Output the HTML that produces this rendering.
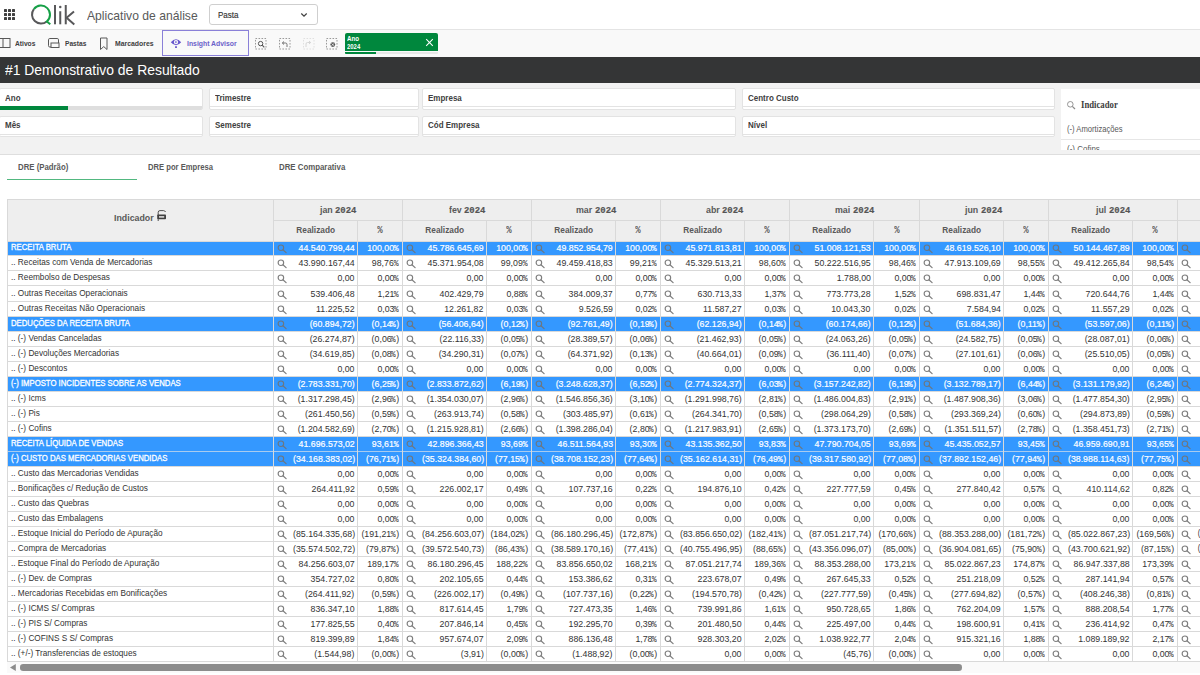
<!DOCTYPE html>
<html><head><meta charset="utf-8"><title>Qlik</title>
<style>
html,body{margin:0;padding:0;width:1200px;height:675px;overflow:hidden;background:#fff;position:relative}
.t{position:absolute;white-space:nowrap}
.r{position:absolute}
</style></head><body>
<div class="r" style="left:0.00px;top:0.00px;width:1200.00px;height:29.00px;background:#ffffff;"></div>
<div class="r" style="left:0.00px;top:29.00px;width:1200.00px;height:1.00px;background:#e4e4e4;"></div>
<div class="r" style="left:4.30px;top:9.00px;width:3.00px;height:3.00px;background:#404040;border-radius:0.6px;"></div>
<div class="r" style="left:4.30px;top:13.00px;width:3.00px;height:3.00px;background:#404040;border-radius:0.6px;"></div>
<div class="r" style="left:4.30px;top:17.00px;width:3.00px;height:3.00px;background:#404040;border-radius:0.6px;"></div>
<div class="r" style="left:8.30px;top:9.00px;width:3.00px;height:3.00px;background:#404040;border-radius:0.6px;"></div>
<div class="r" style="left:8.30px;top:13.00px;width:3.00px;height:3.00px;background:#404040;border-radius:0.6px;"></div>
<div class="r" style="left:8.30px;top:17.00px;width:3.00px;height:3.00px;background:#404040;border-radius:0.6px;"></div>
<div class="r" style="left:12.30px;top:9.00px;width:3.00px;height:3.00px;background:#404040;border-radius:0.6px;"></div>
<div class="r" style="left:12.30px;top:13.00px;width:3.00px;height:3.00px;background:#404040;border-radius:0.6px;"></div>
<div class="r" style="left:12.30px;top:17.00px;width:3.00px;height:3.00px;background:#404040;border-radius:0.6px;"></div>
<svg class="r" style="left:0px;top:0px" width="80" height="29" viewBox="0 0 80 29">
<path d="M 46.79 21.49 A 9 9 0 0 1 33.88 9.1" fill="none" stroke="#58585a" stroke-width="2"/>
<path d="M 33.88 9.1 A 9 9 0 1 1 46.79 21.49 L 50.3 24.3" fill="none" stroke="#16a047" stroke-width="2"/>
<rect x="54" y="5" width="2" height="19.3" fill="#58585a"/>
<circle cx="60.25" cy="6.9" r="1.25" fill="#58585a"/>
<rect x="59.25" y="11.25" width="2" height="13.05" fill="#58585a"/>
<rect x="64.75" y="5" width="2" height="19.3" fill="#58585a"/>
<path d="M 74 11.4 L 66.6 17.7 L 74.3 24.4" fill="none" stroke="#58585a" stroke-width="2"/>
</svg>
<div class="t" style="left:87.00px;top:6.55px;font:400 13.6px/17.68px 'Liberation Sans', sans-serif;color:#595959;transform:scaleX(0.8928);transform-origin:left;">Aplicativo de análise</div>
<div class="r" style="left:208.75px;top:4.20px;width:109.00px;height:20.60px;background:#fff;border:1px solid #cfcfcf;border-radius:3px;box-sizing:border-box;"></div>
<div class="t" style="left:217.50px;top:9.83px;font:400 8.6px/11.18px 'Liberation Sans', sans-serif;color:#333333;transform:scaleX(0.9322);transform-origin:left;-webkit-text-stroke:0.15px #333;">Pasta</div>
<svg class="r" style="left:300px;top:12px" width="8" height="6" viewBox="0 0 8 6"><path d="M1.3 1.5 L4 4.2 L6.7 1.5" fill="none" stroke="#404040" stroke-width="1.2"/></svg>
<div class="r" style="left:0.00px;top:30.00px;width:1200.00px;height:26.50px;background:#f9f9f9;"></div>
<svg class="r" style="left:-2px;top:37px" width="14" height="13" viewBox="0 0 14 13"><rect x="1" y="1.5" width="11" height="9" fill="none" stroke="#595959" stroke-width="1"/><line x1="5" y1="1.5" x2="5" y2="10.5" stroke="#595959" stroke-width="1"/></svg>
<div class="t" style="left:15.00px;top:39.33px;font:700 7.6px/9.88px 'Liberation Sans', sans-serif;color:#404040;transform:scaleX(0.8783);transform-origin:left;">Ativos</div>
<svg class="r" style="left:47px;top:37px" width="14" height="13" viewBox="0 0 14 13"><rect x="1.5" y="1.5" width="10" height="8.5" rx="1.3" fill="none" stroke="#595959" stroke-width="1"/><rect x="4" y="6" width="8" height="4.5" fill="#f9f9f9" stroke="#595959" stroke-width="1"/></svg>
<div class="t" style="left:64.60px;top:39.33px;font:700 7.6px/9.88px 'Liberation Sans', sans-serif;color:#404040;transform:scaleX(0.8732);transform-origin:left;">Pastas</div>
<svg class="r" style="left:99px;top:37px" width="10" height="14" viewBox="0 0 10 14"><path d="M1.5 1 L8 1 L8 12.5 L4.75 9.6 L1.5 12.5 Z" fill="none" stroke="#595959" stroke-width="1"/></svg>
<div class="t" style="left:114.60px;top:39.33px;font:700 7.6px/9.88px 'Liberation Sans', sans-serif;color:#404040;transform:scaleX(0.9047);transform-origin:left;">Marcadores</div>
<div class="r" style="left:162.00px;top:30.00px;width:86.50px;height:26.00px;background:transparent;border:1px solid #8a80d8;box-sizing:border-box;"></div>
<svg class="r" style="left:170px;top:37px" width="12" height="12" viewBox="0 0 12 12"><path d="M0.8 5.3 Q6 -0.6 11.2 5.3 Q6 11.2 0.8 5.3 Z" fill="#6655cc"/><circle cx="6" cy="5.1" r="2.2" fill="#f9f9f9"/><path d="M5.3 4 L7.3 5.1 L5.3 6.2 Z" fill="#6655cc"/><rect x="5" y="9.3" width="2" height="1.6" fill="#6655cc"/></svg>
<div class="t" style="left:186.50px;top:39.33px;font:700 7.6px/9.88px 'Liberation Sans', sans-serif;color:#6b5fc9;transform:scaleX(0.9013);transform-origin:left;">Insight Advisor</div>
<svg class="r" style="left:255px;top:38px" width="12" height="12" viewBox="0 0 12 12"><rect x="0.5" y="0.5" width="10.5" height="10.5" fill="none" stroke="#9a9a9a" stroke-width="1" stroke-dasharray="1.6 1.4"/><circle cx="5.6" cy="5.6" r="2.2" fill="none" stroke="#555" stroke-width="1"/><line x1="7.2" y1="7.2" x2="9.3" y2="9.3" stroke="#555" stroke-width="1.1"/></svg>
<svg class="r" style="left:279px;top:38px" width="12" height="12" viewBox="0 0 12 12"><rect x="0.5" y="0.5" width="10.5" height="10.5" fill="none" stroke="#9a9a9a" stroke-width="1" stroke-dasharray="1.6 1.4"/><path d="M8 9 L8 6.5 Q8 5 6.5 5 L3.5 5 M5 3.5 L3.3 5 L5 6.5" fill="none" stroke="#666" stroke-width="0.9"/></svg>
<svg class="r" style="left:302.5px;top:38px" width="12" height="12" viewBox="0 0 12 12"><rect x="0.5" y="0.5" width="10.5" height="10.5" fill="none" stroke="#e0e0e0" stroke-width="1" stroke-dasharray="1.6 1.4"/><path d="M3 9 L3 6 Q3 4.5 4.5 4.5 L7.5 4.5 M6 3 L7.7 4.5 L6 6" fill="none" stroke="#d6d6d6" stroke-width="1"/></svg>
<svg class="r" style="left:326px;top:38px" width="12" height="12" viewBox="0 0 12 12"><rect x="0.5" y="0.5" width="10.5" height="10.5" fill="none" stroke="#9a9a9a" stroke-width="1" stroke-dasharray="1.6 1.4"/><circle cx="6.8" cy="6.6" r="2.4" fill="#555"/><path d="M5.6 5.4 L8 7.8 M8 5.4 L5.6 7.8" stroke="#f9f9f9" stroke-width="0.8"/></svg>
<div class="r" style="left:344.70px;top:33.20px;width:93.30px;height:17.60px;background:#00873d;border-radius:2px 2px 0 0;"></div>
<div class="r" style="left:344.70px;top:51.90px;width:93.30px;height:2.10px;background:#e8e8e8;border-radius:0 0 1px 1px;"></div>
<div class="r" style="left:344.70px;top:51.90px;width:31.10px;height:2.10px;background:#00873d;border-radius:0 0 0 1px;"></div>
<div class="t" style="left:347.20px;top:33.63px;font:700 7.2px/9.36px 'Liberation Sans', sans-serif;color:#ffffff;transform:scaleX(0.8574);transform-origin:left;">Ano</div>
<div class="t" style="left:347.20px;top:41.83px;font:700 7.2px/9.36px 'Liberation Sans', sans-serif;color:#ffffff;transform:scaleX(0.8241);transform-origin:left;">2024</div>
<svg class="r" style="left:425px;top:38px" width="9" height="9" viewBox="0 0 9 9"><path d="M1.2 1.2 L7.8 7.8 M7.8 1.2 L1.2 7.8" stroke="#fff" stroke-width="1.05"/></svg>
<div class="r" style="left:0.00px;top:56.50px;width:1200.00px;height:26.10px;background:#343536;"></div>
<div class="t" style="left:5.25px;top:60.65px;font:400 14.3px/18.59px 'Liberation Sans', sans-serif;color:#ffffff;transform:scaleX(0.9725);transform-origin:left;">#1 Demonstrativo de Resultado</div>
<div class="r" style="left:0.00px;top:82.60px;width:1200.00px;height:71.70px;background:#f2f2f2;"></div>
<div class="r" style="left:0.00px;top:154.30px;width:1200.00px;height:1.00px;background:#dedede;"></div>
<div class="r" style="left:-1.00px;top:88.30px;width:204.40px;height:22.20px;background:#ffffff;border:1px solid #e3e3e3;border-radius:2px;box-sizing:border-box;"></div>
<div class="r" style="left:0.00px;top:106.30px;width:202.20px;height:3.70px;background:#dedede;border-radius:0 0 2px 0;"></div>
<div class="r" style="left:0.00px;top:106.30px;width:68.00px;height:3.70px;background:#00873d;"></div>
<div class="t" style="left:5.40px;top:91.73px;font:700 9.3px/12.09px 'Liberation Sans', sans-serif;color:#404040;transform:scaleX(0.8600);transform-origin:left;">Ano</div>
<div class="r" style="left:-1.00px;top:116.20px;width:204.40px;height:21.10px;background:#ffffff;border:1px solid #e3e3e3;border-radius:2px;box-sizing:border-box;"></div>
<div class="r" style="left:0.00px;top:134.20px;width:202.40px;height:0.90px;background:#e3e3e3;"></div>
<div class="t" style="left:5.40px;top:118.93px;font:700 9.3px/12.09px 'Liberation Sans', sans-serif;color:#404040;transform:scaleX(0.8600);transform-origin:left;">Mês</div>
<div class="r" style="left:208.60px;top:88.30px;width:210.00px;height:22.20px;background:#ffffff;border:1px solid #e3e3e3;border-radius:2px;box-sizing:border-box;"></div>
<div class="r" style="left:209.60px;top:106.30px;width:208.00px;height:0.90px;background:#e3e3e3;"></div>
<div class="t" style="left:214.60px;top:91.73px;font:700 9.3px/12.09px 'Liberation Sans', sans-serif;color:#404040;transform:scaleX(0.8600);transform-origin:left;">Trimestre</div>
<div class="r" style="left:208.60px;top:116.20px;width:210.00px;height:21.10px;background:#ffffff;border:1px solid #e3e3e3;border-radius:2px;box-sizing:border-box;"></div>
<div class="r" style="left:209.60px;top:134.20px;width:208.00px;height:0.90px;background:#e3e3e3;"></div>
<div class="t" style="left:214.60px;top:118.93px;font:700 9.3px/12.09px 'Liberation Sans', sans-serif;color:#404040;transform:scaleX(0.8600);transform-origin:left;">Semestre</div>
<div class="r" style="left:422.40px;top:88.30px;width:314.10px;height:22.20px;background:#ffffff;border:1px solid #e3e3e3;border-radius:2px;box-sizing:border-box;"></div>
<div class="r" style="left:423.40px;top:106.30px;width:312.10px;height:0.90px;background:#e3e3e3;"></div>
<div class="t" style="left:428.40px;top:91.73px;font:700 9.3px/12.09px 'Liberation Sans', sans-serif;color:#404040;transform:scaleX(0.8600);transform-origin:left;">Empresa</div>
<div class="r" style="left:422.40px;top:116.20px;width:314.10px;height:21.10px;background:#ffffff;border:1px solid #e3e3e3;border-radius:2px;box-sizing:border-box;"></div>
<div class="r" style="left:423.40px;top:134.20px;width:312.10px;height:0.90px;background:#e3e3e3;"></div>
<div class="t" style="left:428.40px;top:118.93px;font:700 9.3px/12.09px 'Liberation Sans', sans-serif;color:#404040;transform:scaleX(0.8600);transform-origin:left;">Cód Empresa</div>
<div class="r" style="left:741.70px;top:88.30px;width:313.00px;height:22.20px;background:#ffffff;border:1px solid #e3e3e3;border-radius:2px;box-sizing:border-box;"></div>
<div class="r" style="left:742.70px;top:106.30px;width:311.00px;height:0.90px;background:#e3e3e3;"></div>
<div class="t" style="left:747.70px;top:91.73px;font:700 9.3px/12.09px 'Liberation Sans', sans-serif;color:#404040;transform:scaleX(0.8600);transform-origin:left;">Centro Custo</div>
<div class="r" style="left:741.70px;top:116.20px;width:313.00px;height:21.10px;background:#ffffff;border:1px solid #e3e3e3;border-radius:2px;box-sizing:border-box;"></div>
<div class="r" style="left:742.70px;top:134.20px;width:311.00px;height:0.90px;background:#e3e3e3;"></div>
<div class="t" style="left:747.70px;top:118.93px;font:700 9.3px/12.09px 'Liberation Sans', sans-serif;color:#404040;transform:scaleX(0.8600);transform-origin:left;">Nível</div>
<div class="r" style="left:1061.00px;top:89.00px;width:139.00px;height:60.70px;background:#ffffff;"></div>
<svg class="r" style="left:1066px;top:100px" width="12" height="11" viewBox="0 0 12 11"><circle cx="4.3" cy="4.3" r="2.8" fill="none" stroke="#8a8a8a" stroke-width="0.9"/><line x1="6.3" y1="6.3" x2="9" y2="9" stroke="#8a8a8a" stroke-width="1.2"/></svg>
<div class="t" style="left:1080.70px;top:97.53px;font:700 10.3px/13.39px 'Liberation Serif', serif;color:#404040;transform:scaleX(0.8460);transform-origin:left;">Indicador</div>
<div class="t" style="left:1067.00px;top:124.03px;font:400 8.6px/11.18px 'Liberation Sans', sans-serif;color:#595959;transform:scaleX(0.8897);transform-origin:left;">(-) Amortizações</div>
<div class="r" style="left:1061.00px;top:139.20px;width:139.00px;height:1.00px;background:#e6e6e6;"></div>
<div class="r" style="left:1061px;top:140.2px;width:139px;height:9.5px;overflow:hidden"><div class="t" style="left:6px;top:3.8px;font:400 8.6px/11px 'Liberation Sans', sans-serif;color:#595959;transform:scaleX(0.93);transform-origin:left">(-) Cofins</div></div>
<div class="t" style="left:18.00px;top:160.73px;font:700 9.3px/12.09px 'Liberation Sans', sans-serif;color:#595959;transform:scaleX(0.8391);transform-origin:left;">DRE (Padrão)</div>
<div class="t" style="left:148.30px;top:160.73px;font:700 9.3px/12.09px 'Liberation Sans', sans-serif;color:#595959;transform:scaleX(0.8220);transform-origin:left;">DRE por Empresa</div>
<div class="t" style="left:279.00px;top:160.73px;font:700 9.3px/12.09px 'Liberation Sans', sans-serif;color:#595959;transform:scaleX(0.8440);transform-origin:left;">DRE Comparativa</div>
<div class="r" style="left:7.00px;top:178.80px;width:129.70px;height:1.70px;background:#52b880;"></div>
<div class="r" style="left:7.00px;top:199.50px;width:1193.00px;height:41.50px;background:#eeeeee;"></div>
<div class="r" style="left:7.00px;top:242.00px;width:1193.00px;height:13.00px;background:#3498ff;"></div>
<div class="r" style="left:7.00px;top:317.00px;width:1193.00px;height:14.00px;background:#3498ff;"></div>
<div class="r" style="left:7.00px;top:377.00px;width:1193.00px;height:14.00px;background:#3498ff;"></div>
<div class="r" style="left:7.00px;top:437.00px;width:1193.00px;height:14.00px;background:#3498ff;"></div>
<div class="r" style="left:7.00px;top:452.00px;width:1193.00px;height:14.00px;background:#3498ff;"></div>
<div class="r" style="left:7.00px;top:199.00px;width:1193.00px;height:1.00px;background:#d9d9d9;"></div>
<div class="r" style="left:273.00px;top:220.00px;width:927.00px;height:1.00px;background:#d9d9d9;"></div>
<div class="r" style="left:7.00px;top:241.00px;width:1193.00px;height:1.00px;background:#d9d9d9;"></div>
<div class="r" style="left:7.00px;top:255.00px;width:1193.00px;height:1.00px;background:#d9d9d9;"></div>
<div class="r" style="left:7.00px;top:270.00px;width:1193.00px;height:1.00px;background:#d9d9d9;"></div>
<div class="r" style="left:7.00px;top:285.00px;width:1193.00px;height:1.00px;background:#d9d9d9;"></div>
<div class="r" style="left:7.00px;top:301.00px;width:1193.00px;height:1.00px;background:#d9d9d9;"></div>
<div class="r" style="left:7.00px;top:316.00px;width:1193.00px;height:1.00px;background:#d9d9d9;"></div>
<div class="r" style="left:7.00px;top:331.00px;width:1193.00px;height:1.00px;background:#d9d9d9;"></div>
<div class="r" style="left:7.00px;top:346.00px;width:1193.00px;height:1.00px;background:#d9d9d9;"></div>
<div class="r" style="left:7.00px;top:361.00px;width:1193.00px;height:1.00px;background:#d9d9d9;"></div>
<div class="r" style="left:7.00px;top:376.00px;width:1193.00px;height:1.00px;background:#d9d9d9;"></div>
<div class="r" style="left:7.00px;top:391.00px;width:1193.00px;height:1.00px;background:#d9d9d9;"></div>
<div class="r" style="left:7.00px;top:406.00px;width:1193.00px;height:1.00px;background:#d9d9d9;"></div>
<div class="r" style="left:7.00px;top:421.00px;width:1193.00px;height:1.00px;background:#d9d9d9;"></div>
<div class="r" style="left:7.00px;top:436.00px;width:1193.00px;height:1.00px;background:#d9d9d9;"></div>
<div class="r" style="left:7.00px;top:451.00px;width:1193.00px;height:1.00px;background:#a9cbee;"></div>
<div class="r" style="left:7.00px;top:466.00px;width:1193.00px;height:1.00px;background:#d9d9d9;"></div>
<div class="r" style="left:7.00px;top:481.00px;width:1193.00px;height:1.00px;background:#d9d9d9;"></div>
<div class="r" style="left:7.00px;top:496.00px;width:1193.00px;height:1.00px;background:#d9d9d9;"></div>
<div class="r" style="left:7.00px;top:511.00px;width:1193.00px;height:1.00px;background:#d9d9d9;"></div>
<div class="r" style="left:7.00px;top:526.00px;width:1193.00px;height:1.00px;background:#d9d9d9;"></div>
<div class="r" style="left:7.00px;top:541.00px;width:1193.00px;height:1.00px;background:#d9d9d9;"></div>
<div class="r" style="left:7.00px;top:556.00px;width:1193.00px;height:1.00px;background:#d9d9d9;"></div>
<div class="r" style="left:7.00px;top:571.00px;width:1193.00px;height:1.00px;background:#d9d9d9;"></div>
<div class="r" style="left:7.00px;top:586.00px;width:1193.00px;height:1.00px;background:#d9d9d9;"></div>
<div class="r" style="left:7.00px;top:601.00px;width:1193.00px;height:1.00px;background:#d9d9d9;"></div>
<div class="r" style="left:7.00px;top:616.00px;width:1193.00px;height:1.00px;background:#d9d9d9;"></div>
<div class="r" style="left:7.00px;top:631.00px;width:1193.00px;height:1.00px;background:#d9d9d9;"></div>
<div class="r" style="left:7.00px;top:646.00px;width:1193.00px;height:1.00px;background:#d9d9d9;"></div>
<div class="r" style="left:7.00px;top:661.00px;width:1193.00px;height:1.00px;background:#d9d9d9;"></div>
<div class="r" style="left:7.00px;top:199.50px;width:1.00px;height:462.50px;background:#d9d9d9;"></div>
<div class="r" style="left:273.00px;top:199.50px;width:1.00px;height:462.50px;background:#d9d9d9;"></div>
<div class="r" style="left:357.00px;top:220.20px;width:1.00px;height:441.80px;background:#d9d9d9;"></div>
<div class="r" style="left:402.00px;top:199.50px;width:1.00px;height:462.50px;background:#d9d9d9;"></div>
<div class="r" style="left:486.00px;top:220.20px;width:1.00px;height:441.80px;background:#d9d9d9;"></div>
<div class="r" style="left:531.00px;top:199.50px;width:1.00px;height:462.50px;background:#d9d9d9;"></div>
<div class="r" style="left:615.00px;top:220.20px;width:1.00px;height:441.80px;background:#d9d9d9;"></div>
<div class="r" style="left:660.00px;top:199.50px;width:1.00px;height:462.50px;background:#d9d9d9;"></div>
<div class="r" style="left:744.00px;top:220.20px;width:1.00px;height:441.80px;background:#d9d9d9;"></div>
<div class="r" style="left:789.00px;top:199.50px;width:1.00px;height:462.50px;background:#d9d9d9;"></div>
<div class="r" style="left:873.00px;top:220.20px;width:1.00px;height:441.80px;background:#d9d9d9;"></div>
<div class="r" style="left:919.00px;top:199.50px;width:1.00px;height:462.50px;background:#d9d9d9;"></div>
<div class="r" style="left:1003.00px;top:220.20px;width:1.00px;height:441.80px;background:#d9d9d9;"></div>
<div class="r" style="left:1048.00px;top:199.50px;width:1.00px;height:462.50px;background:#d9d9d9;"></div>
<div class="r" style="left:1132.00px;top:220.20px;width:1.00px;height:441.80px;background:#d9d9d9;"></div>
<div class="r" style="left:1177.00px;top:199.50px;width:1.00px;height:462.50px;background:#d9d9d9;"></div>
<div class="r" style="left:1261.00px;top:220.20px;width:1.00px;height:441.80px;background:#d9d9d9;"></div>
<div class="t" style="left:114.30px;top:212.03px;font:700 9.3px/12.09px 'Liberation Sans', sans-serif;color:#595959;transform:scaleX(0.9485);transform-origin:left;">Indicador</div>
<svg class="r" style="left:156px;top:209px" width="12" height="13" viewBox="0 0 12 13"><path d="M2.2 7 L2.2 3.3 Q2.2 1.6 4 1.6 L7.6 1.6 Q8.8 1.6 9.6 3" fill="none" stroke="#404040" stroke-width="0.9"/><rect x="1.2" y="5.6" width="8.8" height="4.6" rx="0.8" fill="#404040"/><rect x="3" y="7.2" width="5.2" height="1.4" fill="#eee"/><line x1="2.2" y1="10.2" x2="2.2" y2="12" stroke="#404040" stroke-width="0.9"/></svg>
<div class="t" style="left:319.57px;top:203.83px;font:700 9.3px/12.09px 'Liberation Sans', sans-serif;color:#595959;transform:scaleX(0.9500);transform-origin:left;">jan</div>
<div class="t" style="left:334.93px;top:205.03px;font:700 9.9px/12.87px 'Liberation Mono', monospace;color:#555555;transform:scaleX(0.9048);transform-origin:left;-webkit-text-stroke:0.2px #555;">2024</div>
<div class="t" style="left:293.79px;top:223.63px;font:700 9.3px/12.09px 'Liberation Sans', sans-serif;color:#595959;transform:scaleX(0.8914);transform-origin:center;">Realizado</div>
<div class="t" style="left:377.00px;top:224.14px;font:700 10.0px/13.00px 'Liberation Mono', monospace;color:#595959;transform:scaleX(0.8999);transform-origin:center;">%</div>
<div class="t" style="left:448.56px;top:203.83px;font:700 9.3px/12.09px 'Liberation Sans', sans-serif;color:#595959;transform:scaleX(0.9500);transform-origin:left;">fev</div>
<div class="t" style="left:463.94px;top:205.03px;font:700 9.9px/12.87px 'Liberation Mono', monospace;color:#555555;transform:scaleX(0.9048);transform-origin:left;-webkit-text-stroke:0.2px #555;">2024</div>
<div class="t" style="left:422.79px;top:223.63px;font:700 9.3px/12.09px 'Liberation Sans', sans-serif;color:#595959;transform:scaleX(0.8914);transform-origin:center;">Realizado</div>
<div class="t" style="left:506.00px;top:224.14px;font:700 10.0px/13.00px 'Liberation Mono', monospace;color:#595959;transform:scaleX(0.8999);transform-origin:center;">%</div>
<div class="t" style="left:575.85px;top:203.83px;font:700 9.3px/12.09px 'Liberation Sans', sans-serif;color:#595959;transform:scaleX(0.9500);transform-origin:left;">mar</div>
<div class="t" style="left:594.65px;top:205.03px;font:700 9.9px/12.87px 'Liberation Mono', monospace;color:#555555;transform:scaleX(0.9048);transform-origin:left;-webkit-text-stroke:0.2px #555;">2024</div>
<div class="t" style="left:551.79px;top:223.63px;font:700 9.3px/12.09px 'Liberation Sans', sans-serif;color:#595959;transform:scaleX(0.8914);transform-origin:center;">Realizado</div>
<div class="t" style="left:635.00px;top:224.14px;font:700 10.0px/13.00px 'Liberation Mono', monospace;color:#595959;transform:scaleX(0.8999);transform-origin:center;">%</div>
<div class="t" style="left:706.08px;top:203.83px;font:700 9.3px/12.09px 'Liberation Sans', sans-serif;color:#595959;transform:scaleX(0.9500);transform-origin:left;">abr</div>
<div class="t" style="left:722.42px;top:205.03px;font:700 9.9px/12.87px 'Liberation Mono', monospace;color:#555555;transform:scaleX(0.9048);transform-origin:left;-webkit-text-stroke:0.2px #555;">2024</div>
<div class="t" style="left:680.79px;top:223.63px;font:700 9.3px/12.09px 'Liberation Sans', sans-serif;color:#595959;transform:scaleX(0.8914);transform-origin:center;">Realizado</div>
<div class="t" style="left:764.00px;top:224.14px;font:700 10.0px/13.00px 'Liberation Mono', monospace;color:#595959;transform:scaleX(0.8999);transform-origin:center;">%</div>
<div class="t" style="left:834.84px;top:203.83px;font:700 9.3px/12.09px 'Liberation Sans', sans-serif;color:#595959;transform:scaleX(0.9500);transform-origin:left;">mai</div>
<div class="t" style="left:852.66px;top:205.03px;font:700 9.9px/12.87px 'Liberation Mono', monospace;color:#555555;transform:scaleX(0.9048);transform-origin:left;-webkit-text-stroke:0.2px #555;">2024</div>
<div class="t" style="left:809.79px;top:223.63px;font:700 9.3px/12.09px 'Liberation Sans', sans-serif;color:#595959;transform:scaleX(0.8914);transform-origin:center;">Realizado</div>
<div class="t" style="left:893.50px;top:224.14px;font:700 10.0px/13.00px 'Liberation Mono', monospace;color:#595959;transform:scaleX(0.8999);transform-origin:center;">%</div>
<div class="t" style="left:965.33px;top:203.83px;font:700 9.3px/12.09px 'Liberation Sans', sans-serif;color:#595959;transform:scaleX(0.9500);transform-origin:left;">jun</div>
<div class="t" style="left:981.17px;top:205.03px;font:700 9.9px/12.87px 'Liberation Mono', monospace;color:#555555;transform:scaleX(0.9048);transform-origin:left;-webkit-text-stroke:0.2px #555;">2024</div>
<div class="t" style="left:939.79px;top:223.63px;font:700 9.3px/12.09px 'Liberation Sans', sans-serif;color:#595959;transform:scaleX(0.8914);transform-origin:center;">Realizado</div>
<div class="t" style="left:1023.00px;top:224.14px;font:700 10.0px/13.00px 'Liberation Mono', monospace;color:#595959;transform:scaleX(0.8999);transform-origin:center;">%</div>
<div class="t" style="left:1095.80px;top:203.83px;font:700 9.3px/12.09px 'Liberation Sans', sans-serif;color:#595959;transform:scaleX(0.9500);transform-origin:left;">jul</div>
<div class="t" style="left:1108.70px;top:205.03px;font:700 9.9px/12.87px 'Liberation Mono', monospace;color:#555555;transform:scaleX(0.9048);transform-origin:left;-webkit-text-stroke:0.2px #555;">2024</div>
<div class="t" style="left:1068.79px;top:223.63px;font:700 9.3px/12.09px 'Liberation Sans', sans-serif;color:#595959;transform:scaleX(0.8914);transform-origin:center;">Realizado</div>
<div class="t" style="left:1152.00px;top:224.14px;font:700 10.0px/13.00px 'Liberation Mono', monospace;color:#595959;transform:scaleX(0.8999);transform-origin:center;">%</div>
<div class="t" style="left:11.40px;top:242.43px;font:400 9.0px/11.70px 'Liberation Sans', sans-serif;color:#ffffff;transform:scaleX(0.8600);transform-origin:left;-webkit-text-stroke:0.3px #fff;">RECEITA BRUTA</div>
<svg class="r" style="left:276.70px;top:243.60px" width="12" height="11" viewBox="0 0 12 11"><circle cx="3.9" cy="3.7" r="2.75" fill="none" stroke="#6c7782" stroke-width="1.15"/><line x1="5.9" y1="5.8" x2="9.1" y2="8.6" stroke="#6c7782" stroke-width="1.25" stroke-linecap="round"/></svg>
<div class="t" style="left:293.85px;top:241.93px;font:400 9.5px/12.35px 'Liberation Sans', sans-serif;color:#ffffff;transform:scaleX(0.9250);transform-origin:right;-webkit-text-stroke:0.2px #fff;">44.540.799,44</div>
<div class="t" style="left:393.40px;top:242.69px;font:400 9.5px/12.35px 'Liberation Mono', monospace;color:#ffffff;transform:scaleX(0.8595);transform-origin:right;-webkit-text-stroke:0.2px #fff;">%</div>
<div class="t" style="left:365.14px;top:241.93px;font:400 9.5px/12.35px 'Liberation Sans', sans-serif;color:#ffffff;transform:scaleX(0.9250);transform-origin:right;-webkit-text-stroke:0.2px #fff;">100,00</div>
<svg class="r" style="left:405.70px;top:243.60px" width="12" height="11" viewBox="0 0 12 11"><circle cx="3.9" cy="3.7" r="2.75" fill="none" stroke="#6c7782" stroke-width="1.15"/><line x1="5.9" y1="5.8" x2="9.1" y2="8.6" stroke="#6c7782" stroke-width="1.25" stroke-linecap="round"/></svg>
<div class="t" style="left:422.85px;top:241.93px;font:400 9.5px/12.35px 'Liberation Sans', sans-serif;color:#ffffff;transform:scaleX(0.9250);transform-origin:right;-webkit-text-stroke:0.2px #fff;">45.786.645,69</div>
<div class="t" style="left:522.40px;top:242.69px;font:400 9.5px/12.35px 'Liberation Mono', monospace;color:#ffffff;transform:scaleX(0.8595);transform-origin:right;-webkit-text-stroke:0.2px #fff;">%</div>
<div class="t" style="left:494.14px;top:241.93px;font:400 9.5px/12.35px 'Liberation Sans', sans-serif;color:#ffffff;transform:scaleX(0.9250);transform-origin:right;-webkit-text-stroke:0.2px #fff;">100,00</div>
<svg class="r" style="left:534.70px;top:243.60px" width="12" height="11" viewBox="0 0 12 11"><circle cx="3.9" cy="3.7" r="2.75" fill="none" stroke="#6c7782" stroke-width="1.15"/><line x1="5.9" y1="5.8" x2="9.1" y2="8.6" stroke="#6c7782" stroke-width="1.25" stroke-linecap="round"/></svg>
<div class="t" style="left:551.85px;top:241.93px;font:400 9.5px/12.35px 'Liberation Sans', sans-serif;color:#ffffff;transform:scaleX(0.9250);transform-origin:right;-webkit-text-stroke:0.2px #fff;">49.852.954,79</div>
<div class="t" style="left:651.40px;top:242.69px;font:400 9.5px/12.35px 'Liberation Mono', monospace;color:#ffffff;transform:scaleX(0.8595);transform-origin:right;-webkit-text-stroke:0.2px #fff;">%</div>
<div class="t" style="left:623.14px;top:241.93px;font:400 9.5px/12.35px 'Liberation Sans', sans-serif;color:#ffffff;transform:scaleX(0.9250);transform-origin:right;-webkit-text-stroke:0.2px #fff;">100,00</div>
<svg class="r" style="left:663.70px;top:243.60px" width="12" height="11" viewBox="0 0 12 11"><circle cx="3.9" cy="3.7" r="2.75" fill="none" stroke="#6c7782" stroke-width="1.15"/><line x1="5.9" y1="5.8" x2="9.1" y2="8.6" stroke="#6c7782" stroke-width="1.25" stroke-linecap="round"/></svg>
<div class="t" style="left:680.85px;top:241.93px;font:400 9.5px/12.35px 'Liberation Sans', sans-serif;color:#ffffff;transform:scaleX(0.9250);transform-origin:right;-webkit-text-stroke:0.2px #fff;">45.971.813,81</div>
<div class="t" style="left:780.40px;top:242.69px;font:400 9.5px/12.35px 'Liberation Mono', monospace;color:#ffffff;transform:scaleX(0.8595);transform-origin:right;-webkit-text-stroke:0.2px #fff;">%</div>
<div class="t" style="left:752.14px;top:241.93px;font:400 9.5px/12.35px 'Liberation Sans', sans-serif;color:#ffffff;transform:scaleX(0.9250);transform-origin:right;-webkit-text-stroke:0.2px #fff;">100,00</div>
<svg class="r" style="left:792.70px;top:243.60px" width="12" height="11" viewBox="0 0 12 11"><circle cx="3.9" cy="3.7" r="2.75" fill="none" stroke="#6c7782" stroke-width="1.15"/><line x1="5.9" y1="5.8" x2="9.1" y2="8.6" stroke="#6c7782" stroke-width="1.25" stroke-linecap="round"/></svg>
<div class="t" style="left:809.85px;top:241.93px;font:400 9.5px/12.35px 'Liberation Sans', sans-serif;color:#ffffff;transform:scaleX(0.9250);transform-origin:right;-webkit-text-stroke:0.2px #fff;">51.008.121,53</div>
<div class="t" style="left:910.40px;top:242.69px;font:400 9.5px/12.35px 'Liberation Mono', monospace;color:#ffffff;transform:scaleX(0.8595);transform-origin:right;-webkit-text-stroke:0.2px #fff;">%</div>
<div class="t" style="left:882.14px;top:241.93px;font:400 9.5px/12.35px 'Liberation Sans', sans-serif;color:#ffffff;transform:scaleX(0.9250);transform-origin:right;-webkit-text-stroke:0.2px #fff;">100,00</div>
<svg class="r" style="left:922.70px;top:243.60px" width="12" height="11" viewBox="0 0 12 11"><circle cx="3.9" cy="3.7" r="2.75" fill="none" stroke="#6c7782" stroke-width="1.15"/><line x1="5.9" y1="5.8" x2="9.1" y2="8.6" stroke="#6c7782" stroke-width="1.25" stroke-linecap="round"/></svg>
<div class="t" style="left:939.85px;top:241.93px;font:400 9.5px/12.35px 'Liberation Sans', sans-serif;color:#ffffff;transform:scaleX(0.9250);transform-origin:right;-webkit-text-stroke:0.2px #fff;">48.619.526,10</div>
<div class="t" style="left:1039.40px;top:242.69px;font:400 9.5px/12.35px 'Liberation Mono', monospace;color:#ffffff;transform:scaleX(0.8595);transform-origin:right;-webkit-text-stroke:0.2px #fff;">%</div>
<div class="t" style="left:1011.14px;top:241.93px;font:400 9.5px/12.35px 'Liberation Sans', sans-serif;color:#ffffff;transform:scaleX(0.9250);transform-origin:right;-webkit-text-stroke:0.2px #fff;">100,00</div>
<svg class="r" style="left:1051.70px;top:243.60px" width="12" height="11" viewBox="0 0 12 11"><circle cx="3.9" cy="3.7" r="2.75" fill="none" stroke="#6c7782" stroke-width="1.15"/><line x1="5.9" y1="5.8" x2="9.1" y2="8.6" stroke="#6c7782" stroke-width="1.25" stroke-linecap="round"/></svg>
<div class="t" style="left:1068.85px;top:241.93px;font:400 9.5px/12.35px 'Liberation Sans', sans-serif;color:#ffffff;transform:scaleX(0.9250);transform-origin:right;-webkit-text-stroke:0.2px #fff;">50.144.467,89</div>
<div class="t" style="left:1168.40px;top:242.69px;font:400 9.5px/12.35px 'Liberation Mono', monospace;color:#ffffff;transform:scaleX(0.8595);transform-origin:right;-webkit-text-stroke:0.2px #fff;">%</div>
<div class="t" style="left:1140.14px;top:241.93px;font:400 9.5px/12.35px 'Liberation Sans', sans-serif;color:#ffffff;transform:scaleX(0.9250);transform-origin:right;-webkit-text-stroke:0.2px #fff;">100,00</div>
<svg class="r" style="left:1181.10px;top:243.60px" width="12" height="11" viewBox="0 0 12 11"><circle cx="3.9" cy="3.7" r="2.75" fill="none" stroke="#6c7782" stroke-width="1.15"/><line x1="5.9" y1="5.8" x2="9.1" y2="8.6" stroke="#6c7782" stroke-width="1.25" stroke-linecap="round"/></svg>
<div class="t" style="left:10.90px;top:257.43px;font:400 9.0px/11.70px 'Liberation Sans', sans-serif;color:#333333;transform:scaleX(0.9150);transform-origin:left;">.. Receitas com Venda de Mercadorias</div>
<svg class="r" style="left:276.70px;top:258.60px" width="12" height="11" viewBox="0 0 12 11"><circle cx="3.9" cy="3.7" r="2.75" fill="none" stroke="#7e7e7e" stroke-width="1.15"/><line x1="5.9" y1="5.8" x2="9.1" y2="8.6" stroke="#7e7e7e" stroke-width="1.25" stroke-linecap="round"/></svg>
<div class="t" style="left:293.85px;top:256.93px;font:400 9.5px/12.35px 'Liberation Sans', sans-serif;color:#333333;transform:scaleX(0.9250);transform-origin:right;">43.990.167,44</div>
<div class="t" style="left:393.40px;top:257.69px;font:400 9.5px/12.35px 'Liberation Mono', monospace;color:#333333;transform:scaleX(0.8595);transform-origin:right;">%</div>
<div class="t" style="left:370.43px;top:256.93px;font:400 9.5px/12.35px 'Liberation Sans', sans-serif;color:#333333;transform:scaleX(0.9250);transform-origin:right;">98,76</div>
<svg class="r" style="left:405.70px;top:258.60px" width="12" height="11" viewBox="0 0 12 11"><circle cx="3.9" cy="3.7" r="2.75" fill="none" stroke="#7e7e7e" stroke-width="1.15"/><line x1="5.9" y1="5.8" x2="9.1" y2="8.6" stroke="#7e7e7e" stroke-width="1.25" stroke-linecap="round"/></svg>
<div class="t" style="left:422.85px;top:256.93px;font:400 9.5px/12.35px 'Liberation Sans', sans-serif;color:#333333;transform:scaleX(0.9250);transform-origin:right;">45.371.954,08</div>
<div class="t" style="left:522.40px;top:257.69px;font:400 9.5px/12.35px 'Liberation Mono', monospace;color:#333333;transform:scaleX(0.8595);transform-origin:right;">%</div>
<div class="t" style="left:499.43px;top:256.93px;font:400 9.5px/12.35px 'Liberation Sans', sans-serif;color:#333333;transform:scaleX(0.9250);transform-origin:right;">99,09</div>
<svg class="r" style="left:534.70px;top:258.60px" width="12" height="11" viewBox="0 0 12 11"><circle cx="3.9" cy="3.7" r="2.75" fill="none" stroke="#7e7e7e" stroke-width="1.15"/><line x1="5.9" y1="5.8" x2="9.1" y2="8.6" stroke="#7e7e7e" stroke-width="1.25" stroke-linecap="round"/></svg>
<div class="t" style="left:551.85px;top:256.93px;font:400 9.5px/12.35px 'Liberation Sans', sans-serif;color:#333333;transform:scaleX(0.9250);transform-origin:right;">49.459.418,83</div>
<div class="t" style="left:651.40px;top:257.69px;font:400 9.5px/12.35px 'Liberation Mono', monospace;color:#333333;transform:scaleX(0.8595);transform-origin:right;">%</div>
<div class="t" style="left:628.43px;top:256.93px;font:400 9.5px/12.35px 'Liberation Sans', sans-serif;color:#333333;transform:scaleX(0.9250);transform-origin:right;">99,21</div>
<svg class="r" style="left:663.70px;top:258.60px" width="12" height="11" viewBox="0 0 12 11"><circle cx="3.9" cy="3.7" r="2.75" fill="none" stroke="#7e7e7e" stroke-width="1.15"/><line x1="5.9" y1="5.8" x2="9.1" y2="8.6" stroke="#7e7e7e" stroke-width="1.25" stroke-linecap="round"/></svg>
<div class="t" style="left:680.85px;top:256.93px;font:400 9.5px/12.35px 'Liberation Sans', sans-serif;color:#333333;transform:scaleX(0.9250);transform-origin:right;">45.329.513,21</div>
<div class="t" style="left:780.40px;top:257.69px;font:400 9.5px/12.35px 'Liberation Mono', monospace;color:#333333;transform:scaleX(0.8595);transform-origin:right;">%</div>
<div class="t" style="left:757.43px;top:256.93px;font:400 9.5px/12.35px 'Liberation Sans', sans-serif;color:#333333;transform:scaleX(0.9250);transform-origin:right;">98,60</div>
<svg class="r" style="left:792.70px;top:258.60px" width="12" height="11" viewBox="0 0 12 11"><circle cx="3.9" cy="3.7" r="2.75" fill="none" stroke="#7e7e7e" stroke-width="1.15"/><line x1="5.9" y1="5.8" x2="9.1" y2="8.6" stroke="#7e7e7e" stroke-width="1.25" stroke-linecap="round"/></svg>
<div class="t" style="left:809.85px;top:256.93px;font:400 9.5px/12.35px 'Liberation Sans', sans-serif;color:#333333;transform:scaleX(0.9250);transform-origin:right;">50.222.516,95</div>
<div class="t" style="left:910.40px;top:257.69px;font:400 9.5px/12.35px 'Liberation Mono', monospace;color:#333333;transform:scaleX(0.8595);transform-origin:right;">%</div>
<div class="t" style="left:887.43px;top:256.93px;font:400 9.5px/12.35px 'Liberation Sans', sans-serif;color:#333333;transform:scaleX(0.9250);transform-origin:right;">98,46</div>
<svg class="r" style="left:922.70px;top:258.60px" width="12" height="11" viewBox="0 0 12 11"><circle cx="3.9" cy="3.7" r="2.75" fill="none" stroke="#7e7e7e" stroke-width="1.15"/><line x1="5.9" y1="5.8" x2="9.1" y2="8.6" stroke="#7e7e7e" stroke-width="1.25" stroke-linecap="round"/></svg>
<div class="t" style="left:939.85px;top:256.93px;font:400 9.5px/12.35px 'Liberation Sans', sans-serif;color:#333333;transform:scaleX(0.9250);transform-origin:right;">47.913.109,69</div>
<div class="t" style="left:1039.40px;top:257.69px;font:400 9.5px/12.35px 'Liberation Mono', monospace;color:#333333;transform:scaleX(0.8595);transform-origin:right;">%</div>
<div class="t" style="left:1016.43px;top:256.93px;font:400 9.5px/12.35px 'Liberation Sans', sans-serif;color:#333333;transform:scaleX(0.9250);transform-origin:right;">98,55</div>
<svg class="r" style="left:1051.70px;top:258.60px" width="12" height="11" viewBox="0 0 12 11"><circle cx="3.9" cy="3.7" r="2.75" fill="none" stroke="#7e7e7e" stroke-width="1.15"/><line x1="5.9" y1="5.8" x2="9.1" y2="8.6" stroke="#7e7e7e" stroke-width="1.25" stroke-linecap="round"/></svg>
<div class="t" style="left:1068.85px;top:256.93px;font:400 9.5px/12.35px 'Liberation Sans', sans-serif;color:#333333;transform:scaleX(0.9250);transform-origin:right;">49.412.265,84</div>
<div class="t" style="left:1168.40px;top:257.69px;font:400 9.5px/12.35px 'Liberation Mono', monospace;color:#333333;transform:scaleX(0.8595);transform-origin:right;">%</div>
<div class="t" style="left:1145.43px;top:256.93px;font:400 9.5px/12.35px 'Liberation Sans', sans-serif;color:#333333;transform:scaleX(0.9250);transform-origin:right;">98,54</div>
<svg class="r" style="left:1181.10px;top:258.60px" width="12" height="11" viewBox="0 0 12 11"><circle cx="3.9" cy="3.7" r="2.75" fill="none" stroke="#7e7e7e" stroke-width="1.15"/><line x1="5.9" y1="5.8" x2="9.1" y2="8.6" stroke="#7e7e7e" stroke-width="1.25" stroke-linecap="round"/></svg>
<div class="t" style="left:10.90px;top:272.43px;font:400 9.0px/11.70px 'Liberation Sans', sans-serif;color:#333333;transform:scaleX(0.9150);transform-origin:left;">.. Reembolso de Despesas</div>
<svg class="r" style="left:276.70px;top:273.60px" width="12" height="11" viewBox="0 0 12 11"><circle cx="3.9" cy="3.7" r="2.75" fill="none" stroke="#7e7e7e" stroke-width="1.15"/><line x1="5.9" y1="5.8" x2="9.1" y2="8.6" stroke="#7e7e7e" stroke-width="1.25" stroke-linecap="round"/></svg>
<div class="t" style="left:336.11px;top:271.93px;font:400 9.5px/12.35px 'Liberation Sans', sans-serif;color:#333333;transform:scaleX(0.9250);transform-origin:right;">0,00</div>
<div class="t" style="left:393.40px;top:272.69px;font:400 9.5px/12.35px 'Liberation Mono', monospace;color:#333333;transform:scaleX(0.8595);transform-origin:right;">%</div>
<div class="t" style="left:375.71px;top:271.93px;font:400 9.5px/12.35px 'Liberation Sans', sans-serif;color:#333333;transform:scaleX(0.9250);transform-origin:right;">0,00</div>
<svg class="r" style="left:405.70px;top:273.60px" width="12" height="11" viewBox="0 0 12 11"><circle cx="3.9" cy="3.7" r="2.75" fill="none" stroke="#7e7e7e" stroke-width="1.15"/><line x1="5.9" y1="5.8" x2="9.1" y2="8.6" stroke="#7e7e7e" stroke-width="1.25" stroke-linecap="round"/></svg>
<div class="t" style="left:465.11px;top:271.93px;font:400 9.5px/12.35px 'Liberation Sans', sans-serif;color:#333333;transform:scaleX(0.9250);transform-origin:right;">0,00</div>
<div class="t" style="left:522.40px;top:272.69px;font:400 9.5px/12.35px 'Liberation Mono', monospace;color:#333333;transform:scaleX(0.8595);transform-origin:right;">%</div>
<div class="t" style="left:504.71px;top:271.93px;font:400 9.5px/12.35px 'Liberation Sans', sans-serif;color:#333333;transform:scaleX(0.9250);transform-origin:right;">0,00</div>
<svg class="r" style="left:534.70px;top:273.60px" width="12" height="11" viewBox="0 0 12 11"><circle cx="3.9" cy="3.7" r="2.75" fill="none" stroke="#7e7e7e" stroke-width="1.15"/><line x1="5.9" y1="5.8" x2="9.1" y2="8.6" stroke="#7e7e7e" stroke-width="1.25" stroke-linecap="round"/></svg>
<div class="t" style="left:594.11px;top:271.93px;font:400 9.5px/12.35px 'Liberation Sans', sans-serif;color:#333333;transform:scaleX(0.9250);transform-origin:right;">0,00</div>
<div class="t" style="left:651.40px;top:272.69px;font:400 9.5px/12.35px 'Liberation Mono', monospace;color:#333333;transform:scaleX(0.8595);transform-origin:right;">%</div>
<div class="t" style="left:633.71px;top:271.93px;font:400 9.5px/12.35px 'Liberation Sans', sans-serif;color:#333333;transform:scaleX(0.9250);transform-origin:right;">0,00</div>
<svg class="r" style="left:663.70px;top:273.60px" width="12" height="11" viewBox="0 0 12 11"><circle cx="3.9" cy="3.7" r="2.75" fill="none" stroke="#7e7e7e" stroke-width="1.15"/><line x1="5.9" y1="5.8" x2="9.1" y2="8.6" stroke="#7e7e7e" stroke-width="1.25" stroke-linecap="round"/></svg>
<div class="t" style="left:723.11px;top:271.93px;font:400 9.5px/12.35px 'Liberation Sans', sans-serif;color:#333333;transform:scaleX(0.9250);transform-origin:right;">0,00</div>
<div class="t" style="left:780.40px;top:272.69px;font:400 9.5px/12.35px 'Liberation Mono', monospace;color:#333333;transform:scaleX(0.8595);transform-origin:right;">%</div>
<div class="t" style="left:762.71px;top:271.93px;font:400 9.5px/12.35px 'Liberation Sans', sans-serif;color:#333333;transform:scaleX(0.9250);transform-origin:right;">0,00</div>
<svg class="r" style="left:792.70px;top:273.60px" width="12" height="11" viewBox="0 0 12 11"><circle cx="3.9" cy="3.7" r="2.75" fill="none" stroke="#7e7e7e" stroke-width="1.15"/><line x1="5.9" y1="5.8" x2="9.1" y2="8.6" stroke="#7e7e7e" stroke-width="1.25" stroke-linecap="round"/></svg>
<div class="t" style="left:833.62px;top:271.93px;font:400 9.5px/12.35px 'Liberation Sans', sans-serif;color:#333333;transform:scaleX(0.9250);transform-origin:right;">1.788,00</div>
<div class="t" style="left:910.40px;top:272.69px;font:400 9.5px/12.35px 'Liberation Mono', monospace;color:#333333;transform:scaleX(0.8595);transform-origin:right;">%</div>
<div class="t" style="left:892.71px;top:271.93px;font:400 9.5px/12.35px 'Liberation Sans', sans-serif;color:#333333;transform:scaleX(0.9250);transform-origin:right;">0,00</div>
<svg class="r" style="left:922.70px;top:273.60px" width="12" height="11" viewBox="0 0 12 11"><circle cx="3.9" cy="3.7" r="2.75" fill="none" stroke="#7e7e7e" stroke-width="1.15"/><line x1="5.9" y1="5.8" x2="9.1" y2="8.6" stroke="#7e7e7e" stroke-width="1.25" stroke-linecap="round"/></svg>
<div class="t" style="left:982.11px;top:271.93px;font:400 9.5px/12.35px 'Liberation Sans', sans-serif;color:#333333;transform:scaleX(0.9250);transform-origin:right;">0,00</div>
<div class="t" style="left:1039.40px;top:272.69px;font:400 9.5px/12.35px 'Liberation Mono', monospace;color:#333333;transform:scaleX(0.8595);transform-origin:right;">%</div>
<div class="t" style="left:1021.71px;top:271.93px;font:400 9.5px/12.35px 'Liberation Sans', sans-serif;color:#333333;transform:scaleX(0.9250);transform-origin:right;">0,00</div>
<svg class="r" style="left:1051.70px;top:273.60px" width="12" height="11" viewBox="0 0 12 11"><circle cx="3.9" cy="3.7" r="2.75" fill="none" stroke="#7e7e7e" stroke-width="1.15"/><line x1="5.9" y1="5.8" x2="9.1" y2="8.6" stroke="#7e7e7e" stroke-width="1.25" stroke-linecap="round"/></svg>
<div class="t" style="left:1111.11px;top:271.93px;font:400 9.5px/12.35px 'Liberation Sans', sans-serif;color:#333333;transform:scaleX(0.9250);transform-origin:right;">0,00</div>
<div class="t" style="left:1168.40px;top:272.69px;font:400 9.5px/12.35px 'Liberation Mono', monospace;color:#333333;transform:scaleX(0.8595);transform-origin:right;">%</div>
<div class="t" style="left:1150.71px;top:271.93px;font:400 9.5px/12.35px 'Liberation Sans', sans-serif;color:#333333;transform:scaleX(0.9250);transform-origin:right;">0,00</div>
<svg class="r" style="left:1181.10px;top:273.60px" width="12" height="11" viewBox="0 0 12 11"><circle cx="3.9" cy="3.7" r="2.75" fill="none" stroke="#7e7e7e" stroke-width="1.15"/><line x1="5.9" y1="5.8" x2="9.1" y2="8.6" stroke="#7e7e7e" stroke-width="1.25" stroke-linecap="round"/></svg>
<div class="t" style="left:10.90px;top:288.43px;font:400 9.0px/11.70px 'Liberation Sans', sans-serif;color:#333333;transform:scaleX(0.9150);transform-origin:left;">.. Outras Receitas Operacionais</div>
<svg class="r" style="left:276.70px;top:289.60px" width="12" height="11" viewBox="0 0 12 11"><circle cx="3.9" cy="3.7" r="2.75" fill="none" stroke="#7e7e7e" stroke-width="1.15"/><line x1="5.9" y1="5.8" x2="9.1" y2="8.6" stroke="#7e7e7e" stroke-width="1.25" stroke-linecap="round"/></svg>
<div class="t" style="left:307.05px;top:287.93px;font:400 9.5px/12.35px 'Liberation Sans', sans-serif;color:#333333;transform:scaleX(0.9250);transform-origin:right;">539.406,48</div>
<div class="t" style="left:393.40px;top:288.69px;font:400 9.5px/12.35px 'Liberation Mono', monospace;color:#333333;transform:scaleX(0.8595);transform-origin:right;">%</div>
<div class="t" style="left:375.71px;top:287.93px;font:400 9.5px/12.35px 'Liberation Sans', sans-serif;color:#333333;transform:scaleX(0.9250);transform-origin:right;">1,21</div>
<svg class="r" style="left:405.70px;top:289.60px" width="12" height="11" viewBox="0 0 12 11"><circle cx="3.9" cy="3.7" r="2.75" fill="none" stroke="#7e7e7e" stroke-width="1.15"/><line x1="5.9" y1="5.8" x2="9.1" y2="8.6" stroke="#7e7e7e" stroke-width="1.25" stroke-linecap="round"/></svg>
<div class="t" style="left:436.05px;top:287.93px;font:400 9.5px/12.35px 'Liberation Sans', sans-serif;color:#333333;transform:scaleX(0.9250);transform-origin:right;">402.429,79</div>
<div class="t" style="left:522.40px;top:288.69px;font:400 9.5px/12.35px 'Liberation Mono', monospace;color:#333333;transform:scaleX(0.8595);transform-origin:right;">%</div>
<div class="t" style="left:504.71px;top:287.93px;font:400 9.5px/12.35px 'Liberation Sans', sans-serif;color:#333333;transform:scaleX(0.9250);transform-origin:right;">0,88</div>
<svg class="r" style="left:534.70px;top:289.60px" width="12" height="11" viewBox="0 0 12 11"><circle cx="3.9" cy="3.7" r="2.75" fill="none" stroke="#7e7e7e" stroke-width="1.15"/><line x1="5.9" y1="5.8" x2="9.1" y2="8.6" stroke="#7e7e7e" stroke-width="1.25" stroke-linecap="round"/></svg>
<div class="t" style="left:565.05px;top:287.93px;font:400 9.5px/12.35px 'Liberation Sans', sans-serif;color:#333333;transform:scaleX(0.9250);transform-origin:right;">384.009,37</div>
<div class="t" style="left:651.40px;top:288.69px;font:400 9.5px/12.35px 'Liberation Mono', monospace;color:#333333;transform:scaleX(0.8595);transform-origin:right;">%</div>
<div class="t" style="left:633.71px;top:287.93px;font:400 9.5px/12.35px 'Liberation Sans', sans-serif;color:#333333;transform:scaleX(0.9250);transform-origin:right;">0,77</div>
<svg class="r" style="left:663.70px;top:289.60px" width="12" height="11" viewBox="0 0 12 11"><circle cx="3.9" cy="3.7" r="2.75" fill="none" stroke="#7e7e7e" stroke-width="1.15"/><line x1="5.9" y1="5.8" x2="9.1" y2="8.6" stroke="#7e7e7e" stroke-width="1.25" stroke-linecap="round"/></svg>
<div class="t" style="left:694.05px;top:287.93px;font:400 9.5px/12.35px 'Liberation Sans', sans-serif;color:#333333;transform:scaleX(0.9250);transform-origin:right;">630.713,33</div>
<div class="t" style="left:780.40px;top:288.69px;font:400 9.5px/12.35px 'Liberation Mono', monospace;color:#333333;transform:scaleX(0.8595);transform-origin:right;">%</div>
<div class="t" style="left:762.71px;top:287.93px;font:400 9.5px/12.35px 'Liberation Sans', sans-serif;color:#333333;transform:scaleX(0.9250);transform-origin:right;">1,37</div>
<svg class="r" style="left:792.70px;top:289.60px" width="12" height="11" viewBox="0 0 12 11"><circle cx="3.9" cy="3.7" r="2.75" fill="none" stroke="#7e7e7e" stroke-width="1.15"/><line x1="5.9" y1="5.8" x2="9.1" y2="8.6" stroke="#7e7e7e" stroke-width="1.25" stroke-linecap="round"/></svg>
<div class="t" style="left:823.05px;top:287.93px;font:400 9.5px/12.35px 'Liberation Sans', sans-serif;color:#333333;transform:scaleX(0.9250);transform-origin:right;">773.773,28</div>
<div class="t" style="left:910.40px;top:288.69px;font:400 9.5px/12.35px 'Liberation Mono', monospace;color:#333333;transform:scaleX(0.8595);transform-origin:right;">%</div>
<div class="t" style="left:892.71px;top:287.93px;font:400 9.5px/12.35px 'Liberation Sans', sans-serif;color:#333333;transform:scaleX(0.9250);transform-origin:right;">1,52</div>
<svg class="r" style="left:922.70px;top:289.60px" width="12" height="11" viewBox="0 0 12 11"><circle cx="3.9" cy="3.7" r="2.75" fill="none" stroke="#7e7e7e" stroke-width="1.15"/><line x1="5.9" y1="5.8" x2="9.1" y2="8.6" stroke="#7e7e7e" stroke-width="1.25" stroke-linecap="round"/></svg>
<div class="t" style="left:953.05px;top:287.93px;font:400 9.5px/12.35px 'Liberation Sans', sans-serif;color:#333333;transform:scaleX(0.9250);transform-origin:right;">698.831,47</div>
<div class="t" style="left:1039.40px;top:288.69px;font:400 9.5px/12.35px 'Liberation Mono', monospace;color:#333333;transform:scaleX(0.8595);transform-origin:right;">%</div>
<div class="t" style="left:1021.71px;top:287.93px;font:400 9.5px/12.35px 'Liberation Sans', sans-serif;color:#333333;transform:scaleX(0.9250);transform-origin:right;">1,44</div>
<svg class="r" style="left:1051.70px;top:289.60px" width="12" height="11" viewBox="0 0 12 11"><circle cx="3.9" cy="3.7" r="2.75" fill="none" stroke="#7e7e7e" stroke-width="1.15"/><line x1="5.9" y1="5.8" x2="9.1" y2="8.6" stroke="#7e7e7e" stroke-width="1.25" stroke-linecap="round"/></svg>
<div class="t" style="left:1082.05px;top:287.93px;font:400 9.5px/12.35px 'Liberation Sans', sans-serif;color:#333333;transform:scaleX(0.9250);transform-origin:right;">720.644,76</div>
<div class="t" style="left:1168.40px;top:288.69px;font:400 9.5px/12.35px 'Liberation Mono', monospace;color:#333333;transform:scaleX(0.8595);transform-origin:right;">%</div>
<div class="t" style="left:1150.71px;top:287.93px;font:400 9.5px/12.35px 'Liberation Sans', sans-serif;color:#333333;transform:scaleX(0.9250);transform-origin:right;">1,44</div>
<svg class="r" style="left:1181.10px;top:289.60px" width="12" height="11" viewBox="0 0 12 11"><circle cx="3.9" cy="3.7" r="2.75" fill="none" stroke="#7e7e7e" stroke-width="1.15"/><line x1="5.9" y1="5.8" x2="9.1" y2="8.6" stroke="#7e7e7e" stroke-width="1.25" stroke-linecap="round"/></svg>
<div class="t" style="left:10.90px;top:303.43px;font:400 9.0px/11.70px 'Liberation Sans', sans-serif;color:#333333;transform:scaleX(0.9150);transform-origin:left;">.. Outras Receitas Não Operacionais</div>
<svg class="r" style="left:276.70px;top:304.60px" width="12" height="11" viewBox="0 0 12 11"><circle cx="3.9" cy="3.7" r="2.75" fill="none" stroke="#7e7e7e" stroke-width="1.15"/><line x1="5.9" y1="5.8" x2="9.1" y2="8.6" stroke="#7e7e7e" stroke-width="1.25" stroke-linecap="round"/></svg>
<div class="t" style="left:313.04px;top:302.93px;font:400 9.5px/12.35px 'Liberation Sans', sans-serif;color:#333333;transform:scaleX(0.9250);transform-origin:right;">11.225,52</div>
<div class="t" style="left:393.40px;top:303.69px;font:400 9.5px/12.35px 'Liberation Mono', monospace;color:#333333;transform:scaleX(0.8595);transform-origin:right;">%</div>
<div class="t" style="left:375.71px;top:302.93px;font:400 9.5px/12.35px 'Liberation Sans', sans-serif;color:#333333;transform:scaleX(0.9250);transform-origin:right;">0,03</div>
<svg class="r" style="left:405.70px;top:304.60px" width="12" height="11" viewBox="0 0 12 11"><circle cx="3.9" cy="3.7" r="2.75" fill="none" stroke="#7e7e7e" stroke-width="1.15"/><line x1="5.9" y1="5.8" x2="9.1" y2="8.6" stroke="#7e7e7e" stroke-width="1.25" stroke-linecap="round"/></svg>
<div class="t" style="left:441.34px;top:302.93px;font:400 9.5px/12.35px 'Liberation Sans', sans-serif;color:#333333;transform:scaleX(0.9250);transform-origin:right;">12.261,82</div>
<div class="t" style="left:522.40px;top:303.69px;font:400 9.5px/12.35px 'Liberation Mono', monospace;color:#333333;transform:scaleX(0.8595);transform-origin:right;">%</div>
<div class="t" style="left:504.71px;top:302.93px;font:400 9.5px/12.35px 'Liberation Sans', sans-serif;color:#333333;transform:scaleX(0.9250);transform-origin:right;">0,03</div>
<svg class="r" style="left:534.70px;top:304.60px" width="12" height="11" viewBox="0 0 12 11"><circle cx="3.9" cy="3.7" r="2.75" fill="none" stroke="#7e7e7e" stroke-width="1.15"/><line x1="5.9" y1="5.8" x2="9.1" y2="8.6" stroke="#7e7e7e" stroke-width="1.25" stroke-linecap="round"/></svg>
<div class="t" style="left:575.62px;top:302.93px;font:400 9.5px/12.35px 'Liberation Sans', sans-serif;color:#333333;transform:scaleX(0.9250);transform-origin:right;">9.526,59</div>
<div class="t" style="left:651.40px;top:303.69px;font:400 9.5px/12.35px 'Liberation Mono', monospace;color:#333333;transform:scaleX(0.8595);transform-origin:right;">%</div>
<div class="t" style="left:633.71px;top:302.93px;font:400 9.5px/12.35px 'Liberation Sans', sans-serif;color:#333333;transform:scaleX(0.9250);transform-origin:right;">0,02</div>
<svg class="r" style="left:663.70px;top:304.60px" width="12" height="11" viewBox="0 0 12 11"><circle cx="3.9" cy="3.7" r="2.75" fill="none" stroke="#7e7e7e" stroke-width="1.15"/><line x1="5.9" y1="5.8" x2="9.1" y2="8.6" stroke="#7e7e7e" stroke-width="1.25" stroke-linecap="round"/></svg>
<div class="t" style="left:700.04px;top:302.93px;font:400 9.5px/12.35px 'Liberation Sans', sans-serif;color:#333333;transform:scaleX(0.9250);transform-origin:right;">11.587,27</div>
<div class="t" style="left:780.40px;top:303.69px;font:400 9.5px/12.35px 'Liberation Mono', monospace;color:#333333;transform:scaleX(0.8595);transform-origin:right;">%</div>
<div class="t" style="left:762.71px;top:302.93px;font:400 9.5px/12.35px 'Liberation Sans', sans-serif;color:#333333;transform:scaleX(0.9250);transform-origin:right;">0,03</div>
<svg class="r" style="left:792.70px;top:304.60px" width="12" height="11" viewBox="0 0 12 11"><circle cx="3.9" cy="3.7" r="2.75" fill="none" stroke="#7e7e7e" stroke-width="1.15"/><line x1="5.9" y1="5.8" x2="9.1" y2="8.6" stroke="#7e7e7e" stroke-width="1.25" stroke-linecap="round"/></svg>
<div class="t" style="left:828.34px;top:302.93px;font:400 9.5px/12.35px 'Liberation Sans', sans-serif;color:#333333;transform:scaleX(0.9250);transform-origin:right;">10.043,30</div>
<div class="t" style="left:910.40px;top:303.69px;font:400 9.5px/12.35px 'Liberation Mono', monospace;color:#333333;transform:scaleX(0.8595);transform-origin:right;">%</div>
<div class="t" style="left:892.71px;top:302.93px;font:400 9.5px/12.35px 'Liberation Sans', sans-serif;color:#333333;transform:scaleX(0.9250);transform-origin:right;">0,02</div>
<svg class="r" style="left:922.70px;top:304.60px" width="12" height="11" viewBox="0 0 12 11"><circle cx="3.9" cy="3.7" r="2.75" fill="none" stroke="#7e7e7e" stroke-width="1.15"/><line x1="5.9" y1="5.8" x2="9.1" y2="8.6" stroke="#7e7e7e" stroke-width="1.25" stroke-linecap="round"/></svg>
<div class="t" style="left:963.62px;top:302.93px;font:400 9.5px/12.35px 'Liberation Sans', sans-serif;color:#333333;transform:scaleX(0.9250);transform-origin:right;">7.584,94</div>
<div class="t" style="left:1039.40px;top:303.69px;font:400 9.5px/12.35px 'Liberation Mono', monospace;color:#333333;transform:scaleX(0.8595);transform-origin:right;">%</div>
<div class="t" style="left:1021.71px;top:302.93px;font:400 9.5px/12.35px 'Liberation Sans', sans-serif;color:#333333;transform:scaleX(0.9250);transform-origin:right;">0,02</div>
<svg class="r" style="left:1051.70px;top:304.60px" width="12" height="11" viewBox="0 0 12 11"><circle cx="3.9" cy="3.7" r="2.75" fill="none" stroke="#7e7e7e" stroke-width="1.15"/><line x1="5.9" y1="5.8" x2="9.1" y2="8.6" stroke="#7e7e7e" stroke-width="1.25" stroke-linecap="round"/></svg>
<div class="t" style="left:1088.04px;top:302.93px;font:400 9.5px/12.35px 'Liberation Sans', sans-serif;color:#333333;transform:scaleX(0.9250);transform-origin:right;">11.557,29</div>
<div class="t" style="left:1168.40px;top:303.69px;font:400 9.5px/12.35px 'Liberation Mono', monospace;color:#333333;transform:scaleX(0.8595);transform-origin:right;">%</div>
<div class="t" style="left:1150.71px;top:302.93px;font:400 9.5px/12.35px 'Liberation Sans', sans-serif;color:#333333;transform:scaleX(0.9250);transform-origin:right;">0,02</div>
<svg class="r" style="left:1181.10px;top:304.60px" width="12" height="11" viewBox="0 0 12 11"><circle cx="3.9" cy="3.7" r="2.75" fill="none" stroke="#7e7e7e" stroke-width="1.15"/><line x1="5.9" y1="5.8" x2="9.1" y2="8.6" stroke="#7e7e7e" stroke-width="1.25" stroke-linecap="round"/></svg>
<div class="t" style="left:11.40px;top:318.43px;font:400 9.0px/11.70px 'Liberation Sans', sans-serif;color:#ffffff;transform:scaleX(0.8600);transform-origin:left;-webkit-text-stroke:0.3px #fff;">DEDUÇÕES DA RECEITA BRUTA</div>
<svg class="r" style="left:276.70px;top:319.60px" width="12" height="11" viewBox="0 0 12 11"><circle cx="3.9" cy="3.7" r="2.75" fill="none" stroke="#6c7782" stroke-width="1.15"/><line x1="5.9" y1="5.8" x2="9.1" y2="8.6" stroke="#6c7782" stroke-width="1.25" stroke-linecap="round"/></svg>
<div class="t" style="left:306.01px;top:317.93px;font:400 9.5px/12.35px 'Liberation Sans', sans-serif;color:#ffffff;transform:scaleX(0.9250);transform-origin:right;-webkit-text-stroke:0.2px #fff;">(60.894,72)</div>
<div class="t" style="left:395.94px;top:317.93px;font:400 9.5px/12.35px 'Liberation Sans', sans-serif;color:#ffffff;transform:scaleX(0.9250);transform-origin:right;-webkit-text-stroke:0.2px #fff;">)</div>
<div class="t" style="left:390.47px;top:318.69px;font:400 9.5px/12.35px 'Liberation Mono', monospace;color:#ffffff;transform:scaleX(0.8595);transform-origin:right;-webkit-text-stroke:0.2px #fff;">%</div>
<div class="t" style="left:369.62px;top:317.93px;font:400 9.5px/12.35px 'Liberation Sans', sans-serif;color:#ffffff;transform:scaleX(0.9250);transform-origin:right;-webkit-text-stroke:0.2px #fff;">(0,14</div>
<svg class="r" style="left:405.70px;top:319.60px" width="12" height="11" viewBox="0 0 12 11"><circle cx="3.9" cy="3.7" r="2.75" fill="none" stroke="#6c7782" stroke-width="1.15"/><line x1="5.9" y1="5.8" x2="9.1" y2="8.6" stroke="#6c7782" stroke-width="1.25" stroke-linecap="round"/></svg>
<div class="t" style="left:435.01px;top:317.93px;font:400 9.5px/12.35px 'Liberation Sans', sans-serif;color:#ffffff;transform:scaleX(0.9250);transform-origin:right;-webkit-text-stroke:0.2px #fff;">(56.406,64)</div>
<div class="t" style="left:524.94px;top:317.93px;font:400 9.5px/12.35px 'Liberation Sans', sans-serif;color:#ffffff;transform:scaleX(0.9250);transform-origin:right;-webkit-text-stroke:0.2px #fff;">)</div>
<div class="t" style="left:519.47px;top:318.69px;font:400 9.5px/12.35px 'Liberation Mono', monospace;color:#ffffff;transform:scaleX(0.8595);transform-origin:right;-webkit-text-stroke:0.2px #fff;">%</div>
<div class="t" style="left:498.62px;top:317.93px;font:400 9.5px/12.35px 'Liberation Sans', sans-serif;color:#ffffff;transform:scaleX(0.9250);transform-origin:right;-webkit-text-stroke:0.2px #fff;">(0,12</div>
<svg class="r" style="left:534.70px;top:319.60px" width="12" height="11" viewBox="0 0 12 11"><circle cx="3.9" cy="3.7" r="2.75" fill="none" stroke="#6c7782" stroke-width="1.15"/><line x1="5.9" y1="5.8" x2="9.1" y2="8.6" stroke="#6c7782" stroke-width="1.25" stroke-linecap="round"/></svg>
<div class="t" style="left:564.01px;top:317.93px;font:400 9.5px/12.35px 'Liberation Sans', sans-serif;color:#ffffff;transform:scaleX(0.9250);transform-origin:right;-webkit-text-stroke:0.2px #fff;">(92.761,49)</div>
<div class="t" style="left:653.94px;top:317.93px;font:400 9.5px/12.35px 'Liberation Sans', sans-serif;color:#ffffff;transform:scaleX(0.9250);transform-origin:right;-webkit-text-stroke:0.2px #fff;">)</div>
<div class="t" style="left:648.47px;top:318.69px;font:400 9.5px/12.35px 'Liberation Mono', monospace;color:#ffffff;transform:scaleX(0.8595);transform-origin:right;-webkit-text-stroke:0.2px #fff;">%</div>
<div class="t" style="left:627.62px;top:317.93px;font:400 9.5px/12.35px 'Liberation Sans', sans-serif;color:#ffffff;transform:scaleX(0.9250);transform-origin:right;-webkit-text-stroke:0.2px #fff;">(0,19</div>
<svg class="r" style="left:663.70px;top:319.60px" width="12" height="11" viewBox="0 0 12 11"><circle cx="3.9" cy="3.7" r="2.75" fill="none" stroke="#6c7782" stroke-width="1.15"/><line x1="5.9" y1="5.8" x2="9.1" y2="8.6" stroke="#6c7782" stroke-width="1.25" stroke-linecap="round"/></svg>
<div class="t" style="left:693.01px;top:317.93px;font:400 9.5px/12.35px 'Liberation Sans', sans-serif;color:#ffffff;transform:scaleX(0.9250);transform-origin:right;-webkit-text-stroke:0.2px #fff;">(62.126,94)</div>
<div class="t" style="left:782.94px;top:317.93px;font:400 9.5px/12.35px 'Liberation Sans', sans-serif;color:#ffffff;transform:scaleX(0.9250);transform-origin:right;-webkit-text-stroke:0.2px #fff;">)</div>
<div class="t" style="left:777.47px;top:318.69px;font:400 9.5px/12.35px 'Liberation Mono', monospace;color:#ffffff;transform:scaleX(0.8595);transform-origin:right;-webkit-text-stroke:0.2px #fff;">%</div>
<div class="t" style="left:756.62px;top:317.93px;font:400 9.5px/12.35px 'Liberation Sans', sans-serif;color:#ffffff;transform:scaleX(0.9250);transform-origin:right;-webkit-text-stroke:0.2px #fff;">(0,14</div>
<svg class="r" style="left:792.70px;top:319.60px" width="12" height="11" viewBox="0 0 12 11"><circle cx="3.9" cy="3.7" r="2.75" fill="none" stroke="#6c7782" stroke-width="1.15"/><line x1="5.9" y1="5.8" x2="9.1" y2="8.6" stroke="#6c7782" stroke-width="1.25" stroke-linecap="round"/></svg>
<div class="t" style="left:822.01px;top:317.93px;font:400 9.5px/12.35px 'Liberation Sans', sans-serif;color:#ffffff;transform:scaleX(0.9250);transform-origin:right;-webkit-text-stroke:0.2px #fff;">(60.174,66)</div>
<div class="t" style="left:912.94px;top:317.93px;font:400 9.5px/12.35px 'Liberation Sans', sans-serif;color:#ffffff;transform:scaleX(0.9250);transform-origin:right;-webkit-text-stroke:0.2px #fff;">)</div>
<div class="t" style="left:907.47px;top:318.69px;font:400 9.5px/12.35px 'Liberation Mono', monospace;color:#ffffff;transform:scaleX(0.8595);transform-origin:right;-webkit-text-stroke:0.2px #fff;">%</div>
<div class="t" style="left:886.62px;top:317.93px;font:400 9.5px/12.35px 'Liberation Sans', sans-serif;color:#ffffff;transform:scaleX(0.9250);transform-origin:right;-webkit-text-stroke:0.2px #fff;">(0,12</div>
<svg class="r" style="left:922.70px;top:319.60px" width="12" height="11" viewBox="0 0 12 11"><circle cx="3.9" cy="3.7" r="2.75" fill="none" stroke="#6c7782" stroke-width="1.15"/><line x1="5.9" y1="5.8" x2="9.1" y2="8.6" stroke="#6c7782" stroke-width="1.25" stroke-linecap="round"/></svg>
<div class="t" style="left:952.01px;top:317.93px;font:400 9.5px/12.35px 'Liberation Sans', sans-serif;color:#ffffff;transform:scaleX(0.9250);transform-origin:right;-webkit-text-stroke:0.2px #fff;">(51.684,36)</div>
<div class="t" style="left:1041.94px;top:317.93px;font:400 9.5px/12.35px 'Liberation Sans', sans-serif;color:#ffffff;transform:scaleX(0.9250);transform-origin:right;-webkit-text-stroke:0.2px #fff;">)</div>
<div class="t" style="left:1036.47px;top:318.69px;font:400 9.5px/12.35px 'Liberation Mono', monospace;color:#ffffff;transform:scaleX(0.8595);transform-origin:right;-webkit-text-stroke:0.2px #fff;">%</div>
<div class="t" style="left:1016.32px;top:317.93px;font:400 9.5px/12.35px 'Liberation Sans', sans-serif;color:#ffffff;transform:scaleX(0.9250);transform-origin:right;-webkit-text-stroke:0.2px #fff;">(0,11</div>
<svg class="r" style="left:1051.70px;top:319.60px" width="12" height="11" viewBox="0 0 12 11"><circle cx="3.9" cy="3.7" r="2.75" fill="none" stroke="#6c7782" stroke-width="1.15"/><line x1="5.9" y1="5.8" x2="9.1" y2="8.6" stroke="#6c7782" stroke-width="1.25" stroke-linecap="round"/></svg>
<div class="t" style="left:1081.01px;top:317.93px;font:400 9.5px/12.35px 'Liberation Sans', sans-serif;color:#ffffff;transform:scaleX(0.9250);transform-origin:right;-webkit-text-stroke:0.2px #fff;">(53.597,06)</div>
<div class="t" style="left:1170.94px;top:317.93px;font:400 9.5px/12.35px 'Liberation Sans', sans-serif;color:#ffffff;transform:scaleX(0.9250);transform-origin:right;-webkit-text-stroke:0.2px #fff;">)</div>
<div class="t" style="left:1165.47px;top:318.69px;font:400 9.5px/12.35px 'Liberation Mono', monospace;color:#ffffff;transform:scaleX(0.8595);transform-origin:right;-webkit-text-stroke:0.2px #fff;">%</div>
<div class="t" style="left:1145.32px;top:317.93px;font:400 9.5px/12.35px 'Liberation Sans', sans-serif;color:#ffffff;transform:scaleX(0.9250);transform-origin:right;-webkit-text-stroke:0.2px #fff;">(0,11</div>
<svg class="r" style="left:1181.10px;top:319.60px" width="12" height="11" viewBox="0 0 12 11"><circle cx="3.9" cy="3.7" r="2.75" fill="none" stroke="#6c7782" stroke-width="1.15"/><line x1="5.9" y1="5.8" x2="9.1" y2="8.6" stroke="#6c7782" stroke-width="1.25" stroke-linecap="round"/></svg>
<div class="t" style="left:10.90px;top:333.43px;font:400 9.0px/11.70px 'Liberation Sans', sans-serif;color:#333333;transform:scaleX(0.9150);transform-origin:left;">.. (-) Vendas Canceladas</div>
<svg class="r" style="left:276.70px;top:334.60px" width="12" height="11" viewBox="0 0 12 11"><circle cx="3.9" cy="3.7" r="2.75" fill="none" stroke="#7e7e7e" stroke-width="1.15"/><line x1="5.9" y1="5.8" x2="9.1" y2="8.6" stroke="#7e7e7e" stroke-width="1.25" stroke-linecap="round"/></svg>
<div class="t" style="left:306.01px;top:332.93px;font:400 9.5px/12.35px 'Liberation Sans', sans-serif;color:#333333;transform:scaleX(0.9250);transform-origin:right;">(26.274,87)</div>
<div class="t" style="left:395.94px;top:332.93px;font:400 9.5px/12.35px 'Liberation Sans', sans-serif;color:#333333;transform:scaleX(0.9250);transform-origin:right;">)</div>
<div class="t" style="left:390.47px;top:333.69px;font:400 9.5px/12.35px 'Liberation Mono', monospace;color:#333333;transform:scaleX(0.8595);transform-origin:right;">%</div>
<div class="t" style="left:369.62px;top:332.93px;font:400 9.5px/12.35px 'Liberation Sans', sans-serif;color:#333333;transform:scaleX(0.9250);transform-origin:right;">(0,06</div>
<svg class="r" style="left:405.70px;top:334.60px" width="12" height="11" viewBox="0 0 12 11"><circle cx="3.9" cy="3.7" r="2.75" fill="none" stroke="#7e7e7e" stroke-width="1.15"/><line x1="5.9" y1="5.8" x2="9.1" y2="8.6" stroke="#7e7e7e" stroke-width="1.25" stroke-linecap="round"/></svg>
<div class="t" style="left:435.71px;top:332.93px;font:400 9.5px/12.35px 'Liberation Sans', sans-serif;color:#333333;transform:scaleX(0.9250);transform-origin:right;">(22.116,33)</div>
<div class="t" style="left:524.94px;top:332.93px;font:400 9.5px/12.35px 'Liberation Sans', sans-serif;color:#333333;transform:scaleX(0.9250);transform-origin:right;">)</div>
<div class="t" style="left:519.47px;top:333.69px;font:400 9.5px/12.35px 'Liberation Mono', monospace;color:#333333;transform:scaleX(0.8595);transform-origin:right;">%</div>
<div class="t" style="left:498.62px;top:332.93px;font:400 9.5px/12.35px 'Liberation Sans', sans-serif;color:#333333;transform:scaleX(0.9250);transform-origin:right;">(0,05</div>
<svg class="r" style="left:534.70px;top:334.60px" width="12" height="11" viewBox="0 0 12 11"><circle cx="3.9" cy="3.7" r="2.75" fill="none" stroke="#7e7e7e" stroke-width="1.15"/><line x1="5.9" y1="5.8" x2="9.1" y2="8.6" stroke="#7e7e7e" stroke-width="1.25" stroke-linecap="round"/></svg>
<div class="t" style="left:564.01px;top:332.93px;font:400 9.5px/12.35px 'Liberation Sans', sans-serif;color:#333333;transform:scaleX(0.9250);transform-origin:right;">(28.389,57)</div>
<div class="t" style="left:653.94px;top:332.93px;font:400 9.5px/12.35px 'Liberation Sans', sans-serif;color:#333333;transform:scaleX(0.9250);transform-origin:right;">)</div>
<div class="t" style="left:648.47px;top:333.69px;font:400 9.5px/12.35px 'Liberation Mono', monospace;color:#333333;transform:scaleX(0.8595);transform-origin:right;">%</div>
<div class="t" style="left:627.62px;top:332.93px;font:400 9.5px/12.35px 'Liberation Sans', sans-serif;color:#333333;transform:scaleX(0.9250);transform-origin:right;">(0,06</div>
<svg class="r" style="left:663.70px;top:334.60px" width="12" height="11" viewBox="0 0 12 11"><circle cx="3.9" cy="3.7" r="2.75" fill="none" stroke="#7e7e7e" stroke-width="1.15"/><line x1="5.9" y1="5.8" x2="9.1" y2="8.6" stroke="#7e7e7e" stroke-width="1.25" stroke-linecap="round"/></svg>
<div class="t" style="left:693.01px;top:332.93px;font:400 9.5px/12.35px 'Liberation Sans', sans-serif;color:#333333;transform:scaleX(0.9250);transform-origin:right;">(21.462,93)</div>
<div class="t" style="left:782.94px;top:332.93px;font:400 9.5px/12.35px 'Liberation Sans', sans-serif;color:#333333;transform:scaleX(0.9250);transform-origin:right;">)</div>
<div class="t" style="left:777.47px;top:333.69px;font:400 9.5px/12.35px 'Liberation Mono', monospace;color:#333333;transform:scaleX(0.8595);transform-origin:right;">%</div>
<div class="t" style="left:756.62px;top:332.93px;font:400 9.5px/12.35px 'Liberation Sans', sans-serif;color:#333333;transform:scaleX(0.9250);transform-origin:right;">(0,05</div>
<svg class="r" style="left:792.70px;top:334.60px" width="12" height="11" viewBox="0 0 12 11"><circle cx="3.9" cy="3.7" r="2.75" fill="none" stroke="#7e7e7e" stroke-width="1.15"/><line x1="5.9" y1="5.8" x2="9.1" y2="8.6" stroke="#7e7e7e" stroke-width="1.25" stroke-linecap="round"/></svg>
<div class="t" style="left:822.01px;top:332.93px;font:400 9.5px/12.35px 'Liberation Sans', sans-serif;color:#333333;transform:scaleX(0.9250);transform-origin:right;">(24.063,26)</div>
<div class="t" style="left:912.94px;top:332.93px;font:400 9.5px/12.35px 'Liberation Sans', sans-serif;color:#333333;transform:scaleX(0.9250);transform-origin:right;">)</div>
<div class="t" style="left:907.47px;top:333.69px;font:400 9.5px/12.35px 'Liberation Mono', monospace;color:#333333;transform:scaleX(0.8595);transform-origin:right;">%</div>
<div class="t" style="left:886.62px;top:332.93px;font:400 9.5px/12.35px 'Liberation Sans', sans-serif;color:#333333;transform:scaleX(0.9250);transform-origin:right;">(0,05</div>
<svg class="r" style="left:922.70px;top:334.60px" width="12" height="11" viewBox="0 0 12 11"><circle cx="3.9" cy="3.7" r="2.75" fill="none" stroke="#7e7e7e" stroke-width="1.15"/><line x1="5.9" y1="5.8" x2="9.1" y2="8.6" stroke="#7e7e7e" stroke-width="1.25" stroke-linecap="round"/></svg>
<div class="t" style="left:952.01px;top:332.93px;font:400 9.5px/12.35px 'Liberation Sans', sans-serif;color:#333333;transform:scaleX(0.9250);transform-origin:right;">(24.582,75)</div>
<div class="t" style="left:1041.94px;top:332.93px;font:400 9.5px/12.35px 'Liberation Sans', sans-serif;color:#333333;transform:scaleX(0.9250);transform-origin:right;">)</div>
<div class="t" style="left:1036.47px;top:333.69px;font:400 9.5px/12.35px 'Liberation Mono', monospace;color:#333333;transform:scaleX(0.8595);transform-origin:right;">%</div>
<div class="t" style="left:1015.62px;top:332.93px;font:400 9.5px/12.35px 'Liberation Sans', sans-serif;color:#333333;transform:scaleX(0.9250);transform-origin:right;">(0,05</div>
<svg class="r" style="left:1051.70px;top:334.60px" width="12" height="11" viewBox="0 0 12 11"><circle cx="3.9" cy="3.7" r="2.75" fill="none" stroke="#7e7e7e" stroke-width="1.15"/><line x1="5.9" y1="5.8" x2="9.1" y2="8.6" stroke="#7e7e7e" stroke-width="1.25" stroke-linecap="round"/></svg>
<div class="t" style="left:1081.01px;top:332.93px;font:400 9.5px/12.35px 'Liberation Sans', sans-serif;color:#333333;transform:scaleX(0.9250);transform-origin:right;">(28.087,01)</div>
<div class="t" style="left:1170.94px;top:332.93px;font:400 9.5px/12.35px 'Liberation Sans', sans-serif;color:#333333;transform:scaleX(0.9250);transform-origin:right;">)</div>
<div class="t" style="left:1165.47px;top:333.69px;font:400 9.5px/12.35px 'Liberation Mono', monospace;color:#333333;transform:scaleX(0.8595);transform-origin:right;">%</div>
<div class="t" style="left:1144.62px;top:332.93px;font:400 9.5px/12.35px 'Liberation Sans', sans-serif;color:#333333;transform:scaleX(0.9250);transform-origin:right;">(0,06</div>
<svg class="r" style="left:1181.10px;top:334.60px" width="12" height="11" viewBox="0 0 12 11"><circle cx="3.9" cy="3.7" r="2.75" fill="none" stroke="#7e7e7e" stroke-width="1.15"/><line x1="5.9" y1="5.8" x2="9.1" y2="8.6" stroke="#7e7e7e" stroke-width="1.25" stroke-linecap="round"/></svg>
<div class="t" style="left:10.90px;top:348.43px;font:400 9.0px/11.70px 'Liberation Sans', sans-serif;color:#333333;transform:scaleX(0.9150);transform-origin:left;">.. (-) Devoluções Mercadorias</div>
<svg class="r" style="left:276.70px;top:349.60px" width="12" height="11" viewBox="0 0 12 11"><circle cx="3.9" cy="3.7" r="2.75" fill="none" stroke="#7e7e7e" stroke-width="1.15"/><line x1="5.9" y1="5.8" x2="9.1" y2="8.6" stroke="#7e7e7e" stroke-width="1.25" stroke-linecap="round"/></svg>
<div class="t" style="left:306.01px;top:347.93px;font:400 9.5px/12.35px 'Liberation Sans', sans-serif;color:#333333;transform:scaleX(0.9250);transform-origin:right;">(34.619,85)</div>
<div class="t" style="left:395.94px;top:347.93px;font:400 9.5px/12.35px 'Liberation Sans', sans-serif;color:#333333;transform:scaleX(0.9250);transform-origin:right;">)</div>
<div class="t" style="left:390.47px;top:348.69px;font:400 9.5px/12.35px 'Liberation Mono', monospace;color:#333333;transform:scaleX(0.8595);transform-origin:right;">%</div>
<div class="t" style="left:369.62px;top:347.93px;font:400 9.5px/12.35px 'Liberation Sans', sans-serif;color:#333333;transform:scaleX(0.9250);transform-origin:right;">(0,08</div>
<svg class="r" style="left:405.70px;top:349.60px" width="12" height="11" viewBox="0 0 12 11"><circle cx="3.9" cy="3.7" r="2.75" fill="none" stroke="#7e7e7e" stroke-width="1.15"/><line x1="5.9" y1="5.8" x2="9.1" y2="8.6" stroke="#7e7e7e" stroke-width="1.25" stroke-linecap="round"/></svg>
<div class="t" style="left:435.01px;top:347.93px;font:400 9.5px/12.35px 'Liberation Sans', sans-serif;color:#333333;transform:scaleX(0.9250);transform-origin:right;">(34.290,31)</div>
<div class="t" style="left:524.94px;top:347.93px;font:400 9.5px/12.35px 'Liberation Sans', sans-serif;color:#333333;transform:scaleX(0.9250);transform-origin:right;">)</div>
<div class="t" style="left:519.47px;top:348.69px;font:400 9.5px/12.35px 'Liberation Mono', monospace;color:#333333;transform:scaleX(0.8595);transform-origin:right;">%</div>
<div class="t" style="left:498.62px;top:347.93px;font:400 9.5px/12.35px 'Liberation Sans', sans-serif;color:#333333;transform:scaleX(0.9250);transform-origin:right;">(0,07</div>
<svg class="r" style="left:534.70px;top:349.60px" width="12" height="11" viewBox="0 0 12 11"><circle cx="3.9" cy="3.7" r="2.75" fill="none" stroke="#7e7e7e" stroke-width="1.15"/><line x1="5.9" y1="5.8" x2="9.1" y2="8.6" stroke="#7e7e7e" stroke-width="1.25" stroke-linecap="round"/></svg>
<div class="t" style="left:564.01px;top:347.93px;font:400 9.5px/12.35px 'Liberation Sans', sans-serif;color:#333333;transform:scaleX(0.9250);transform-origin:right;">(64.371,92)</div>
<div class="t" style="left:653.94px;top:347.93px;font:400 9.5px/12.35px 'Liberation Sans', sans-serif;color:#333333;transform:scaleX(0.9250);transform-origin:right;">)</div>
<div class="t" style="left:648.47px;top:348.69px;font:400 9.5px/12.35px 'Liberation Mono', monospace;color:#333333;transform:scaleX(0.8595);transform-origin:right;">%</div>
<div class="t" style="left:627.62px;top:347.93px;font:400 9.5px/12.35px 'Liberation Sans', sans-serif;color:#333333;transform:scaleX(0.9250);transform-origin:right;">(0,13</div>
<svg class="r" style="left:663.70px;top:349.60px" width="12" height="11" viewBox="0 0 12 11"><circle cx="3.9" cy="3.7" r="2.75" fill="none" stroke="#7e7e7e" stroke-width="1.15"/><line x1="5.9" y1="5.8" x2="9.1" y2="8.6" stroke="#7e7e7e" stroke-width="1.25" stroke-linecap="round"/></svg>
<div class="t" style="left:693.01px;top:347.93px;font:400 9.5px/12.35px 'Liberation Sans', sans-serif;color:#333333;transform:scaleX(0.9250);transform-origin:right;">(40.664,01)</div>
<div class="t" style="left:782.94px;top:347.93px;font:400 9.5px/12.35px 'Liberation Sans', sans-serif;color:#333333;transform:scaleX(0.9250);transform-origin:right;">)</div>
<div class="t" style="left:777.47px;top:348.69px;font:400 9.5px/12.35px 'Liberation Mono', monospace;color:#333333;transform:scaleX(0.8595);transform-origin:right;">%</div>
<div class="t" style="left:756.62px;top:347.93px;font:400 9.5px/12.35px 'Liberation Sans', sans-serif;color:#333333;transform:scaleX(0.9250);transform-origin:right;">(0,09</div>
<svg class="r" style="left:792.70px;top:349.60px" width="12" height="11" viewBox="0 0 12 11"><circle cx="3.9" cy="3.7" r="2.75" fill="none" stroke="#7e7e7e" stroke-width="1.15"/><line x1="5.9" y1="5.8" x2="9.1" y2="8.6" stroke="#7e7e7e" stroke-width="1.25" stroke-linecap="round"/></svg>
<div class="t" style="left:823.42px;top:347.93px;font:400 9.5px/12.35px 'Liberation Sans', sans-serif;color:#333333;transform:scaleX(0.9250);transform-origin:right;">(36.111,40)</div>
<div class="t" style="left:912.94px;top:347.93px;font:400 9.5px/12.35px 'Liberation Sans', sans-serif;color:#333333;transform:scaleX(0.9250);transform-origin:right;">)</div>
<div class="t" style="left:907.47px;top:348.69px;font:400 9.5px/12.35px 'Liberation Mono', monospace;color:#333333;transform:scaleX(0.8595);transform-origin:right;">%</div>
<div class="t" style="left:886.62px;top:347.93px;font:400 9.5px/12.35px 'Liberation Sans', sans-serif;color:#333333;transform:scaleX(0.9250);transform-origin:right;">(0,07</div>
<svg class="r" style="left:922.70px;top:349.60px" width="12" height="11" viewBox="0 0 12 11"><circle cx="3.9" cy="3.7" r="2.75" fill="none" stroke="#7e7e7e" stroke-width="1.15"/><line x1="5.9" y1="5.8" x2="9.1" y2="8.6" stroke="#7e7e7e" stroke-width="1.25" stroke-linecap="round"/></svg>
<div class="t" style="left:952.01px;top:347.93px;font:400 9.5px/12.35px 'Liberation Sans', sans-serif;color:#333333;transform:scaleX(0.9250);transform-origin:right;">(27.101,61)</div>
<div class="t" style="left:1041.94px;top:347.93px;font:400 9.5px/12.35px 'Liberation Sans', sans-serif;color:#333333;transform:scaleX(0.9250);transform-origin:right;">)</div>
<div class="t" style="left:1036.47px;top:348.69px;font:400 9.5px/12.35px 'Liberation Mono', monospace;color:#333333;transform:scaleX(0.8595);transform-origin:right;">%</div>
<div class="t" style="left:1015.62px;top:347.93px;font:400 9.5px/12.35px 'Liberation Sans', sans-serif;color:#333333;transform:scaleX(0.9250);transform-origin:right;">(0,06</div>
<svg class="r" style="left:1051.70px;top:349.60px" width="12" height="11" viewBox="0 0 12 11"><circle cx="3.9" cy="3.7" r="2.75" fill="none" stroke="#7e7e7e" stroke-width="1.15"/><line x1="5.9" y1="5.8" x2="9.1" y2="8.6" stroke="#7e7e7e" stroke-width="1.25" stroke-linecap="round"/></svg>
<div class="t" style="left:1081.01px;top:347.93px;font:400 9.5px/12.35px 'Liberation Sans', sans-serif;color:#333333;transform:scaleX(0.9250);transform-origin:right;">(25.510,05)</div>
<div class="t" style="left:1170.94px;top:347.93px;font:400 9.5px/12.35px 'Liberation Sans', sans-serif;color:#333333;transform:scaleX(0.9250);transform-origin:right;">)</div>
<div class="t" style="left:1165.47px;top:348.69px;font:400 9.5px/12.35px 'Liberation Mono', monospace;color:#333333;transform:scaleX(0.8595);transform-origin:right;">%</div>
<div class="t" style="left:1144.62px;top:347.93px;font:400 9.5px/12.35px 'Liberation Sans', sans-serif;color:#333333;transform:scaleX(0.9250);transform-origin:right;">(0,05</div>
<svg class="r" style="left:1181.10px;top:349.60px" width="12" height="11" viewBox="0 0 12 11"><circle cx="3.9" cy="3.7" r="2.75" fill="none" stroke="#7e7e7e" stroke-width="1.15"/><line x1="5.9" y1="5.8" x2="9.1" y2="8.6" stroke="#7e7e7e" stroke-width="1.25" stroke-linecap="round"/></svg>
<div class="t" style="left:10.90px;top:363.43px;font:400 9.0px/11.70px 'Liberation Sans', sans-serif;color:#333333;transform:scaleX(0.9150);transform-origin:left;">.. (-) Descontos</div>
<svg class="r" style="left:276.70px;top:364.60px" width="12" height="11" viewBox="0 0 12 11"><circle cx="3.9" cy="3.7" r="2.75" fill="none" stroke="#7e7e7e" stroke-width="1.15"/><line x1="5.9" y1="5.8" x2="9.1" y2="8.6" stroke="#7e7e7e" stroke-width="1.25" stroke-linecap="round"/></svg>
<div class="t" style="left:336.11px;top:362.93px;font:400 9.5px/12.35px 'Liberation Sans', sans-serif;color:#333333;transform:scaleX(0.9250);transform-origin:right;">0,00</div>
<div class="t" style="left:393.40px;top:363.69px;font:400 9.5px/12.35px 'Liberation Mono', monospace;color:#333333;transform:scaleX(0.8595);transform-origin:right;">%</div>
<div class="t" style="left:375.71px;top:362.93px;font:400 9.5px/12.35px 'Liberation Sans', sans-serif;color:#333333;transform:scaleX(0.9250);transform-origin:right;">0,00</div>
<svg class="r" style="left:405.70px;top:364.60px" width="12" height="11" viewBox="0 0 12 11"><circle cx="3.9" cy="3.7" r="2.75" fill="none" stroke="#7e7e7e" stroke-width="1.15"/><line x1="5.9" y1="5.8" x2="9.1" y2="8.6" stroke="#7e7e7e" stroke-width="1.25" stroke-linecap="round"/></svg>
<div class="t" style="left:465.11px;top:362.93px;font:400 9.5px/12.35px 'Liberation Sans', sans-serif;color:#333333;transform:scaleX(0.9250);transform-origin:right;">0,00</div>
<div class="t" style="left:522.40px;top:363.69px;font:400 9.5px/12.35px 'Liberation Mono', monospace;color:#333333;transform:scaleX(0.8595);transform-origin:right;">%</div>
<div class="t" style="left:504.71px;top:362.93px;font:400 9.5px/12.35px 'Liberation Sans', sans-serif;color:#333333;transform:scaleX(0.9250);transform-origin:right;">0,00</div>
<svg class="r" style="left:534.70px;top:364.60px" width="12" height="11" viewBox="0 0 12 11"><circle cx="3.9" cy="3.7" r="2.75" fill="none" stroke="#7e7e7e" stroke-width="1.15"/><line x1="5.9" y1="5.8" x2="9.1" y2="8.6" stroke="#7e7e7e" stroke-width="1.25" stroke-linecap="round"/></svg>
<div class="t" style="left:594.11px;top:362.93px;font:400 9.5px/12.35px 'Liberation Sans', sans-serif;color:#333333;transform:scaleX(0.9250);transform-origin:right;">0,00</div>
<div class="t" style="left:651.40px;top:363.69px;font:400 9.5px/12.35px 'Liberation Mono', monospace;color:#333333;transform:scaleX(0.8595);transform-origin:right;">%</div>
<div class="t" style="left:633.71px;top:362.93px;font:400 9.5px/12.35px 'Liberation Sans', sans-serif;color:#333333;transform:scaleX(0.9250);transform-origin:right;">0,00</div>
<svg class="r" style="left:663.70px;top:364.60px" width="12" height="11" viewBox="0 0 12 11"><circle cx="3.9" cy="3.7" r="2.75" fill="none" stroke="#7e7e7e" stroke-width="1.15"/><line x1="5.9" y1="5.8" x2="9.1" y2="8.6" stroke="#7e7e7e" stroke-width="1.25" stroke-linecap="round"/></svg>
<div class="t" style="left:723.11px;top:362.93px;font:400 9.5px/12.35px 'Liberation Sans', sans-serif;color:#333333;transform:scaleX(0.9250);transform-origin:right;">0,00</div>
<div class="t" style="left:780.40px;top:363.69px;font:400 9.5px/12.35px 'Liberation Mono', monospace;color:#333333;transform:scaleX(0.8595);transform-origin:right;">%</div>
<div class="t" style="left:762.71px;top:362.93px;font:400 9.5px/12.35px 'Liberation Sans', sans-serif;color:#333333;transform:scaleX(0.9250);transform-origin:right;">0,00</div>
<svg class="r" style="left:792.70px;top:364.60px" width="12" height="11" viewBox="0 0 12 11"><circle cx="3.9" cy="3.7" r="2.75" fill="none" stroke="#7e7e7e" stroke-width="1.15"/><line x1="5.9" y1="5.8" x2="9.1" y2="8.6" stroke="#7e7e7e" stroke-width="1.25" stroke-linecap="round"/></svg>
<div class="t" style="left:852.11px;top:362.93px;font:400 9.5px/12.35px 'Liberation Sans', sans-serif;color:#333333;transform:scaleX(0.9250);transform-origin:right;">0,00</div>
<div class="t" style="left:910.40px;top:363.69px;font:400 9.5px/12.35px 'Liberation Mono', monospace;color:#333333;transform:scaleX(0.8595);transform-origin:right;">%</div>
<div class="t" style="left:892.71px;top:362.93px;font:400 9.5px/12.35px 'Liberation Sans', sans-serif;color:#333333;transform:scaleX(0.9250);transform-origin:right;">0,00</div>
<svg class="r" style="left:922.70px;top:364.60px" width="12" height="11" viewBox="0 0 12 11"><circle cx="3.9" cy="3.7" r="2.75" fill="none" stroke="#7e7e7e" stroke-width="1.15"/><line x1="5.9" y1="5.8" x2="9.1" y2="8.6" stroke="#7e7e7e" stroke-width="1.25" stroke-linecap="round"/></svg>
<div class="t" style="left:982.11px;top:362.93px;font:400 9.5px/12.35px 'Liberation Sans', sans-serif;color:#333333;transform:scaleX(0.9250);transform-origin:right;">0,00</div>
<div class="t" style="left:1039.40px;top:363.69px;font:400 9.5px/12.35px 'Liberation Mono', monospace;color:#333333;transform:scaleX(0.8595);transform-origin:right;">%</div>
<div class="t" style="left:1021.71px;top:362.93px;font:400 9.5px/12.35px 'Liberation Sans', sans-serif;color:#333333;transform:scaleX(0.9250);transform-origin:right;">0,00</div>
<svg class="r" style="left:1051.70px;top:364.60px" width="12" height="11" viewBox="0 0 12 11"><circle cx="3.9" cy="3.7" r="2.75" fill="none" stroke="#7e7e7e" stroke-width="1.15"/><line x1="5.9" y1="5.8" x2="9.1" y2="8.6" stroke="#7e7e7e" stroke-width="1.25" stroke-linecap="round"/></svg>
<div class="t" style="left:1111.11px;top:362.93px;font:400 9.5px/12.35px 'Liberation Sans', sans-serif;color:#333333;transform:scaleX(0.9250);transform-origin:right;">0,00</div>
<div class="t" style="left:1168.40px;top:363.69px;font:400 9.5px/12.35px 'Liberation Mono', monospace;color:#333333;transform:scaleX(0.8595);transform-origin:right;">%</div>
<div class="t" style="left:1150.71px;top:362.93px;font:400 9.5px/12.35px 'Liberation Sans', sans-serif;color:#333333;transform:scaleX(0.9250);transform-origin:right;">0,00</div>
<svg class="r" style="left:1181.10px;top:364.60px" width="12" height="11" viewBox="0 0 12 11"><circle cx="3.9" cy="3.7" r="2.75" fill="none" stroke="#7e7e7e" stroke-width="1.15"/><line x1="5.9" y1="5.8" x2="9.1" y2="8.6" stroke="#7e7e7e" stroke-width="1.25" stroke-linecap="round"/></svg>
<div class="t" style="left:11.40px;top:378.43px;font:400 9.0px/11.70px 'Liberation Sans', sans-serif;color:#ffffff;transform:scaleX(0.8600);transform-origin:left;-webkit-text-stroke:0.3px #fff;">(-) IMPOSTO INCIDENTES SOBRE AS VENDAS</div>
<svg class="r" style="left:276.70px;top:379.60px" width="12" height="11" viewBox="0 0 12 11"><circle cx="3.9" cy="3.7" r="2.75" fill="none" stroke="#6c7782" stroke-width="1.15"/><line x1="5.9" y1="5.8" x2="9.1" y2="8.6" stroke="#6c7782" stroke-width="1.25" stroke-linecap="round"/></svg>
<div class="t" style="left:292.80px;top:377.93px;font:400 9.5px/12.35px 'Liberation Sans', sans-serif;color:#ffffff;transform:scaleX(0.9250);transform-origin:right;-webkit-text-stroke:0.2px #fff;">(2.783.331,70)</div>
<div class="t" style="left:395.94px;top:377.93px;font:400 9.5px/12.35px 'Liberation Sans', sans-serif;color:#ffffff;transform:scaleX(0.9250);transform-origin:right;-webkit-text-stroke:0.2px #fff;">)</div>
<div class="t" style="left:390.47px;top:378.69px;font:400 9.5px/12.35px 'Liberation Mono', monospace;color:#ffffff;transform:scaleX(0.8595);transform-origin:right;-webkit-text-stroke:0.2px #fff;">%</div>
<div class="t" style="left:369.62px;top:377.93px;font:400 9.5px/12.35px 'Liberation Sans', sans-serif;color:#ffffff;transform:scaleX(0.9250);transform-origin:right;-webkit-text-stroke:0.2px #fff;">(6,25</div>
<svg class="r" style="left:405.70px;top:379.60px" width="12" height="11" viewBox="0 0 12 11"><circle cx="3.9" cy="3.7" r="2.75" fill="none" stroke="#6c7782" stroke-width="1.15"/><line x1="5.9" y1="5.8" x2="9.1" y2="8.6" stroke="#6c7782" stroke-width="1.25" stroke-linecap="round"/></svg>
<div class="t" style="left:421.80px;top:377.93px;font:400 9.5px/12.35px 'Liberation Sans', sans-serif;color:#ffffff;transform:scaleX(0.9250);transform-origin:right;-webkit-text-stroke:0.2px #fff;">(2.833.872,62)</div>
<div class="t" style="left:524.94px;top:377.93px;font:400 9.5px/12.35px 'Liberation Sans', sans-serif;color:#ffffff;transform:scaleX(0.9250);transform-origin:right;-webkit-text-stroke:0.2px #fff;">)</div>
<div class="t" style="left:519.47px;top:378.69px;font:400 9.5px/12.35px 'Liberation Mono', monospace;color:#ffffff;transform:scaleX(0.8595);transform-origin:right;-webkit-text-stroke:0.2px #fff;">%</div>
<div class="t" style="left:498.62px;top:377.93px;font:400 9.5px/12.35px 'Liberation Sans', sans-serif;color:#ffffff;transform:scaleX(0.9250);transform-origin:right;-webkit-text-stroke:0.2px #fff;">(6,19</div>
<svg class="r" style="left:534.70px;top:379.60px" width="12" height="11" viewBox="0 0 12 11"><circle cx="3.9" cy="3.7" r="2.75" fill="none" stroke="#6c7782" stroke-width="1.15"/><line x1="5.9" y1="5.8" x2="9.1" y2="8.6" stroke="#6c7782" stroke-width="1.25" stroke-linecap="round"/></svg>
<div class="t" style="left:550.80px;top:377.93px;font:400 9.5px/12.35px 'Liberation Sans', sans-serif;color:#ffffff;transform:scaleX(0.9250);transform-origin:right;-webkit-text-stroke:0.2px #fff;">(3.248.628,37)</div>
<div class="t" style="left:653.94px;top:377.93px;font:400 9.5px/12.35px 'Liberation Sans', sans-serif;color:#ffffff;transform:scaleX(0.9250);transform-origin:right;-webkit-text-stroke:0.2px #fff;">)</div>
<div class="t" style="left:648.47px;top:378.69px;font:400 9.5px/12.35px 'Liberation Mono', monospace;color:#ffffff;transform:scaleX(0.8595);transform-origin:right;-webkit-text-stroke:0.2px #fff;">%</div>
<div class="t" style="left:627.62px;top:377.93px;font:400 9.5px/12.35px 'Liberation Sans', sans-serif;color:#ffffff;transform:scaleX(0.9250);transform-origin:right;-webkit-text-stroke:0.2px #fff;">(6,52</div>
<svg class="r" style="left:663.70px;top:379.60px" width="12" height="11" viewBox="0 0 12 11"><circle cx="3.9" cy="3.7" r="2.75" fill="none" stroke="#6c7782" stroke-width="1.15"/><line x1="5.9" y1="5.8" x2="9.1" y2="8.6" stroke="#6c7782" stroke-width="1.25" stroke-linecap="round"/></svg>
<div class="t" style="left:679.80px;top:377.93px;font:400 9.5px/12.35px 'Liberation Sans', sans-serif;color:#ffffff;transform:scaleX(0.9250);transform-origin:right;-webkit-text-stroke:0.2px #fff;">(2.774.324,37)</div>
<div class="t" style="left:782.94px;top:377.93px;font:400 9.5px/12.35px 'Liberation Sans', sans-serif;color:#ffffff;transform:scaleX(0.9250);transform-origin:right;-webkit-text-stroke:0.2px #fff;">)</div>
<div class="t" style="left:777.47px;top:378.69px;font:400 9.5px/12.35px 'Liberation Mono', monospace;color:#ffffff;transform:scaleX(0.8595);transform-origin:right;-webkit-text-stroke:0.2px #fff;">%</div>
<div class="t" style="left:756.62px;top:377.93px;font:400 9.5px/12.35px 'Liberation Sans', sans-serif;color:#ffffff;transform:scaleX(0.9250);transform-origin:right;-webkit-text-stroke:0.2px #fff;">(6,03</div>
<svg class="r" style="left:792.70px;top:379.60px" width="12" height="11" viewBox="0 0 12 11"><circle cx="3.9" cy="3.7" r="2.75" fill="none" stroke="#6c7782" stroke-width="1.15"/><line x1="5.9" y1="5.8" x2="9.1" y2="8.6" stroke="#6c7782" stroke-width="1.25" stroke-linecap="round"/></svg>
<div class="t" style="left:808.80px;top:377.93px;font:400 9.5px/12.35px 'Liberation Sans', sans-serif;color:#ffffff;transform:scaleX(0.9250);transform-origin:right;-webkit-text-stroke:0.2px #fff;">(3.157.242,82)</div>
<div class="t" style="left:912.94px;top:377.93px;font:400 9.5px/12.35px 'Liberation Sans', sans-serif;color:#ffffff;transform:scaleX(0.9250);transform-origin:right;-webkit-text-stroke:0.2px #fff;">)</div>
<div class="t" style="left:907.47px;top:378.69px;font:400 9.5px/12.35px 'Liberation Mono', monospace;color:#ffffff;transform:scaleX(0.8595);transform-origin:right;-webkit-text-stroke:0.2px #fff;">%</div>
<div class="t" style="left:886.62px;top:377.93px;font:400 9.5px/12.35px 'Liberation Sans', sans-serif;color:#ffffff;transform:scaleX(0.9250);transform-origin:right;-webkit-text-stroke:0.2px #fff;">(6,19</div>
<svg class="r" style="left:922.70px;top:379.60px" width="12" height="11" viewBox="0 0 12 11"><circle cx="3.9" cy="3.7" r="2.75" fill="none" stroke="#6c7782" stroke-width="1.15"/><line x1="5.9" y1="5.8" x2="9.1" y2="8.6" stroke="#6c7782" stroke-width="1.25" stroke-linecap="round"/></svg>
<div class="t" style="left:938.80px;top:377.93px;font:400 9.5px/12.35px 'Liberation Sans', sans-serif;color:#ffffff;transform:scaleX(0.9250);transform-origin:right;-webkit-text-stroke:0.2px #fff;">(3.132.789,17)</div>
<div class="t" style="left:1041.94px;top:377.93px;font:400 9.5px/12.35px 'Liberation Sans', sans-serif;color:#ffffff;transform:scaleX(0.9250);transform-origin:right;-webkit-text-stroke:0.2px #fff;">)</div>
<div class="t" style="left:1036.47px;top:378.69px;font:400 9.5px/12.35px 'Liberation Mono', monospace;color:#ffffff;transform:scaleX(0.8595);transform-origin:right;-webkit-text-stroke:0.2px #fff;">%</div>
<div class="t" style="left:1015.62px;top:377.93px;font:400 9.5px/12.35px 'Liberation Sans', sans-serif;color:#ffffff;transform:scaleX(0.9250);transform-origin:right;-webkit-text-stroke:0.2px #fff;">(6,44</div>
<svg class="r" style="left:1051.70px;top:379.60px" width="12" height="11" viewBox="0 0 12 11"><circle cx="3.9" cy="3.7" r="2.75" fill="none" stroke="#6c7782" stroke-width="1.15"/><line x1="5.9" y1="5.8" x2="9.1" y2="8.6" stroke="#6c7782" stroke-width="1.25" stroke-linecap="round"/></svg>
<div class="t" style="left:1067.80px;top:377.93px;font:400 9.5px/12.35px 'Liberation Sans', sans-serif;color:#ffffff;transform:scaleX(0.9250);transform-origin:right;-webkit-text-stroke:0.2px #fff;">(3.131.179,92)</div>
<div class="t" style="left:1170.94px;top:377.93px;font:400 9.5px/12.35px 'Liberation Sans', sans-serif;color:#ffffff;transform:scaleX(0.9250);transform-origin:right;-webkit-text-stroke:0.2px #fff;">)</div>
<div class="t" style="left:1165.47px;top:378.69px;font:400 9.5px/12.35px 'Liberation Mono', monospace;color:#ffffff;transform:scaleX(0.8595);transform-origin:right;-webkit-text-stroke:0.2px #fff;">%</div>
<div class="t" style="left:1144.62px;top:377.93px;font:400 9.5px/12.35px 'Liberation Sans', sans-serif;color:#ffffff;transform:scaleX(0.9250);transform-origin:right;-webkit-text-stroke:0.2px #fff;">(6,24</div>
<svg class="r" style="left:1181.10px;top:379.60px" width="12" height="11" viewBox="0 0 12 11"><circle cx="3.9" cy="3.7" r="2.75" fill="none" stroke="#6c7782" stroke-width="1.15"/><line x1="5.9" y1="5.8" x2="9.1" y2="8.6" stroke="#6c7782" stroke-width="1.25" stroke-linecap="round"/></svg>
<div class="t" style="left:10.90px;top:393.43px;font:400 9.0px/11.70px 'Liberation Sans', sans-serif;color:#333333;transform:scaleX(0.9150);transform-origin:left;">.. (-) Icms</div>
<svg class="r" style="left:276.70px;top:394.60px" width="12" height="11" viewBox="0 0 12 11"><circle cx="3.9" cy="3.7" r="2.75" fill="none" stroke="#7e7e7e" stroke-width="1.15"/><line x1="5.9" y1="5.8" x2="9.1" y2="8.6" stroke="#7e7e7e" stroke-width="1.25" stroke-linecap="round"/></svg>
<div class="t" style="left:292.80px;top:392.93px;font:400 9.5px/12.35px 'Liberation Sans', sans-serif;color:#333333;transform:scaleX(0.9250);transform-origin:right;">(1.317.298,45)</div>
<div class="t" style="left:395.94px;top:392.93px;font:400 9.5px/12.35px 'Liberation Sans', sans-serif;color:#333333;transform:scaleX(0.9250);transform-origin:right;">)</div>
<div class="t" style="left:390.47px;top:393.69px;font:400 9.5px/12.35px 'Liberation Mono', monospace;color:#333333;transform:scaleX(0.8595);transform-origin:right;">%</div>
<div class="t" style="left:369.62px;top:392.93px;font:400 9.5px/12.35px 'Liberation Sans', sans-serif;color:#333333;transform:scaleX(0.9250);transform-origin:right;">(2,96</div>
<svg class="r" style="left:405.70px;top:394.60px" width="12" height="11" viewBox="0 0 12 11"><circle cx="3.9" cy="3.7" r="2.75" fill="none" stroke="#7e7e7e" stroke-width="1.15"/><line x1="5.9" y1="5.8" x2="9.1" y2="8.6" stroke="#7e7e7e" stroke-width="1.25" stroke-linecap="round"/></svg>
<div class="t" style="left:421.80px;top:392.93px;font:400 9.5px/12.35px 'Liberation Sans', sans-serif;color:#333333;transform:scaleX(0.9250);transform-origin:right;">(1.354.030,07)</div>
<div class="t" style="left:524.94px;top:392.93px;font:400 9.5px/12.35px 'Liberation Sans', sans-serif;color:#333333;transform:scaleX(0.9250);transform-origin:right;">)</div>
<div class="t" style="left:519.47px;top:393.69px;font:400 9.5px/12.35px 'Liberation Mono', monospace;color:#333333;transform:scaleX(0.8595);transform-origin:right;">%</div>
<div class="t" style="left:498.62px;top:392.93px;font:400 9.5px/12.35px 'Liberation Sans', sans-serif;color:#333333;transform:scaleX(0.9250);transform-origin:right;">(2,96</div>
<svg class="r" style="left:534.70px;top:394.60px" width="12" height="11" viewBox="0 0 12 11"><circle cx="3.9" cy="3.7" r="2.75" fill="none" stroke="#7e7e7e" stroke-width="1.15"/><line x1="5.9" y1="5.8" x2="9.1" y2="8.6" stroke="#7e7e7e" stroke-width="1.25" stroke-linecap="round"/></svg>
<div class="t" style="left:550.80px;top:392.93px;font:400 9.5px/12.35px 'Liberation Sans', sans-serif;color:#333333;transform:scaleX(0.9250);transform-origin:right;">(1.546.856,36)</div>
<div class="t" style="left:653.94px;top:392.93px;font:400 9.5px/12.35px 'Liberation Sans', sans-serif;color:#333333;transform:scaleX(0.9250);transform-origin:right;">)</div>
<div class="t" style="left:648.47px;top:393.69px;font:400 9.5px/12.35px 'Liberation Mono', monospace;color:#333333;transform:scaleX(0.8595);transform-origin:right;">%</div>
<div class="t" style="left:627.62px;top:392.93px;font:400 9.5px/12.35px 'Liberation Sans', sans-serif;color:#333333;transform:scaleX(0.9250);transform-origin:right;">(3,10</div>
<svg class="r" style="left:663.70px;top:394.60px" width="12" height="11" viewBox="0 0 12 11"><circle cx="3.9" cy="3.7" r="2.75" fill="none" stroke="#7e7e7e" stroke-width="1.15"/><line x1="5.9" y1="5.8" x2="9.1" y2="8.6" stroke="#7e7e7e" stroke-width="1.25" stroke-linecap="round"/></svg>
<div class="t" style="left:679.80px;top:392.93px;font:400 9.5px/12.35px 'Liberation Sans', sans-serif;color:#333333;transform:scaleX(0.9250);transform-origin:right;">(1.291.998,76)</div>
<div class="t" style="left:782.94px;top:392.93px;font:400 9.5px/12.35px 'Liberation Sans', sans-serif;color:#333333;transform:scaleX(0.9250);transform-origin:right;">)</div>
<div class="t" style="left:777.47px;top:393.69px;font:400 9.5px/12.35px 'Liberation Mono', monospace;color:#333333;transform:scaleX(0.8595);transform-origin:right;">%</div>
<div class="t" style="left:756.62px;top:392.93px;font:400 9.5px/12.35px 'Liberation Sans', sans-serif;color:#333333;transform:scaleX(0.9250);transform-origin:right;">(2,81</div>
<svg class="r" style="left:792.70px;top:394.60px" width="12" height="11" viewBox="0 0 12 11"><circle cx="3.9" cy="3.7" r="2.75" fill="none" stroke="#7e7e7e" stroke-width="1.15"/><line x1="5.9" y1="5.8" x2="9.1" y2="8.6" stroke="#7e7e7e" stroke-width="1.25" stroke-linecap="round"/></svg>
<div class="t" style="left:808.80px;top:392.93px;font:400 9.5px/12.35px 'Liberation Sans', sans-serif;color:#333333;transform:scaleX(0.9250);transform-origin:right;">(1.486.004,83)</div>
<div class="t" style="left:912.94px;top:392.93px;font:400 9.5px/12.35px 'Liberation Sans', sans-serif;color:#333333;transform:scaleX(0.9250);transform-origin:right;">)</div>
<div class="t" style="left:907.47px;top:393.69px;font:400 9.5px/12.35px 'Liberation Mono', monospace;color:#333333;transform:scaleX(0.8595);transform-origin:right;">%</div>
<div class="t" style="left:886.62px;top:392.93px;font:400 9.5px/12.35px 'Liberation Sans', sans-serif;color:#333333;transform:scaleX(0.9250);transform-origin:right;">(2,91</div>
<svg class="r" style="left:922.70px;top:394.60px" width="12" height="11" viewBox="0 0 12 11"><circle cx="3.9" cy="3.7" r="2.75" fill="none" stroke="#7e7e7e" stroke-width="1.15"/><line x1="5.9" y1="5.8" x2="9.1" y2="8.6" stroke="#7e7e7e" stroke-width="1.25" stroke-linecap="round"/></svg>
<div class="t" style="left:938.80px;top:392.93px;font:400 9.5px/12.35px 'Liberation Sans', sans-serif;color:#333333;transform:scaleX(0.9250);transform-origin:right;">(1.487.908,36)</div>
<div class="t" style="left:1041.94px;top:392.93px;font:400 9.5px/12.35px 'Liberation Sans', sans-serif;color:#333333;transform:scaleX(0.9250);transform-origin:right;">)</div>
<div class="t" style="left:1036.47px;top:393.69px;font:400 9.5px/12.35px 'Liberation Mono', monospace;color:#333333;transform:scaleX(0.8595);transform-origin:right;">%</div>
<div class="t" style="left:1015.62px;top:392.93px;font:400 9.5px/12.35px 'Liberation Sans', sans-serif;color:#333333;transform:scaleX(0.9250);transform-origin:right;">(3,06</div>
<svg class="r" style="left:1051.70px;top:394.60px" width="12" height="11" viewBox="0 0 12 11"><circle cx="3.9" cy="3.7" r="2.75" fill="none" stroke="#7e7e7e" stroke-width="1.15"/><line x1="5.9" y1="5.8" x2="9.1" y2="8.6" stroke="#7e7e7e" stroke-width="1.25" stroke-linecap="round"/></svg>
<div class="t" style="left:1067.80px;top:392.93px;font:400 9.5px/12.35px 'Liberation Sans', sans-serif;color:#333333;transform:scaleX(0.9250);transform-origin:right;">(1.477.854,30)</div>
<div class="t" style="left:1170.94px;top:392.93px;font:400 9.5px/12.35px 'Liberation Sans', sans-serif;color:#333333;transform:scaleX(0.9250);transform-origin:right;">)</div>
<div class="t" style="left:1165.47px;top:393.69px;font:400 9.5px/12.35px 'Liberation Mono', monospace;color:#333333;transform:scaleX(0.8595);transform-origin:right;">%</div>
<div class="t" style="left:1144.62px;top:392.93px;font:400 9.5px/12.35px 'Liberation Sans', sans-serif;color:#333333;transform:scaleX(0.9250);transform-origin:right;">(2,95</div>
<svg class="r" style="left:1181.10px;top:394.60px" width="12" height="11" viewBox="0 0 12 11"><circle cx="3.9" cy="3.7" r="2.75" fill="none" stroke="#7e7e7e" stroke-width="1.15"/><line x1="5.9" y1="5.8" x2="9.1" y2="8.6" stroke="#7e7e7e" stroke-width="1.25" stroke-linecap="round"/></svg>
<div class="t" style="left:10.90px;top:408.43px;font:400 9.0px/11.70px 'Liberation Sans', sans-serif;color:#333333;transform:scaleX(0.9150);transform-origin:left;">.. (-) Pis</div>
<svg class="r" style="left:276.70px;top:409.60px" width="12" height="11" viewBox="0 0 12 11"><circle cx="3.9" cy="3.7" r="2.75" fill="none" stroke="#7e7e7e" stroke-width="1.15"/><line x1="5.9" y1="5.8" x2="9.1" y2="8.6" stroke="#7e7e7e" stroke-width="1.25" stroke-linecap="round"/></svg>
<div class="t" style="left:300.72px;top:407.93px;font:400 9.5px/12.35px 'Liberation Sans', sans-serif;color:#333333;transform:scaleX(0.9250);transform-origin:right;">(261.450,56)</div>
<div class="t" style="left:395.94px;top:407.93px;font:400 9.5px/12.35px 'Liberation Sans', sans-serif;color:#333333;transform:scaleX(0.9250);transform-origin:right;">)</div>
<div class="t" style="left:390.47px;top:408.69px;font:400 9.5px/12.35px 'Liberation Mono', monospace;color:#333333;transform:scaleX(0.8595);transform-origin:right;">%</div>
<div class="t" style="left:369.62px;top:407.93px;font:400 9.5px/12.35px 'Liberation Sans', sans-serif;color:#333333;transform:scaleX(0.9250);transform-origin:right;">(0,59</div>
<svg class="r" style="left:405.70px;top:409.60px" width="12" height="11" viewBox="0 0 12 11"><circle cx="3.9" cy="3.7" r="2.75" fill="none" stroke="#7e7e7e" stroke-width="1.15"/><line x1="5.9" y1="5.8" x2="9.1" y2="8.6" stroke="#7e7e7e" stroke-width="1.25" stroke-linecap="round"/></svg>
<div class="t" style="left:429.72px;top:407.93px;font:400 9.5px/12.35px 'Liberation Sans', sans-serif;color:#333333;transform:scaleX(0.9250);transform-origin:right;">(263.913,74)</div>
<div class="t" style="left:524.94px;top:407.93px;font:400 9.5px/12.35px 'Liberation Sans', sans-serif;color:#333333;transform:scaleX(0.9250);transform-origin:right;">)</div>
<div class="t" style="left:519.47px;top:408.69px;font:400 9.5px/12.35px 'Liberation Mono', monospace;color:#333333;transform:scaleX(0.8595);transform-origin:right;">%</div>
<div class="t" style="left:498.62px;top:407.93px;font:400 9.5px/12.35px 'Liberation Sans', sans-serif;color:#333333;transform:scaleX(0.9250);transform-origin:right;">(0,58</div>
<svg class="r" style="left:534.70px;top:409.60px" width="12" height="11" viewBox="0 0 12 11"><circle cx="3.9" cy="3.7" r="2.75" fill="none" stroke="#7e7e7e" stroke-width="1.15"/><line x1="5.9" y1="5.8" x2="9.1" y2="8.6" stroke="#7e7e7e" stroke-width="1.25" stroke-linecap="round"/></svg>
<div class="t" style="left:558.72px;top:407.93px;font:400 9.5px/12.35px 'Liberation Sans', sans-serif;color:#333333;transform:scaleX(0.9250);transform-origin:right;">(303.485,97)</div>
<div class="t" style="left:653.94px;top:407.93px;font:400 9.5px/12.35px 'Liberation Sans', sans-serif;color:#333333;transform:scaleX(0.9250);transform-origin:right;">)</div>
<div class="t" style="left:648.47px;top:408.69px;font:400 9.5px/12.35px 'Liberation Mono', monospace;color:#333333;transform:scaleX(0.8595);transform-origin:right;">%</div>
<div class="t" style="left:627.62px;top:407.93px;font:400 9.5px/12.35px 'Liberation Sans', sans-serif;color:#333333;transform:scaleX(0.9250);transform-origin:right;">(0,61</div>
<svg class="r" style="left:663.70px;top:409.60px" width="12" height="11" viewBox="0 0 12 11"><circle cx="3.9" cy="3.7" r="2.75" fill="none" stroke="#7e7e7e" stroke-width="1.15"/><line x1="5.9" y1="5.8" x2="9.1" y2="8.6" stroke="#7e7e7e" stroke-width="1.25" stroke-linecap="round"/></svg>
<div class="t" style="left:687.72px;top:407.93px;font:400 9.5px/12.35px 'Liberation Sans', sans-serif;color:#333333;transform:scaleX(0.9250);transform-origin:right;">(264.341,70)</div>
<div class="t" style="left:782.94px;top:407.93px;font:400 9.5px/12.35px 'Liberation Sans', sans-serif;color:#333333;transform:scaleX(0.9250);transform-origin:right;">)</div>
<div class="t" style="left:777.47px;top:408.69px;font:400 9.5px/12.35px 'Liberation Mono', monospace;color:#333333;transform:scaleX(0.8595);transform-origin:right;">%</div>
<div class="t" style="left:756.62px;top:407.93px;font:400 9.5px/12.35px 'Liberation Sans', sans-serif;color:#333333;transform:scaleX(0.9250);transform-origin:right;">(0,58</div>
<svg class="r" style="left:792.70px;top:409.60px" width="12" height="11" viewBox="0 0 12 11"><circle cx="3.9" cy="3.7" r="2.75" fill="none" stroke="#7e7e7e" stroke-width="1.15"/><line x1="5.9" y1="5.8" x2="9.1" y2="8.6" stroke="#7e7e7e" stroke-width="1.25" stroke-linecap="round"/></svg>
<div class="t" style="left:816.72px;top:407.93px;font:400 9.5px/12.35px 'Liberation Sans', sans-serif;color:#333333;transform:scaleX(0.9250);transform-origin:right;">(298.064,29)</div>
<div class="t" style="left:912.94px;top:407.93px;font:400 9.5px/12.35px 'Liberation Sans', sans-serif;color:#333333;transform:scaleX(0.9250);transform-origin:right;">)</div>
<div class="t" style="left:907.47px;top:408.69px;font:400 9.5px/12.35px 'Liberation Mono', monospace;color:#333333;transform:scaleX(0.8595);transform-origin:right;">%</div>
<div class="t" style="left:886.62px;top:407.93px;font:400 9.5px/12.35px 'Liberation Sans', sans-serif;color:#333333;transform:scaleX(0.9250);transform-origin:right;">(0,58</div>
<svg class="r" style="left:922.70px;top:409.60px" width="12" height="11" viewBox="0 0 12 11"><circle cx="3.9" cy="3.7" r="2.75" fill="none" stroke="#7e7e7e" stroke-width="1.15"/><line x1="5.9" y1="5.8" x2="9.1" y2="8.6" stroke="#7e7e7e" stroke-width="1.25" stroke-linecap="round"/></svg>
<div class="t" style="left:946.72px;top:407.93px;font:400 9.5px/12.35px 'Liberation Sans', sans-serif;color:#333333;transform:scaleX(0.9250);transform-origin:right;">(293.369,24)</div>
<div class="t" style="left:1041.94px;top:407.93px;font:400 9.5px/12.35px 'Liberation Sans', sans-serif;color:#333333;transform:scaleX(0.9250);transform-origin:right;">)</div>
<div class="t" style="left:1036.47px;top:408.69px;font:400 9.5px/12.35px 'Liberation Mono', monospace;color:#333333;transform:scaleX(0.8595);transform-origin:right;">%</div>
<div class="t" style="left:1015.62px;top:407.93px;font:400 9.5px/12.35px 'Liberation Sans', sans-serif;color:#333333;transform:scaleX(0.9250);transform-origin:right;">(0,60</div>
<svg class="r" style="left:1051.70px;top:409.60px" width="12" height="11" viewBox="0 0 12 11"><circle cx="3.9" cy="3.7" r="2.75" fill="none" stroke="#7e7e7e" stroke-width="1.15"/><line x1="5.9" y1="5.8" x2="9.1" y2="8.6" stroke="#7e7e7e" stroke-width="1.25" stroke-linecap="round"/></svg>
<div class="t" style="left:1075.72px;top:407.93px;font:400 9.5px/12.35px 'Liberation Sans', sans-serif;color:#333333;transform:scaleX(0.9250);transform-origin:right;">(294.873,89)</div>
<div class="t" style="left:1170.94px;top:407.93px;font:400 9.5px/12.35px 'Liberation Sans', sans-serif;color:#333333;transform:scaleX(0.9250);transform-origin:right;">)</div>
<div class="t" style="left:1165.47px;top:408.69px;font:400 9.5px/12.35px 'Liberation Mono', monospace;color:#333333;transform:scaleX(0.8595);transform-origin:right;">%</div>
<div class="t" style="left:1144.62px;top:407.93px;font:400 9.5px/12.35px 'Liberation Sans', sans-serif;color:#333333;transform:scaleX(0.9250);transform-origin:right;">(0,59</div>
<svg class="r" style="left:1181.10px;top:409.60px" width="12" height="11" viewBox="0 0 12 11"><circle cx="3.9" cy="3.7" r="2.75" fill="none" stroke="#7e7e7e" stroke-width="1.15"/><line x1="5.9" y1="5.8" x2="9.1" y2="8.6" stroke="#7e7e7e" stroke-width="1.25" stroke-linecap="round"/></svg>
<div class="t" style="left:10.90px;top:423.43px;font:400 9.0px/11.70px 'Liberation Sans', sans-serif;color:#333333;transform:scaleX(0.9150);transform-origin:left;">.. (-) Cofins</div>
<svg class="r" style="left:276.70px;top:424.60px" width="12" height="11" viewBox="0 0 12 11"><circle cx="3.9" cy="3.7" r="2.75" fill="none" stroke="#7e7e7e" stroke-width="1.15"/><line x1="5.9" y1="5.8" x2="9.1" y2="8.6" stroke="#7e7e7e" stroke-width="1.25" stroke-linecap="round"/></svg>
<div class="t" style="left:292.80px;top:422.93px;font:400 9.5px/12.35px 'Liberation Sans', sans-serif;color:#333333;transform:scaleX(0.9250);transform-origin:right;">(1.204.582,69)</div>
<div class="t" style="left:395.94px;top:422.93px;font:400 9.5px/12.35px 'Liberation Sans', sans-serif;color:#333333;transform:scaleX(0.9250);transform-origin:right;">)</div>
<div class="t" style="left:390.47px;top:423.69px;font:400 9.5px/12.35px 'Liberation Mono', monospace;color:#333333;transform:scaleX(0.8595);transform-origin:right;">%</div>
<div class="t" style="left:369.62px;top:422.93px;font:400 9.5px/12.35px 'Liberation Sans', sans-serif;color:#333333;transform:scaleX(0.9250);transform-origin:right;">(2,70</div>
<svg class="r" style="left:405.70px;top:424.60px" width="12" height="11" viewBox="0 0 12 11"><circle cx="3.9" cy="3.7" r="2.75" fill="none" stroke="#7e7e7e" stroke-width="1.15"/><line x1="5.9" y1="5.8" x2="9.1" y2="8.6" stroke="#7e7e7e" stroke-width="1.25" stroke-linecap="round"/></svg>
<div class="t" style="left:421.80px;top:422.93px;font:400 9.5px/12.35px 'Liberation Sans', sans-serif;color:#333333;transform:scaleX(0.9250);transform-origin:right;">(1.215.928,81)</div>
<div class="t" style="left:524.94px;top:422.93px;font:400 9.5px/12.35px 'Liberation Sans', sans-serif;color:#333333;transform:scaleX(0.9250);transform-origin:right;">)</div>
<div class="t" style="left:519.47px;top:423.69px;font:400 9.5px/12.35px 'Liberation Mono', monospace;color:#333333;transform:scaleX(0.8595);transform-origin:right;">%</div>
<div class="t" style="left:498.62px;top:422.93px;font:400 9.5px/12.35px 'Liberation Sans', sans-serif;color:#333333;transform:scaleX(0.9250);transform-origin:right;">(2,66</div>
<svg class="r" style="left:534.70px;top:424.60px" width="12" height="11" viewBox="0 0 12 11"><circle cx="3.9" cy="3.7" r="2.75" fill="none" stroke="#7e7e7e" stroke-width="1.15"/><line x1="5.9" y1="5.8" x2="9.1" y2="8.6" stroke="#7e7e7e" stroke-width="1.25" stroke-linecap="round"/></svg>
<div class="t" style="left:550.80px;top:422.93px;font:400 9.5px/12.35px 'Liberation Sans', sans-serif;color:#333333;transform:scaleX(0.9250);transform-origin:right;">(1.398.286,04)</div>
<div class="t" style="left:653.94px;top:422.93px;font:400 9.5px/12.35px 'Liberation Sans', sans-serif;color:#333333;transform:scaleX(0.9250);transform-origin:right;">)</div>
<div class="t" style="left:648.47px;top:423.69px;font:400 9.5px/12.35px 'Liberation Mono', monospace;color:#333333;transform:scaleX(0.8595);transform-origin:right;">%</div>
<div class="t" style="left:627.62px;top:422.93px;font:400 9.5px/12.35px 'Liberation Sans', sans-serif;color:#333333;transform:scaleX(0.9250);transform-origin:right;">(2,80</div>
<svg class="r" style="left:663.70px;top:424.60px" width="12" height="11" viewBox="0 0 12 11"><circle cx="3.9" cy="3.7" r="2.75" fill="none" stroke="#7e7e7e" stroke-width="1.15"/><line x1="5.9" y1="5.8" x2="9.1" y2="8.6" stroke="#7e7e7e" stroke-width="1.25" stroke-linecap="round"/></svg>
<div class="t" style="left:679.80px;top:422.93px;font:400 9.5px/12.35px 'Liberation Sans', sans-serif;color:#333333;transform:scaleX(0.9250);transform-origin:right;">(1.217.983,91)</div>
<div class="t" style="left:782.94px;top:422.93px;font:400 9.5px/12.35px 'Liberation Sans', sans-serif;color:#333333;transform:scaleX(0.9250);transform-origin:right;">)</div>
<div class="t" style="left:777.47px;top:423.69px;font:400 9.5px/12.35px 'Liberation Mono', monospace;color:#333333;transform:scaleX(0.8595);transform-origin:right;">%</div>
<div class="t" style="left:756.62px;top:422.93px;font:400 9.5px/12.35px 'Liberation Sans', sans-serif;color:#333333;transform:scaleX(0.9250);transform-origin:right;">(2,65</div>
<svg class="r" style="left:792.70px;top:424.60px" width="12" height="11" viewBox="0 0 12 11"><circle cx="3.9" cy="3.7" r="2.75" fill="none" stroke="#7e7e7e" stroke-width="1.15"/><line x1="5.9" y1="5.8" x2="9.1" y2="8.6" stroke="#7e7e7e" stroke-width="1.25" stroke-linecap="round"/></svg>
<div class="t" style="left:808.80px;top:422.93px;font:400 9.5px/12.35px 'Liberation Sans', sans-serif;color:#333333;transform:scaleX(0.9250);transform-origin:right;">(1.373.173,70)</div>
<div class="t" style="left:912.94px;top:422.93px;font:400 9.5px/12.35px 'Liberation Sans', sans-serif;color:#333333;transform:scaleX(0.9250);transform-origin:right;">)</div>
<div class="t" style="left:907.47px;top:423.69px;font:400 9.5px/12.35px 'Liberation Mono', monospace;color:#333333;transform:scaleX(0.8595);transform-origin:right;">%</div>
<div class="t" style="left:886.62px;top:422.93px;font:400 9.5px/12.35px 'Liberation Sans', sans-serif;color:#333333;transform:scaleX(0.9250);transform-origin:right;">(2,69</div>
<svg class="r" style="left:922.70px;top:424.60px" width="12" height="11" viewBox="0 0 12 11"><circle cx="3.9" cy="3.7" r="2.75" fill="none" stroke="#7e7e7e" stroke-width="1.15"/><line x1="5.9" y1="5.8" x2="9.1" y2="8.6" stroke="#7e7e7e" stroke-width="1.25" stroke-linecap="round"/></svg>
<div class="t" style="left:939.51px;top:422.93px;font:400 9.5px/12.35px 'Liberation Sans', sans-serif;color:#333333;transform:scaleX(0.9250);transform-origin:right;">(1.351.511,57)</div>
<div class="t" style="left:1041.94px;top:422.93px;font:400 9.5px/12.35px 'Liberation Sans', sans-serif;color:#333333;transform:scaleX(0.9250);transform-origin:right;">)</div>
<div class="t" style="left:1036.47px;top:423.69px;font:400 9.5px/12.35px 'Liberation Mono', monospace;color:#333333;transform:scaleX(0.8595);transform-origin:right;">%</div>
<div class="t" style="left:1015.62px;top:422.93px;font:400 9.5px/12.35px 'Liberation Sans', sans-serif;color:#333333;transform:scaleX(0.9250);transform-origin:right;">(2,78</div>
<svg class="r" style="left:1051.70px;top:424.60px" width="12" height="11" viewBox="0 0 12 11"><circle cx="3.9" cy="3.7" r="2.75" fill="none" stroke="#7e7e7e" stroke-width="1.15"/><line x1="5.9" y1="5.8" x2="9.1" y2="8.6" stroke="#7e7e7e" stroke-width="1.25" stroke-linecap="round"/></svg>
<div class="t" style="left:1067.80px;top:422.93px;font:400 9.5px/12.35px 'Liberation Sans', sans-serif;color:#333333;transform:scaleX(0.9250);transform-origin:right;">(1.358.451,73)</div>
<div class="t" style="left:1170.94px;top:422.93px;font:400 9.5px/12.35px 'Liberation Sans', sans-serif;color:#333333;transform:scaleX(0.9250);transform-origin:right;">)</div>
<div class="t" style="left:1165.47px;top:423.69px;font:400 9.5px/12.35px 'Liberation Mono', monospace;color:#333333;transform:scaleX(0.8595);transform-origin:right;">%</div>
<div class="t" style="left:1144.62px;top:422.93px;font:400 9.5px/12.35px 'Liberation Sans', sans-serif;color:#333333;transform:scaleX(0.9250);transform-origin:right;">(2,71</div>
<svg class="r" style="left:1181.10px;top:424.60px" width="12" height="11" viewBox="0 0 12 11"><circle cx="3.9" cy="3.7" r="2.75" fill="none" stroke="#7e7e7e" stroke-width="1.15"/><line x1="5.9" y1="5.8" x2="9.1" y2="8.6" stroke="#7e7e7e" stroke-width="1.25" stroke-linecap="round"/></svg>
<div class="t" style="left:11.40px;top:438.43px;font:400 9.0px/11.70px 'Liberation Sans', sans-serif;color:#ffffff;transform:scaleX(0.8600);transform-origin:left;-webkit-text-stroke:0.3px #fff;">RECEITA LÍQUIDA DE VENDAS</div>
<svg class="r" style="left:276.70px;top:439.60px" width="12" height="11" viewBox="0 0 12 11"><circle cx="3.9" cy="3.7" r="2.75" fill="none" stroke="#6c7782" stroke-width="1.15"/><line x1="5.9" y1="5.8" x2="9.1" y2="8.6" stroke="#6c7782" stroke-width="1.25" stroke-linecap="round"/></svg>
<div class="t" style="left:293.85px;top:437.93px;font:400 9.5px/12.35px 'Liberation Sans', sans-serif;color:#ffffff;transform:scaleX(0.9250);transform-origin:right;-webkit-text-stroke:0.2px #fff;">41.696.573,02</div>
<div class="t" style="left:393.40px;top:438.69px;font:400 9.5px/12.35px 'Liberation Mono', monospace;color:#ffffff;transform:scaleX(0.8595);transform-origin:right;-webkit-text-stroke:0.2px #fff;">%</div>
<div class="t" style="left:370.43px;top:437.93px;font:400 9.5px/12.35px 'Liberation Sans', sans-serif;color:#ffffff;transform:scaleX(0.9250);transform-origin:right;-webkit-text-stroke:0.2px #fff;">93,61</div>
<svg class="r" style="left:405.70px;top:439.60px" width="12" height="11" viewBox="0 0 12 11"><circle cx="3.9" cy="3.7" r="2.75" fill="none" stroke="#6c7782" stroke-width="1.15"/><line x1="5.9" y1="5.8" x2="9.1" y2="8.6" stroke="#6c7782" stroke-width="1.25" stroke-linecap="round"/></svg>
<div class="t" style="left:422.85px;top:437.93px;font:400 9.5px/12.35px 'Liberation Sans', sans-serif;color:#ffffff;transform:scaleX(0.9250);transform-origin:right;-webkit-text-stroke:0.2px #fff;">42.896.366,43</div>
<div class="t" style="left:522.40px;top:438.69px;font:400 9.5px/12.35px 'Liberation Mono', monospace;color:#ffffff;transform:scaleX(0.8595);transform-origin:right;-webkit-text-stroke:0.2px #fff;">%</div>
<div class="t" style="left:499.43px;top:437.93px;font:400 9.5px/12.35px 'Liberation Sans', sans-serif;color:#ffffff;transform:scaleX(0.9250);transform-origin:right;-webkit-text-stroke:0.2px #fff;">93,69</div>
<svg class="r" style="left:534.70px;top:439.60px" width="12" height="11" viewBox="0 0 12 11"><circle cx="3.9" cy="3.7" r="2.75" fill="none" stroke="#6c7782" stroke-width="1.15"/><line x1="5.9" y1="5.8" x2="9.1" y2="8.6" stroke="#6c7782" stroke-width="1.25" stroke-linecap="round"/></svg>
<div class="t" style="left:552.55px;top:437.93px;font:400 9.5px/12.35px 'Liberation Sans', sans-serif;color:#ffffff;transform:scaleX(0.9250);transform-origin:right;-webkit-text-stroke:0.2px #fff;">46.511.564,93</div>
<div class="t" style="left:651.40px;top:438.69px;font:400 9.5px/12.35px 'Liberation Mono', monospace;color:#ffffff;transform:scaleX(0.8595);transform-origin:right;-webkit-text-stroke:0.2px #fff;">%</div>
<div class="t" style="left:628.43px;top:437.93px;font:400 9.5px/12.35px 'Liberation Sans', sans-serif;color:#ffffff;transform:scaleX(0.9250);transform-origin:right;-webkit-text-stroke:0.2px #fff;">93,30</div>
<svg class="r" style="left:663.70px;top:439.60px" width="12" height="11" viewBox="0 0 12 11"><circle cx="3.9" cy="3.7" r="2.75" fill="none" stroke="#6c7782" stroke-width="1.15"/><line x1="5.9" y1="5.8" x2="9.1" y2="8.6" stroke="#6c7782" stroke-width="1.25" stroke-linecap="round"/></svg>
<div class="t" style="left:680.85px;top:437.93px;font:400 9.5px/12.35px 'Liberation Sans', sans-serif;color:#ffffff;transform:scaleX(0.9250);transform-origin:right;-webkit-text-stroke:0.2px #fff;">43.135.362,50</div>
<div class="t" style="left:780.40px;top:438.69px;font:400 9.5px/12.35px 'Liberation Mono', monospace;color:#ffffff;transform:scaleX(0.8595);transform-origin:right;-webkit-text-stroke:0.2px #fff;">%</div>
<div class="t" style="left:757.43px;top:437.93px;font:400 9.5px/12.35px 'Liberation Sans', sans-serif;color:#ffffff;transform:scaleX(0.9250);transform-origin:right;-webkit-text-stroke:0.2px #fff;">93,83</div>
<svg class="r" style="left:792.70px;top:439.60px" width="12" height="11" viewBox="0 0 12 11"><circle cx="3.9" cy="3.7" r="2.75" fill="none" stroke="#6c7782" stroke-width="1.15"/><line x1="5.9" y1="5.8" x2="9.1" y2="8.6" stroke="#6c7782" stroke-width="1.25" stroke-linecap="round"/></svg>
<div class="t" style="left:809.85px;top:437.93px;font:400 9.5px/12.35px 'Liberation Sans', sans-serif;color:#ffffff;transform:scaleX(0.9250);transform-origin:right;-webkit-text-stroke:0.2px #fff;">47.790.704,05</div>
<div class="t" style="left:910.40px;top:438.69px;font:400 9.5px/12.35px 'Liberation Mono', monospace;color:#ffffff;transform:scaleX(0.8595);transform-origin:right;-webkit-text-stroke:0.2px #fff;">%</div>
<div class="t" style="left:887.43px;top:437.93px;font:400 9.5px/12.35px 'Liberation Sans', sans-serif;color:#ffffff;transform:scaleX(0.9250);transform-origin:right;-webkit-text-stroke:0.2px #fff;">93,69</div>
<svg class="r" style="left:922.70px;top:439.60px" width="12" height="11" viewBox="0 0 12 11"><circle cx="3.9" cy="3.7" r="2.75" fill="none" stroke="#6c7782" stroke-width="1.15"/><line x1="5.9" y1="5.8" x2="9.1" y2="8.6" stroke="#6c7782" stroke-width="1.25" stroke-linecap="round"/></svg>
<div class="t" style="left:939.85px;top:437.93px;font:400 9.5px/12.35px 'Liberation Sans', sans-serif;color:#ffffff;transform:scaleX(0.9250);transform-origin:right;-webkit-text-stroke:0.2px #fff;">45.435.052,57</div>
<div class="t" style="left:1039.40px;top:438.69px;font:400 9.5px/12.35px 'Liberation Mono', monospace;color:#ffffff;transform:scaleX(0.8595);transform-origin:right;-webkit-text-stroke:0.2px #fff;">%</div>
<div class="t" style="left:1016.43px;top:437.93px;font:400 9.5px/12.35px 'Liberation Sans', sans-serif;color:#ffffff;transform:scaleX(0.9250);transform-origin:right;-webkit-text-stroke:0.2px #fff;">93,45</div>
<svg class="r" style="left:1051.70px;top:439.60px" width="12" height="11" viewBox="0 0 12 11"><circle cx="3.9" cy="3.7" r="2.75" fill="none" stroke="#6c7782" stroke-width="1.15"/><line x1="5.9" y1="5.8" x2="9.1" y2="8.6" stroke="#6c7782" stroke-width="1.25" stroke-linecap="round"/></svg>
<div class="t" style="left:1068.85px;top:437.93px;font:400 9.5px/12.35px 'Liberation Sans', sans-serif;color:#ffffff;transform:scaleX(0.9250);transform-origin:right;-webkit-text-stroke:0.2px #fff;">46.959.690,91</div>
<div class="t" style="left:1168.40px;top:438.69px;font:400 9.5px/12.35px 'Liberation Mono', monospace;color:#ffffff;transform:scaleX(0.8595);transform-origin:right;-webkit-text-stroke:0.2px #fff;">%</div>
<div class="t" style="left:1145.43px;top:437.93px;font:400 9.5px/12.35px 'Liberation Sans', sans-serif;color:#ffffff;transform:scaleX(0.9250);transform-origin:right;-webkit-text-stroke:0.2px #fff;">93,65</div>
<svg class="r" style="left:1181.10px;top:439.60px" width="12" height="11" viewBox="0 0 12 11"><circle cx="3.9" cy="3.7" r="2.75" fill="none" stroke="#6c7782" stroke-width="1.15"/><line x1="5.9" y1="5.8" x2="9.1" y2="8.6" stroke="#6c7782" stroke-width="1.25" stroke-linecap="round"/></svg>
<div class="t" style="left:11.40px;top:453.43px;font:400 9.0px/11.70px 'Liberation Sans', sans-serif;color:#ffffff;transform:scaleX(0.8600);transform-origin:left;-webkit-text-stroke:0.3px #fff;">(-) CUSTO DAS MERCADORIAS VENDIDAS</div>
<svg class="r" style="left:276.70px;top:454.60px" width="12" height="11" viewBox="0 0 12 11"><circle cx="3.9" cy="3.7" r="2.75" fill="none" stroke="#6c7782" stroke-width="1.15"/><line x1="5.9" y1="5.8" x2="9.1" y2="8.6" stroke="#6c7782" stroke-width="1.25" stroke-linecap="round"/></svg>
<div class="t" style="left:287.52px;top:452.93px;font:400 9.5px/12.35px 'Liberation Sans', sans-serif;color:#ffffff;transform:scaleX(0.9250);transform-origin:right;-webkit-text-stroke:0.2px #fff;">(34.168.383,02)</div>
<div class="t" style="left:395.94px;top:452.93px;font:400 9.5px/12.35px 'Liberation Sans', sans-serif;color:#ffffff;transform:scaleX(0.9250);transform-origin:right;-webkit-text-stroke:0.2px #fff;">)</div>
<div class="t" style="left:390.47px;top:453.69px;font:400 9.5px/12.35px 'Liberation Mono', monospace;color:#ffffff;transform:scaleX(0.8595);transform-origin:right;-webkit-text-stroke:0.2px #fff;">%</div>
<div class="t" style="left:364.34px;top:452.93px;font:400 9.5px/12.35px 'Liberation Sans', sans-serif;color:#ffffff;transform:scaleX(0.9250);transform-origin:right;-webkit-text-stroke:0.2px #fff;">(76,71</div>
<svg class="r" style="left:405.70px;top:454.60px" width="12" height="11" viewBox="0 0 12 11"><circle cx="3.9" cy="3.7" r="2.75" fill="none" stroke="#6c7782" stroke-width="1.15"/><line x1="5.9" y1="5.8" x2="9.1" y2="8.6" stroke="#6c7782" stroke-width="1.25" stroke-linecap="round"/></svg>
<div class="t" style="left:416.52px;top:452.93px;font:400 9.5px/12.35px 'Liberation Sans', sans-serif;color:#ffffff;transform:scaleX(0.9250);transform-origin:right;-webkit-text-stroke:0.2px #fff;">(35.324.384,60)</div>
<div class="t" style="left:524.94px;top:452.93px;font:400 9.5px/12.35px 'Liberation Sans', sans-serif;color:#ffffff;transform:scaleX(0.9250);transform-origin:right;-webkit-text-stroke:0.2px #fff;">)</div>
<div class="t" style="left:519.47px;top:453.69px;font:400 9.5px/12.35px 'Liberation Mono', monospace;color:#ffffff;transform:scaleX(0.8595);transform-origin:right;-webkit-text-stroke:0.2px #fff;">%</div>
<div class="t" style="left:493.34px;top:452.93px;font:400 9.5px/12.35px 'Liberation Sans', sans-serif;color:#ffffff;transform:scaleX(0.9250);transform-origin:right;-webkit-text-stroke:0.2px #fff;">(77,15</div>
<svg class="r" style="left:534.70px;top:454.60px" width="12" height="11" viewBox="0 0 12 11"><circle cx="3.9" cy="3.7" r="2.75" fill="none" stroke="#6c7782" stroke-width="1.15"/><line x1="5.9" y1="5.8" x2="9.1" y2="8.6" stroke="#6c7782" stroke-width="1.25" stroke-linecap="round"/></svg>
<div class="t" style="left:545.52px;top:452.93px;font:400 9.5px/12.35px 'Liberation Sans', sans-serif;color:#ffffff;transform:scaleX(0.9250);transform-origin:right;-webkit-text-stroke:0.2px #fff;">(38.708.152,23)</div>
<div class="t" style="left:653.94px;top:452.93px;font:400 9.5px/12.35px 'Liberation Sans', sans-serif;color:#ffffff;transform:scaleX(0.9250);transform-origin:right;-webkit-text-stroke:0.2px #fff;">)</div>
<div class="t" style="left:648.47px;top:453.69px;font:400 9.5px/12.35px 'Liberation Mono', monospace;color:#ffffff;transform:scaleX(0.8595);transform-origin:right;-webkit-text-stroke:0.2px #fff;">%</div>
<div class="t" style="left:622.34px;top:452.93px;font:400 9.5px/12.35px 'Liberation Sans', sans-serif;color:#ffffff;transform:scaleX(0.9250);transform-origin:right;-webkit-text-stroke:0.2px #fff;">(77,64</div>
<svg class="r" style="left:663.70px;top:454.60px" width="12" height="11" viewBox="0 0 12 11"><circle cx="3.9" cy="3.7" r="2.75" fill="none" stroke="#6c7782" stroke-width="1.15"/><line x1="5.9" y1="5.8" x2="9.1" y2="8.6" stroke="#6c7782" stroke-width="1.25" stroke-linecap="round"/></svg>
<div class="t" style="left:674.52px;top:452.93px;font:400 9.5px/12.35px 'Liberation Sans', sans-serif;color:#ffffff;transform:scaleX(0.9250);transform-origin:right;-webkit-text-stroke:0.2px #fff;">(35.162.614,31)</div>
<div class="t" style="left:782.94px;top:452.93px;font:400 9.5px/12.35px 'Liberation Sans', sans-serif;color:#ffffff;transform:scaleX(0.9250);transform-origin:right;-webkit-text-stroke:0.2px #fff;">)</div>
<div class="t" style="left:777.47px;top:453.69px;font:400 9.5px/12.35px 'Liberation Mono', monospace;color:#ffffff;transform:scaleX(0.8595);transform-origin:right;-webkit-text-stroke:0.2px #fff;">%</div>
<div class="t" style="left:751.34px;top:452.93px;font:400 9.5px/12.35px 'Liberation Sans', sans-serif;color:#ffffff;transform:scaleX(0.9250);transform-origin:right;-webkit-text-stroke:0.2px #fff;">(76,49</div>
<svg class="r" style="left:792.70px;top:454.60px" width="12" height="11" viewBox="0 0 12 11"><circle cx="3.9" cy="3.7" r="2.75" fill="none" stroke="#6c7782" stroke-width="1.15"/><line x1="5.9" y1="5.8" x2="9.1" y2="8.6" stroke="#6c7782" stroke-width="1.25" stroke-linecap="round"/></svg>
<div class="t" style="left:803.52px;top:452.93px;font:400 9.5px/12.35px 'Liberation Sans', sans-serif;color:#ffffff;transform:scaleX(0.9250);transform-origin:right;-webkit-text-stroke:0.2px #fff;">(39.317.580,92)</div>
<div class="t" style="left:912.94px;top:452.93px;font:400 9.5px/12.35px 'Liberation Sans', sans-serif;color:#ffffff;transform:scaleX(0.9250);transform-origin:right;-webkit-text-stroke:0.2px #fff;">)</div>
<div class="t" style="left:907.47px;top:453.69px;font:400 9.5px/12.35px 'Liberation Mono', monospace;color:#ffffff;transform:scaleX(0.8595);transform-origin:right;-webkit-text-stroke:0.2px #fff;">%</div>
<div class="t" style="left:881.34px;top:452.93px;font:400 9.5px/12.35px 'Liberation Sans', sans-serif;color:#ffffff;transform:scaleX(0.9250);transform-origin:right;-webkit-text-stroke:0.2px #fff;">(77,08</div>
<svg class="r" style="left:922.70px;top:454.60px" width="12" height="11" viewBox="0 0 12 11"><circle cx="3.9" cy="3.7" r="2.75" fill="none" stroke="#6c7782" stroke-width="1.15"/><line x1="5.9" y1="5.8" x2="9.1" y2="8.6" stroke="#6c7782" stroke-width="1.25" stroke-linecap="round"/></svg>
<div class="t" style="left:933.52px;top:452.93px;font:400 9.5px/12.35px 'Liberation Sans', sans-serif;color:#ffffff;transform:scaleX(0.9250);transform-origin:right;-webkit-text-stroke:0.2px #fff;">(37.892.152,46)</div>
<div class="t" style="left:1041.94px;top:452.93px;font:400 9.5px/12.35px 'Liberation Sans', sans-serif;color:#ffffff;transform:scaleX(0.9250);transform-origin:right;-webkit-text-stroke:0.2px #fff;">)</div>
<div class="t" style="left:1036.47px;top:453.69px;font:400 9.5px/12.35px 'Liberation Mono', monospace;color:#ffffff;transform:scaleX(0.8595);transform-origin:right;-webkit-text-stroke:0.2px #fff;">%</div>
<div class="t" style="left:1010.34px;top:452.93px;font:400 9.5px/12.35px 'Liberation Sans', sans-serif;color:#ffffff;transform:scaleX(0.9250);transform-origin:right;-webkit-text-stroke:0.2px #fff;">(77,94</div>
<svg class="r" style="left:1051.70px;top:454.60px" width="12" height="11" viewBox="0 0 12 11"><circle cx="3.9" cy="3.7" r="2.75" fill="none" stroke="#6c7782" stroke-width="1.15"/><line x1="5.9" y1="5.8" x2="9.1" y2="8.6" stroke="#6c7782" stroke-width="1.25" stroke-linecap="round"/></svg>
<div class="t" style="left:1063.22px;top:452.93px;font:400 9.5px/12.35px 'Liberation Sans', sans-serif;color:#ffffff;transform:scaleX(0.9250);transform-origin:right;-webkit-text-stroke:0.2px #fff;">(38.988.114,63)</div>
<div class="t" style="left:1170.94px;top:452.93px;font:400 9.5px/12.35px 'Liberation Sans', sans-serif;color:#ffffff;transform:scaleX(0.9250);transform-origin:right;-webkit-text-stroke:0.2px #fff;">)</div>
<div class="t" style="left:1165.47px;top:453.69px;font:400 9.5px/12.35px 'Liberation Mono', monospace;color:#ffffff;transform:scaleX(0.8595);transform-origin:right;-webkit-text-stroke:0.2px #fff;">%</div>
<div class="t" style="left:1139.34px;top:452.93px;font:400 9.5px/12.35px 'Liberation Sans', sans-serif;color:#ffffff;transform:scaleX(0.9250);transform-origin:right;-webkit-text-stroke:0.2px #fff;">(77,75</div>
<svg class="r" style="left:1181.10px;top:454.60px" width="12" height="11" viewBox="0 0 12 11"><circle cx="3.9" cy="3.7" r="2.75" fill="none" stroke="#6c7782" stroke-width="1.15"/><line x1="5.9" y1="5.8" x2="9.1" y2="8.6" stroke="#6c7782" stroke-width="1.25" stroke-linecap="round"/></svg>
<div class="t" style="left:10.90px;top:468.43px;font:400 9.0px/11.70px 'Liberation Sans', sans-serif;color:#333333;transform:scaleX(0.9150);transform-origin:left;">.. Custo das Mercadorias Vendidas</div>
<svg class="r" style="left:276.70px;top:469.60px" width="12" height="11" viewBox="0 0 12 11"><circle cx="3.9" cy="3.7" r="2.75" fill="none" stroke="#7e7e7e" stroke-width="1.15"/><line x1="5.9" y1="5.8" x2="9.1" y2="8.6" stroke="#7e7e7e" stroke-width="1.25" stroke-linecap="round"/></svg>
<div class="t" style="left:336.11px;top:467.93px;font:400 9.5px/12.35px 'Liberation Sans', sans-serif;color:#333333;transform:scaleX(0.9250);transform-origin:right;">0,00</div>
<div class="t" style="left:393.40px;top:468.69px;font:400 9.5px/12.35px 'Liberation Mono', monospace;color:#333333;transform:scaleX(0.8595);transform-origin:right;">%</div>
<div class="t" style="left:375.71px;top:467.93px;font:400 9.5px/12.35px 'Liberation Sans', sans-serif;color:#333333;transform:scaleX(0.9250);transform-origin:right;">0,00</div>
<svg class="r" style="left:405.70px;top:469.60px" width="12" height="11" viewBox="0 0 12 11"><circle cx="3.9" cy="3.7" r="2.75" fill="none" stroke="#7e7e7e" stroke-width="1.15"/><line x1="5.9" y1="5.8" x2="9.1" y2="8.6" stroke="#7e7e7e" stroke-width="1.25" stroke-linecap="round"/></svg>
<div class="t" style="left:465.11px;top:467.93px;font:400 9.5px/12.35px 'Liberation Sans', sans-serif;color:#333333;transform:scaleX(0.9250);transform-origin:right;">0,00</div>
<div class="t" style="left:522.40px;top:468.69px;font:400 9.5px/12.35px 'Liberation Mono', monospace;color:#333333;transform:scaleX(0.8595);transform-origin:right;">%</div>
<div class="t" style="left:504.71px;top:467.93px;font:400 9.5px/12.35px 'Liberation Sans', sans-serif;color:#333333;transform:scaleX(0.9250);transform-origin:right;">0,00</div>
<svg class="r" style="left:534.70px;top:469.60px" width="12" height="11" viewBox="0 0 12 11"><circle cx="3.9" cy="3.7" r="2.75" fill="none" stroke="#7e7e7e" stroke-width="1.15"/><line x1="5.9" y1="5.8" x2="9.1" y2="8.6" stroke="#7e7e7e" stroke-width="1.25" stroke-linecap="round"/></svg>
<div class="t" style="left:594.11px;top:467.93px;font:400 9.5px/12.35px 'Liberation Sans', sans-serif;color:#333333;transform:scaleX(0.9250);transform-origin:right;">0,00</div>
<div class="t" style="left:651.40px;top:468.69px;font:400 9.5px/12.35px 'Liberation Mono', monospace;color:#333333;transform:scaleX(0.8595);transform-origin:right;">%</div>
<div class="t" style="left:633.71px;top:467.93px;font:400 9.5px/12.35px 'Liberation Sans', sans-serif;color:#333333;transform:scaleX(0.9250);transform-origin:right;">0,00</div>
<svg class="r" style="left:663.70px;top:469.60px" width="12" height="11" viewBox="0 0 12 11"><circle cx="3.9" cy="3.7" r="2.75" fill="none" stroke="#7e7e7e" stroke-width="1.15"/><line x1="5.9" y1="5.8" x2="9.1" y2="8.6" stroke="#7e7e7e" stroke-width="1.25" stroke-linecap="round"/></svg>
<div class="t" style="left:723.11px;top:467.93px;font:400 9.5px/12.35px 'Liberation Sans', sans-serif;color:#333333;transform:scaleX(0.9250);transform-origin:right;">0,00</div>
<div class="t" style="left:780.40px;top:468.69px;font:400 9.5px/12.35px 'Liberation Mono', monospace;color:#333333;transform:scaleX(0.8595);transform-origin:right;">%</div>
<div class="t" style="left:762.71px;top:467.93px;font:400 9.5px/12.35px 'Liberation Sans', sans-serif;color:#333333;transform:scaleX(0.9250);transform-origin:right;">0,00</div>
<svg class="r" style="left:792.70px;top:469.60px" width="12" height="11" viewBox="0 0 12 11"><circle cx="3.9" cy="3.7" r="2.75" fill="none" stroke="#7e7e7e" stroke-width="1.15"/><line x1="5.9" y1="5.8" x2="9.1" y2="8.6" stroke="#7e7e7e" stroke-width="1.25" stroke-linecap="round"/></svg>
<div class="t" style="left:852.11px;top:467.93px;font:400 9.5px/12.35px 'Liberation Sans', sans-serif;color:#333333;transform:scaleX(0.9250);transform-origin:right;">0,00</div>
<div class="t" style="left:910.40px;top:468.69px;font:400 9.5px/12.35px 'Liberation Mono', monospace;color:#333333;transform:scaleX(0.8595);transform-origin:right;">%</div>
<div class="t" style="left:892.71px;top:467.93px;font:400 9.5px/12.35px 'Liberation Sans', sans-serif;color:#333333;transform:scaleX(0.9250);transform-origin:right;">0,00</div>
<svg class="r" style="left:922.70px;top:469.60px" width="12" height="11" viewBox="0 0 12 11"><circle cx="3.9" cy="3.7" r="2.75" fill="none" stroke="#7e7e7e" stroke-width="1.15"/><line x1="5.9" y1="5.8" x2="9.1" y2="8.6" stroke="#7e7e7e" stroke-width="1.25" stroke-linecap="round"/></svg>
<div class="t" style="left:982.11px;top:467.93px;font:400 9.5px/12.35px 'Liberation Sans', sans-serif;color:#333333;transform:scaleX(0.9250);transform-origin:right;">0,00</div>
<div class="t" style="left:1039.40px;top:468.69px;font:400 9.5px/12.35px 'Liberation Mono', monospace;color:#333333;transform:scaleX(0.8595);transform-origin:right;">%</div>
<div class="t" style="left:1021.71px;top:467.93px;font:400 9.5px/12.35px 'Liberation Sans', sans-serif;color:#333333;transform:scaleX(0.9250);transform-origin:right;">0,00</div>
<svg class="r" style="left:1051.70px;top:469.60px" width="12" height="11" viewBox="0 0 12 11"><circle cx="3.9" cy="3.7" r="2.75" fill="none" stroke="#7e7e7e" stroke-width="1.15"/><line x1="5.9" y1="5.8" x2="9.1" y2="8.6" stroke="#7e7e7e" stroke-width="1.25" stroke-linecap="round"/></svg>
<div class="t" style="left:1111.11px;top:467.93px;font:400 9.5px/12.35px 'Liberation Sans', sans-serif;color:#333333;transform:scaleX(0.9250);transform-origin:right;">0,00</div>
<div class="t" style="left:1168.40px;top:468.69px;font:400 9.5px/12.35px 'Liberation Mono', monospace;color:#333333;transform:scaleX(0.8595);transform-origin:right;">%</div>
<div class="t" style="left:1150.71px;top:467.93px;font:400 9.5px/12.35px 'Liberation Sans', sans-serif;color:#333333;transform:scaleX(0.9250);transform-origin:right;">0,00</div>
<svg class="r" style="left:1181.10px;top:469.60px" width="12" height="11" viewBox="0 0 12 11"><circle cx="3.9" cy="3.7" r="2.75" fill="none" stroke="#7e7e7e" stroke-width="1.15"/><line x1="5.9" y1="5.8" x2="9.1" y2="8.6" stroke="#7e7e7e" stroke-width="1.25" stroke-linecap="round"/></svg>
<div class="t" style="left:10.90px;top:483.43px;font:400 9.0px/11.70px 'Liberation Sans', sans-serif;color:#333333;transform:scaleX(0.9150);transform-origin:left;">.. Bonificações c/ Redução de Custos</div>
<svg class="r" style="left:276.70px;top:484.60px" width="12" height="11" viewBox="0 0 12 11"><circle cx="3.9" cy="3.7" r="2.75" fill="none" stroke="#7e7e7e" stroke-width="1.15"/><line x1="5.9" y1="5.8" x2="9.1" y2="8.6" stroke="#7e7e7e" stroke-width="1.25" stroke-linecap="round"/></svg>
<div class="t" style="left:307.76px;top:482.93px;font:400 9.5px/12.35px 'Liberation Sans', sans-serif;color:#333333;transform:scaleX(0.9250);transform-origin:right;">264.411,92</div>
<div class="t" style="left:393.40px;top:483.69px;font:400 9.5px/12.35px 'Liberation Mono', monospace;color:#333333;transform:scaleX(0.8595);transform-origin:right;">%</div>
<div class="t" style="left:375.71px;top:482.93px;font:400 9.5px/12.35px 'Liberation Sans', sans-serif;color:#333333;transform:scaleX(0.9250);transform-origin:right;">0,59</div>
<svg class="r" style="left:405.70px;top:484.60px" width="12" height="11" viewBox="0 0 12 11"><circle cx="3.9" cy="3.7" r="2.75" fill="none" stroke="#7e7e7e" stroke-width="1.15"/><line x1="5.9" y1="5.8" x2="9.1" y2="8.6" stroke="#7e7e7e" stroke-width="1.25" stroke-linecap="round"/></svg>
<div class="t" style="left:436.05px;top:482.93px;font:400 9.5px/12.35px 'Liberation Sans', sans-serif;color:#333333;transform:scaleX(0.9250);transform-origin:right;">226.002,17</div>
<div class="t" style="left:522.40px;top:483.69px;font:400 9.5px/12.35px 'Liberation Mono', monospace;color:#333333;transform:scaleX(0.8595);transform-origin:right;">%</div>
<div class="t" style="left:504.71px;top:482.93px;font:400 9.5px/12.35px 'Liberation Sans', sans-serif;color:#333333;transform:scaleX(0.9250);transform-origin:right;">0,49</div>
<svg class="r" style="left:534.70px;top:484.60px" width="12" height="11" viewBox="0 0 12 11"><circle cx="3.9" cy="3.7" r="2.75" fill="none" stroke="#7e7e7e" stroke-width="1.15"/><line x1="5.9" y1="5.8" x2="9.1" y2="8.6" stroke="#7e7e7e" stroke-width="1.25" stroke-linecap="round"/></svg>
<div class="t" style="left:565.05px;top:482.93px;font:400 9.5px/12.35px 'Liberation Sans', sans-serif;color:#333333;transform:scaleX(0.9250);transform-origin:right;">107.737,16</div>
<div class="t" style="left:651.40px;top:483.69px;font:400 9.5px/12.35px 'Liberation Mono', monospace;color:#333333;transform:scaleX(0.8595);transform-origin:right;">%</div>
<div class="t" style="left:633.71px;top:482.93px;font:400 9.5px/12.35px 'Liberation Sans', sans-serif;color:#333333;transform:scaleX(0.9250);transform-origin:right;">0,22</div>
<svg class="r" style="left:663.70px;top:484.60px" width="12" height="11" viewBox="0 0 12 11"><circle cx="3.9" cy="3.7" r="2.75" fill="none" stroke="#7e7e7e" stroke-width="1.15"/><line x1="5.9" y1="5.8" x2="9.1" y2="8.6" stroke="#7e7e7e" stroke-width="1.25" stroke-linecap="round"/></svg>
<div class="t" style="left:694.05px;top:482.93px;font:400 9.5px/12.35px 'Liberation Sans', sans-serif;color:#333333;transform:scaleX(0.9250);transform-origin:right;">194.876,10</div>
<div class="t" style="left:780.40px;top:483.69px;font:400 9.5px/12.35px 'Liberation Mono', monospace;color:#333333;transform:scaleX(0.8595);transform-origin:right;">%</div>
<div class="t" style="left:762.71px;top:482.93px;font:400 9.5px/12.35px 'Liberation Sans', sans-serif;color:#333333;transform:scaleX(0.9250);transform-origin:right;">0,42</div>
<svg class="r" style="left:792.70px;top:484.60px" width="12" height="11" viewBox="0 0 12 11"><circle cx="3.9" cy="3.7" r="2.75" fill="none" stroke="#7e7e7e" stroke-width="1.15"/><line x1="5.9" y1="5.8" x2="9.1" y2="8.6" stroke="#7e7e7e" stroke-width="1.25" stroke-linecap="round"/></svg>
<div class="t" style="left:823.05px;top:482.93px;font:400 9.5px/12.35px 'Liberation Sans', sans-serif;color:#333333;transform:scaleX(0.9250);transform-origin:right;">227.777,59</div>
<div class="t" style="left:910.40px;top:483.69px;font:400 9.5px/12.35px 'Liberation Mono', monospace;color:#333333;transform:scaleX(0.8595);transform-origin:right;">%</div>
<div class="t" style="left:892.71px;top:482.93px;font:400 9.5px/12.35px 'Liberation Sans', sans-serif;color:#333333;transform:scaleX(0.9250);transform-origin:right;">0,45</div>
<svg class="r" style="left:922.70px;top:484.60px" width="12" height="11" viewBox="0 0 12 11"><circle cx="3.9" cy="3.7" r="2.75" fill="none" stroke="#7e7e7e" stroke-width="1.15"/><line x1="5.9" y1="5.8" x2="9.1" y2="8.6" stroke="#7e7e7e" stroke-width="1.25" stroke-linecap="round"/></svg>
<div class="t" style="left:953.05px;top:482.93px;font:400 9.5px/12.35px 'Liberation Sans', sans-serif;color:#333333;transform:scaleX(0.9250);transform-origin:right;">277.840,42</div>
<div class="t" style="left:1039.40px;top:483.69px;font:400 9.5px/12.35px 'Liberation Mono', monospace;color:#333333;transform:scaleX(0.8595);transform-origin:right;">%</div>
<div class="t" style="left:1021.71px;top:482.93px;font:400 9.5px/12.35px 'Liberation Sans', sans-serif;color:#333333;transform:scaleX(0.9250);transform-origin:right;">0,57</div>
<svg class="r" style="left:1051.70px;top:484.60px" width="12" height="11" viewBox="0 0 12 11"><circle cx="3.9" cy="3.7" r="2.75" fill="none" stroke="#7e7e7e" stroke-width="1.15"/><line x1="5.9" y1="5.8" x2="9.1" y2="8.6" stroke="#7e7e7e" stroke-width="1.25" stroke-linecap="round"/></svg>
<div class="t" style="left:1082.76px;top:482.93px;font:400 9.5px/12.35px 'Liberation Sans', sans-serif;color:#333333;transform:scaleX(0.9250);transform-origin:right;">410.114,62</div>
<div class="t" style="left:1168.40px;top:483.69px;font:400 9.5px/12.35px 'Liberation Mono', monospace;color:#333333;transform:scaleX(0.8595);transform-origin:right;">%</div>
<div class="t" style="left:1150.71px;top:482.93px;font:400 9.5px/12.35px 'Liberation Sans', sans-serif;color:#333333;transform:scaleX(0.9250);transform-origin:right;">0,82</div>
<svg class="r" style="left:1181.10px;top:484.60px" width="12" height="11" viewBox="0 0 12 11"><circle cx="3.9" cy="3.7" r="2.75" fill="none" stroke="#7e7e7e" stroke-width="1.15"/><line x1="5.9" y1="5.8" x2="9.1" y2="8.6" stroke="#7e7e7e" stroke-width="1.25" stroke-linecap="round"/></svg>
<div class="t" style="left:10.90px;top:498.43px;font:400 9.0px/11.70px 'Liberation Sans', sans-serif;color:#333333;transform:scaleX(0.9150);transform-origin:left;">.. Custo das Quebras</div>
<svg class="r" style="left:276.70px;top:499.60px" width="12" height="11" viewBox="0 0 12 11"><circle cx="3.9" cy="3.7" r="2.75" fill="none" stroke="#7e7e7e" stroke-width="1.15"/><line x1="5.9" y1="5.8" x2="9.1" y2="8.6" stroke="#7e7e7e" stroke-width="1.25" stroke-linecap="round"/></svg>
<div class="t" style="left:336.11px;top:497.93px;font:400 9.5px/12.35px 'Liberation Sans', sans-serif;color:#333333;transform:scaleX(0.9250);transform-origin:right;">0,00</div>
<div class="t" style="left:393.40px;top:498.69px;font:400 9.5px/12.35px 'Liberation Mono', monospace;color:#333333;transform:scaleX(0.8595);transform-origin:right;">%</div>
<div class="t" style="left:375.71px;top:497.93px;font:400 9.5px/12.35px 'Liberation Sans', sans-serif;color:#333333;transform:scaleX(0.9250);transform-origin:right;">0,00</div>
<svg class="r" style="left:405.70px;top:499.60px" width="12" height="11" viewBox="0 0 12 11"><circle cx="3.9" cy="3.7" r="2.75" fill="none" stroke="#7e7e7e" stroke-width="1.15"/><line x1="5.9" y1="5.8" x2="9.1" y2="8.6" stroke="#7e7e7e" stroke-width="1.25" stroke-linecap="round"/></svg>
<div class="t" style="left:465.11px;top:497.93px;font:400 9.5px/12.35px 'Liberation Sans', sans-serif;color:#333333;transform:scaleX(0.9250);transform-origin:right;">0,00</div>
<div class="t" style="left:522.40px;top:498.69px;font:400 9.5px/12.35px 'Liberation Mono', monospace;color:#333333;transform:scaleX(0.8595);transform-origin:right;">%</div>
<div class="t" style="left:504.71px;top:497.93px;font:400 9.5px/12.35px 'Liberation Sans', sans-serif;color:#333333;transform:scaleX(0.9250);transform-origin:right;">0,00</div>
<svg class="r" style="left:534.70px;top:499.60px" width="12" height="11" viewBox="0 0 12 11"><circle cx="3.9" cy="3.7" r="2.75" fill="none" stroke="#7e7e7e" stroke-width="1.15"/><line x1="5.9" y1="5.8" x2="9.1" y2="8.6" stroke="#7e7e7e" stroke-width="1.25" stroke-linecap="round"/></svg>
<div class="t" style="left:594.11px;top:497.93px;font:400 9.5px/12.35px 'Liberation Sans', sans-serif;color:#333333;transform:scaleX(0.9250);transform-origin:right;">0,00</div>
<div class="t" style="left:651.40px;top:498.69px;font:400 9.5px/12.35px 'Liberation Mono', monospace;color:#333333;transform:scaleX(0.8595);transform-origin:right;">%</div>
<div class="t" style="left:633.71px;top:497.93px;font:400 9.5px/12.35px 'Liberation Sans', sans-serif;color:#333333;transform:scaleX(0.9250);transform-origin:right;">0,00</div>
<svg class="r" style="left:663.70px;top:499.60px" width="12" height="11" viewBox="0 0 12 11"><circle cx="3.9" cy="3.7" r="2.75" fill="none" stroke="#7e7e7e" stroke-width="1.15"/><line x1="5.9" y1="5.8" x2="9.1" y2="8.6" stroke="#7e7e7e" stroke-width="1.25" stroke-linecap="round"/></svg>
<div class="t" style="left:723.11px;top:497.93px;font:400 9.5px/12.35px 'Liberation Sans', sans-serif;color:#333333;transform:scaleX(0.9250);transform-origin:right;">0,00</div>
<div class="t" style="left:780.40px;top:498.69px;font:400 9.5px/12.35px 'Liberation Mono', monospace;color:#333333;transform:scaleX(0.8595);transform-origin:right;">%</div>
<div class="t" style="left:762.71px;top:497.93px;font:400 9.5px/12.35px 'Liberation Sans', sans-serif;color:#333333;transform:scaleX(0.9250);transform-origin:right;">0,00</div>
<svg class="r" style="left:792.70px;top:499.60px" width="12" height="11" viewBox="0 0 12 11"><circle cx="3.9" cy="3.7" r="2.75" fill="none" stroke="#7e7e7e" stroke-width="1.15"/><line x1="5.9" y1="5.8" x2="9.1" y2="8.6" stroke="#7e7e7e" stroke-width="1.25" stroke-linecap="round"/></svg>
<div class="t" style="left:852.11px;top:497.93px;font:400 9.5px/12.35px 'Liberation Sans', sans-serif;color:#333333;transform:scaleX(0.9250);transform-origin:right;">0,00</div>
<div class="t" style="left:910.40px;top:498.69px;font:400 9.5px/12.35px 'Liberation Mono', monospace;color:#333333;transform:scaleX(0.8595);transform-origin:right;">%</div>
<div class="t" style="left:892.71px;top:497.93px;font:400 9.5px/12.35px 'Liberation Sans', sans-serif;color:#333333;transform:scaleX(0.9250);transform-origin:right;">0,00</div>
<svg class="r" style="left:922.70px;top:499.60px" width="12" height="11" viewBox="0 0 12 11"><circle cx="3.9" cy="3.7" r="2.75" fill="none" stroke="#7e7e7e" stroke-width="1.15"/><line x1="5.9" y1="5.8" x2="9.1" y2="8.6" stroke="#7e7e7e" stroke-width="1.25" stroke-linecap="round"/></svg>
<div class="t" style="left:982.11px;top:497.93px;font:400 9.5px/12.35px 'Liberation Sans', sans-serif;color:#333333;transform:scaleX(0.9250);transform-origin:right;">0,00</div>
<div class="t" style="left:1039.40px;top:498.69px;font:400 9.5px/12.35px 'Liberation Mono', monospace;color:#333333;transform:scaleX(0.8595);transform-origin:right;">%</div>
<div class="t" style="left:1021.71px;top:497.93px;font:400 9.5px/12.35px 'Liberation Sans', sans-serif;color:#333333;transform:scaleX(0.9250);transform-origin:right;">0,00</div>
<svg class="r" style="left:1051.70px;top:499.60px" width="12" height="11" viewBox="0 0 12 11"><circle cx="3.9" cy="3.7" r="2.75" fill="none" stroke="#7e7e7e" stroke-width="1.15"/><line x1="5.9" y1="5.8" x2="9.1" y2="8.6" stroke="#7e7e7e" stroke-width="1.25" stroke-linecap="round"/></svg>
<div class="t" style="left:1111.11px;top:497.93px;font:400 9.5px/12.35px 'Liberation Sans', sans-serif;color:#333333;transform:scaleX(0.9250);transform-origin:right;">0,00</div>
<div class="t" style="left:1168.40px;top:498.69px;font:400 9.5px/12.35px 'Liberation Mono', monospace;color:#333333;transform:scaleX(0.8595);transform-origin:right;">%</div>
<div class="t" style="left:1150.71px;top:497.93px;font:400 9.5px/12.35px 'Liberation Sans', sans-serif;color:#333333;transform:scaleX(0.9250);transform-origin:right;">0,00</div>
<svg class="r" style="left:1181.10px;top:499.60px" width="12" height="11" viewBox="0 0 12 11"><circle cx="3.9" cy="3.7" r="2.75" fill="none" stroke="#7e7e7e" stroke-width="1.15"/><line x1="5.9" y1="5.8" x2="9.1" y2="8.6" stroke="#7e7e7e" stroke-width="1.25" stroke-linecap="round"/></svg>
<div class="t" style="left:10.90px;top:513.43px;font:400 9.0px/11.70px 'Liberation Sans', sans-serif;color:#333333;transform:scaleX(0.9150);transform-origin:left;">.. Custo das Embalagens</div>
<svg class="r" style="left:276.70px;top:514.60px" width="12" height="11" viewBox="0 0 12 11"><circle cx="3.9" cy="3.7" r="2.75" fill="none" stroke="#7e7e7e" stroke-width="1.15"/><line x1="5.9" y1="5.8" x2="9.1" y2="8.6" stroke="#7e7e7e" stroke-width="1.25" stroke-linecap="round"/></svg>
<div class="t" style="left:336.11px;top:512.93px;font:400 9.5px/12.35px 'Liberation Sans', sans-serif;color:#333333;transform:scaleX(0.9250);transform-origin:right;">0,00</div>
<div class="t" style="left:393.40px;top:513.69px;font:400 9.5px/12.35px 'Liberation Mono', monospace;color:#333333;transform:scaleX(0.8595);transform-origin:right;">%</div>
<div class="t" style="left:375.71px;top:512.93px;font:400 9.5px/12.35px 'Liberation Sans', sans-serif;color:#333333;transform:scaleX(0.9250);transform-origin:right;">0,00</div>
<svg class="r" style="left:405.70px;top:514.60px" width="12" height="11" viewBox="0 0 12 11"><circle cx="3.9" cy="3.7" r="2.75" fill="none" stroke="#7e7e7e" stroke-width="1.15"/><line x1="5.9" y1="5.8" x2="9.1" y2="8.6" stroke="#7e7e7e" stroke-width="1.25" stroke-linecap="round"/></svg>
<div class="t" style="left:465.11px;top:512.93px;font:400 9.5px/12.35px 'Liberation Sans', sans-serif;color:#333333;transform:scaleX(0.9250);transform-origin:right;">0,00</div>
<div class="t" style="left:522.40px;top:513.69px;font:400 9.5px/12.35px 'Liberation Mono', monospace;color:#333333;transform:scaleX(0.8595);transform-origin:right;">%</div>
<div class="t" style="left:504.71px;top:512.93px;font:400 9.5px/12.35px 'Liberation Sans', sans-serif;color:#333333;transform:scaleX(0.9250);transform-origin:right;">0,00</div>
<svg class="r" style="left:534.70px;top:514.60px" width="12" height="11" viewBox="0 0 12 11"><circle cx="3.9" cy="3.7" r="2.75" fill="none" stroke="#7e7e7e" stroke-width="1.15"/><line x1="5.9" y1="5.8" x2="9.1" y2="8.6" stroke="#7e7e7e" stroke-width="1.25" stroke-linecap="round"/></svg>
<div class="t" style="left:594.11px;top:512.93px;font:400 9.5px/12.35px 'Liberation Sans', sans-serif;color:#333333;transform:scaleX(0.9250);transform-origin:right;">0,00</div>
<div class="t" style="left:651.40px;top:513.69px;font:400 9.5px/12.35px 'Liberation Mono', monospace;color:#333333;transform:scaleX(0.8595);transform-origin:right;">%</div>
<div class="t" style="left:633.71px;top:512.93px;font:400 9.5px/12.35px 'Liberation Sans', sans-serif;color:#333333;transform:scaleX(0.9250);transform-origin:right;">0,00</div>
<svg class="r" style="left:663.70px;top:514.60px" width="12" height="11" viewBox="0 0 12 11"><circle cx="3.9" cy="3.7" r="2.75" fill="none" stroke="#7e7e7e" stroke-width="1.15"/><line x1="5.9" y1="5.8" x2="9.1" y2="8.6" stroke="#7e7e7e" stroke-width="1.25" stroke-linecap="round"/></svg>
<div class="t" style="left:723.11px;top:512.93px;font:400 9.5px/12.35px 'Liberation Sans', sans-serif;color:#333333;transform:scaleX(0.9250);transform-origin:right;">0,00</div>
<div class="t" style="left:780.40px;top:513.69px;font:400 9.5px/12.35px 'Liberation Mono', monospace;color:#333333;transform:scaleX(0.8595);transform-origin:right;">%</div>
<div class="t" style="left:762.71px;top:512.93px;font:400 9.5px/12.35px 'Liberation Sans', sans-serif;color:#333333;transform:scaleX(0.9250);transform-origin:right;">0,00</div>
<svg class="r" style="left:792.70px;top:514.60px" width="12" height="11" viewBox="0 0 12 11"><circle cx="3.9" cy="3.7" r="2.75" fill="none" stroke="#7e7e7e" stroke-width="1.15"/><line x1="5.9" y1="5.8" x2="9.1" y2="8.6" stroke="#7e7e7e" stroke-width="1.25" stroke-linecap="round"/></svg>
<div class="t" style="left:852.11px;top:512.93px;font:400 9.5px/12.35px 'Liberation Sans', sans-serif;color:#333333;transform:scaleX(0.9250);transform-origin:right;">0,00</div>
<div class="t" style="left:910.40px;top:513.69px;font:400 9.5px/12.35px 'Liberation Mono', monospace;color:#333333;transform:scaleX(0.8595);transform-origin:right;">%</div>
<div class="t" style="left:892.71px;top:512.93px;font:400 9.5px/12.35px 'Liberation Sans', sans-serif;color:#333333;transform:scaleX(0.9250);transform-origin:right;">0,00</div>
<svg class="r" style="left:922.70px;top:514.60px" width="12" height="11" viewBox="0 0 12 11"><circle cx="3.9" cy="3.7" r="2.75" fill="none" stroke="#7e7e7e" stroke-width="1.15"/><line x1="5.9" y1="5.8" x2="9.1" y2="8.6" stroke="#7e7e7e" stroke-width="1.25" stroke-linecap="round"/></svg>
<div class="t" style="left:982.11px;top:512.93px;font:400 9.5px/12.35px 'Liberation Sans', sans-serif;color:#333333;transform:scaleX(0.9250);transform-origin:right;">0,00</div>
<div class="t" style="left:1039.40px;top:513.69px;font:400 9.5px/12.35px 'Liberation Mono', monospace;color:#333333;transform:scaleX(0.8595);transform-origin:right;">%</div>
<div class="t" style="left:1021.71px;top:512.93px;font:400 9.5px/12.35px 'Liberation Sans', sans-serif;color:#333333;transform:scaleX(0.9250);transform-origin:right;">0,00</div>
<svg class="r" style="left:1051.70px;top:514.60px" width="12" height="11" viewBox="0 0 12 11"><circle cx="3.9" cy="3.7" r="2.75" fill="none" stroke="#7e7e7e" stroke-width="1.15"/><line x1="5.9" y1="5.8" x2="9.1" y2="8.6" stroke="#7e7e7e" stroke-width="1.25" stroke-linecap="round"/></svg>
<div class="t" style="left:1111.11px;top:512.93px;font:400 9.5px/12.35px 'Liberation Sans', sans-serif;color:#333333;transform:scaleX(0.9250);transform-origin:right;">0,00</div>
<div class="t" style="left:1168.40px;top:513.69px;font:400 9.5px/12.35px 'Liberation Mono', monospace;color:#333333;transform:scaleX(0.8595);transform-origin:right;">%</div>
<div class="t" style="left:1150.71px;top:512.93px;font:400 9.5px/12.35px 'Liberation Sans', sans-serif;color:#333333;transform:scaleX(0.9250);transform-origin:right;">0,00</div>
<svg class="r" style="left:1181.10px;top:514.60px" width="12" height="11" viewBox="0 0 12 11"><circle cx="3.9" cy="3.7" r="2.75" fill="none" stroke="#7e7e7e" stroke-width="1.15"/><line x1="5.9" y1="5.8" x2="9.1" y2="8.6" stroke="#7e7e7e" stroke-width="1.25" stroke-linecap="round"/></svg>
<div class="t" style="left:10.90px;top:528.43px;font:400 9.0px/11.70px 'Liberation Sans', sans-serif;color:#333333;transform:scaleX(0.9150);transform-origin:left;">.. Estoque Inicial do Período de Apuração</div>
<svg class="r" style="left:276.70px;top:529.60px" width="12" height="11" viewBox="0 0 12 11"><circle cx="3.9" cy="3.7" r="2.75" fill="none" stroke="#7e7e7e" stroke-width="1.15"/><line x1="5.9" y1="5.8" x2="9.1" y2="8.6" stroke="#7e7e7e" stroke-width="1.25" stroke-linecap="round"/></svg>
<div class="t" style="left:287.52px;top:527.93px;font:400 9.5px/12.35px 'Liberation Sans', sans-serif;color:#333333;transform:scaleX(0.9250);transform-origin:right;">(85.164.335,68)</div>
<div class="t" style="left:395.94px;top:527.93px;font:400 9.5px/12.35px 'Liberation Sans', sans-serif;color:#333333;transform:scaleX(0.9250);transform-origin:right;">)</div>
<div class="t" style="left:390.47px;top:528.69px;font:400 9.5px/12.35px 'Liberation Mono', monospace;color:#333333;transform:scaleX(0.8595);transform-origin:right;">%</div>
<div class="t" style="left:359.05px;top:527.93px;font:400 9.5px/12.35px 'Liberation Sans', sans-serif;color:#333333;transform:scaleX(0.9250);transform-origin:right;">(191,21</div>
<svg class="r" style="left:405.70px;top:529.60px" width="12" height="11" viewBox="0 0 12 11"><circle cx="3.9" cy="3.7" r="2.75" fill="none" stroke="#7e7e7e" stroke-width="1.15"/><line x1="5.9" y1="5.8" x2="9.1" y2="8.6" stroke="#7e7e7e" stroke-width="1.25" stroke-linecap="round"/></svg>
<div class="t" style="left:416.52px;top:527.93px;font:400 9.5px/12.35px 'Liberation Sans', sans-serif;color:#333333;transform:scaleX(0.9250);transform-origin:right;">(84.256.603,07)</div>
<div class="t" style="left:524.94px;top:527.93px;font:400 9.5px/12.35px 'Liberation Sans', sans-serif;color:#333333;transform:scaleX(0.9250);transform-origin:right;">)</div>
<div class="t" style="left:519.47px;top:528.69px;font:400 9.5px/12.35px 'Liberation Mono', monospace;color:#333333;transform:scaleX(0.8595);transform-origin:right;">%</div>
<div class="t" style="left:488.05px;top:527.93px;font:400 9.5px/12.35px 'Liberation Sans', sans-serif;color:#333333;transform:scaleX(0.9250);transform-origin:right;">(184,02</div>
<svg class="r" style="left:534.70px;top:529.60px" width="12" height="11" viewBox="0 0 12 11"><circle cx="3.9" cy="3.7" r="2.75" fill="none" stroke="#7e7e7e" stroke-width="1.15"/><line x1="5.9" y1="5.8" x2="9.1" y2="8.6" stroke="#7e7e7e" stroke-width="1.25" stroke-linecap="round"/></svg>
<div class="t" style="left:545.52px;top:527.93px;font:400 9.5px/12.35px 'Liberation Sans', sans-serif;color:#333333;transform:scaleX(0.9250);transform-origin:right;">(86.180.296,45)</div>
<div class="t" style="left:653.94px;top:527.93px;font:400 9.5px/12.35px 'Liberation Sans', sans-serif;color:#333333;transform:scaleX(0.9250);transform-origin:right;">)</div>
<div class="t" style="left:648.47px;top:528.69px;font:400 9.5px/12.35px 'Liberation Mono', monospace;color:#333333;transform:scaleX(0.8595);transform-origin:right;">%</div>
<div class="t" style="left:617.05px;top:527.93px;font:400 9.5px/12.35px 'Liberation Sans', sans-serif;color:#333333;transform:scaleX(0.9250);transform-origin:right;">(172,87</div>
<svg class="r" style="left:663.70px;top:529.60px" width="12" height="11" viewBox="0 0 12 11"><circle cx="3.9" cy="3.7" r="2.75" fill="none" stroke="#7e7e7e" stroke-width="1.15"/><line x1="5.9" y1="5.8" x2="9.1" y2="8.6" stroke="#7e7e7e" stroke-width="1.25" stroke-linecap="round"/></svg>
<div class="t" style="left:674.52px;top:527.93px;font:400 9.5px/12.35px 'Liberation Sans', sans-serif;color:#333333;transform:scaleX(0.9250);transform-origin:right;">(83.856.650,02)</div>
<div class="t" style="left:782.94px;top:527.93px;font:400 9.5px/12.35px 'Liberation Sans', sans-serif;color:#333333;transform:scaleX(0.9250);transform-origin:right;">)</div>
<div class="t" style="left:777.47px;top:528.69px;font:400 9.5px/12.35px 'Liberation Mono', monospace;color:#333333;transform:scaleX(0.8595);transform-origin:right;">%</div>
<div class="t" style="left:746.05px;top:527.93px;font:400 9.5px/12.35px 'Liberation Sans', sans-serif;color:#333333;transform:scaleX(0.9250);transform-origin:right;">(182,41</div>
<svg class="r" style="left:792.70px;top:529.60px" width="12" height="11" viewBox="0 0 12 11"><circle cx="3.9" cy="3.7" r="2.75" fill="none" stroke="#7e7e7e" stroke-width="1.15"/><line x1="5.9" y1="5.8" x2="9.1" y2="8.6" stroke="#7e7e7e" stroke-width="1.25" stroke-linecap="round"/></svg>
<div class="t" style="left:803.52px;top:527.93px;font:400 9.5px/12.35px 'Liberation Sans', sans-serif;color:#333333;transform:scaleX(0.9250);transform-origin:right;">(87.051.217,74)</div>
<div class="t" style="left:912.94px;top:527.93px;font:400 9.5px/12.35px 'Liberation Sans', sans-serif;color:#333333;transform:scaleX(0.9250);transform-origin:right;">)</div>
<div class="t" style="left:907.47px;top:528.69px;font:400 9.5px/12.35px 'Liberation Mono', monospace;color:#333333;transform:scaleX(0.8595);transform-origin:right;">%</div>
<div class="t" style="left:876.05px;top:527.93px;font:400 9.5px/12.35px 'Liberation Sans', sans-serif;color:#333333;transform:scaleX(0.9250);transform-origin:right;">(170,66</div>
<svg class="r" style="left:922.70px;top:529.60px" width="12" height="11" viewBox="0 0 12 11"><circle cx="3.9" cy="3.7" r="2.75" fill="none" stroke="#7e7e7e" stroke-width="1.15"/><line x1="5.9" y1="5.8" x2="9.1" y2="8.6" stroke="#7e7e7e" stroke-width="1.25" stroke-linecap="round"/></svg>
<div class="t" style="left:933.52px;top:527.93px;font:400 9.5px/12.35px 'Liberation Sans', sans-serif;color:#333333;transform:scaleX(0.9250);transform-origin:right;">(88.353.288,00)</div>
<div class="t" style="left:1041.94px;top:527.93px;font:400 9.5px/12.35px 'Liberation Sans', sans-serif;color:#333333;transform:scaleX(0.9250);transform-origin:right;">)</div>
<div class="t" style="left:1036.47px;top:528.69px;font:400 9.5px/12.35px 'Liberation Mono', monospace;color:#333333;transform:scaleX(0.8595);transform-origin:right;">%</div>
<div class="t" style="left:1005.05px;top:527.93px;font:400 9.5px/12.35px 'Liberation Sans', sans-serif;color:#333333;transform:scaleX(0.9250);transform-origin:right;">(181,72</div>
<svg class="r" style="left:1051.70px;top:529.60px" width="12" height="11" viewBox="0 0 12 11"><circle cx="3.9" cy="3.7" r="2.75" fill="none" stroke="#7e7e7e" stroke-width="1.15"/><line x1="5.9" y1="5.8" x2="9.1" y2="8.6" stroke="#7e7e7e" stroke-width="1.25" stroke-linecap="round"/></svg>
<div class="t" style="left:1062.52px;top:527.93px;font:400 9.5px/12.35px 'Liberation Sans', sans-serif;color:#333333;transform:scaleX(0.9250);transform-origin:right;">(85.022.867,23)</div>
<div class="t" style="left:1170.94px;top:527.93px;font:400 9.5px/12.35px 'Liberation Sans', sans-serif;color:#333333;transform:scaleX(0.9250);transform-origin:right;">)</div>
<div class="t" style="left:1165.47px;top:528.69px;font:400 9.5px/12.35px 'Liberation Mono', monospace;color:#333333;transform:scaleX(0.8595);transform-origin:right;">%</div>
<div class="t" style="left:1134.05px;top:527.93px;font:400 9.5px/12.35px 'Liberation Sans', sans-serif;color:#333333;transform:scaleX(0.9250);transform-origin:right;">(169,56</div>
<svg class="r" style="left:1181.10px;top:529.60px" width="12" height="11" viewBox="0 0 12 11"><circle cx="3.9" cy="3.7" r="2.75" fill="none" stroke="#7e7e7e" stroke-width="1.15"/><line x1="5.9" y1="5.8" x2="9.1" y2="8.6" stroke="#7e7e7e" stroke-width="1.25" stroke-linecap="round"/></svg>
<div class="t" style="left:1196.50px;top:529.15px;font:400 9.0px/11.70px 'Liberation Mono', monospace;color:#333333;transform:scaleX(0.8000);transform-origin:left;">(</div>
<div class="t" style="left:10.90px;top:543.43px;font:400 9.0px/11.70px 'Liberation Sans', sans-serif;color:#333333;transform:scaleX(0.9150);transform-origin:left;">.. Compra de Mercadorias</div>
<svg class="r" style="left:276.70px;top:544.60px" width="12" height="11" viewBox="0 0 12 11"><circle cx="3.9" cy="3.7" r="2.75" fill="none" stroke="#7e7e7e" stroke-width="1.15"/><line x1="5.9" y1="5.8" x2="9.1" y2="8.6" stroke="#7e7e7e" stroke-width="1.25" stroke-linecap="round"/></svg>
<div class="t" style="left:287.52px;top:542.93px;font:400 9.5px/12.35px 'Liberation Sans', sans-serif;color:#333333;transform:scaleX(0.9250);transform-origin:right;">(35.574.502,72)</div>
<div class="t" style="left:395.94px;top:542.93px;font:400 9.5px/12.35px 'Liberation Sans', sans-serif;color:#333333;transform:scaleX(0.9250);transform-origin:right;">)</div>
<div class="t" style="left:390.47px;top:543.69px;font:400 9.5px/12.35px 'Liberation Mono', monospace;color:#333333;transform:scaleX(0.8595);transform-origin:right;">%</div>
<div class="t" style="left:364.34px;top:542.93px;font:400 9.5px/12.35px 'Liberation Sans', sans-serif;color:#333333;transform:scaleX(0.9250);transform-origin:right;">(79,87</div>
<svg class="r" style="left:405.70px;top:544.60px" width="12" height="11" viewBox="0 0 12 11"><circle cx="3.9" cy="3.7" r="2.75" fill="none" stroke="#7e7e7e" stroke-width="1.15"/><line x1="5.9" y1="5.8" x2="9.1" y2="8.6" stroke="#7e7e7e" stroke-width="1.25" stroke-linecap="round"/></svg>
<div class="t" style="left:416.52px;top:542.93px;font:400 9.5px/12.35px 'Liberation Sans', sans-serif;color:#333333;transform:scaleX(0.9250);transform-origin:right;">(39.572.540,73)</div>
<div class="t" style="left:524.94px;top:542.93px;font:400 9.5px/12.35px 'Liberation Sans', sans-serif;color:#333333;transform:scaleX(0.9250);transform-origin:right;">)</div>
<div class="t" style="left:519.47px;top:543.69px;font:400 9.5px/12.35px 'Liberation Mono', monospace;color:#333333;transform:scaleX(0.8595);transform-origin:right;">%</div>
<div class="t" style="left:493.34px;top:542.93px;font:400 9.5px/12.35px 'Liberation Sans', sans-serif;color:#333333;transform:scaleX(0.9250);transform-origin:right;">(86,43</div>
<svg class="r" style="left:534.70px;top:544.60px" width="12" height="11" viewBox="0 0 12 11"><circle cx="3.9" cy="3.7" r="2.75" fill="none" stroke="#7e7e7e" stroke-width="1.15"/><line x1="5.9" y1="5.8" x2="9.1" y2="8.6" stroke="#7e7e7e" stroke-width="1.25" stroke-linecap="round"/></svg>
<div class="t" style="left:545.52px;top:542.93px;font:400 9.5px/12.35px 'Liberation Sans', sans-serif;color:#333333;transform:scaleX(0.9250);transform-origin:right;">(38.589.170,16)</div>
<div class="t" style="left:653.94px;top:542.93px;font:400 9.5px/12.35px 'Liberation Sans', sans-serif;color:#333333;transform:scaleX(0.9250);transform-origin:right;">)</div>
<div class="t" style="left:648.47px;top:543.69px;font:400 9.5px/12.35px 'Liberation Mono', monospace;color:#333333;transform:scaleX(0.8595);transform-origin:right;">%</div>
<div class="t" style="left:622.34px;top:542.93px;font:400 9.5px/12.35px 'Liberation Sans', sans-serif;color:#333333;transform:scaleX(0.9250);transform-origin:right;">(77,41</div>
<svg class="r" style="left:663.70px;top:544.60px" width="12" height="11" viewBox="0 0 12 11"><circle cx="3.9" cy="3.7" r="2.75" fill="none" stroke="#7e7e7e" stroke-width="1.15"/><line x1="5.9" y1="5.8" x2="9.1" y2="8.6" stroke="#7e7e7e" stroke-width="1.25" stroke-linecap="round"/></svg>
<div class="t" style="left:674.52px;top:542.93px;font:400 9.5px/12.35px 'Liberation Sans', sans-serif;color:#333333;transform:scaleX(0.9250);transform-origin:right;">(40.755.496,95)</div>
<div class="t" style="left:782.94px;top:542.93px;font:400 9.5px/12.35px 'Liberation Sans', sans-serif;color:#333333;transform:scaleX(0.9250);transform-origin:right;">)</div>
<div class="t" style="left:777.47px;top:543.69px;font:400 9.5px/12.35px 'Liberation Mono', monospace;color:#333333;transform:scaleX(0.8595);transform-origin:right;">%</div>
<div class="t" style="left:751.34px;top:542.93px;font:400 9.5px/12.35px 'Liberation Sans', sans-serif;color:#333333;transform:scaleX(0.9250);transform-origin:right;">(88,65</div>
<svg class="r" style="left:792.70px;top:544.60px" width="12" height="11" viewBox="0 0 12 11"><circle cx="3.9" cy="3.7" r="2.75" fill="none" stroke="#7e7e7e" stroke-width="1.15"/><line x1="5.9" y1="5.8" x2="9.1" y2="8.6" stroke="#7e7e7e" stroke-width="1.25" stroke-linecap="round"/></svg>
<div class="t" style="left:803.52px;top:542.93px;font:400 9.5px/12.35px 'Liberation Sans', sans-serif;color:#333333;transform:scaleX(0.9250);transform-origin:right;">(43.356.096,07)</div>
<div class="t" style="left:912.94px;top:542.93px;font:400 9.5px/12.35px 'Liberation Sans', sans-serif;color:#333333;transform:scaleX(0.9250);transform-origin:right;">)</div>
<div class="t" style="left:907.47px;top:543.69px;font:400 9.5px/12.35px 'Liberation Mono', monospace;color:#333333;transform:scaleX(0.8595);transform-origin:right;">%</div>
<div class="t" style="left:881.34px;top:542.93px;font:400 9.5px/12.35px 'Liberation Sans', sans-serif;color:#333333;transform:scaleX(0.9250);transform-origin:right;">(85,00</div>
<svg class="r" style="left:922.70px;top:544.60px" width="12" height="11" viewBox="0 0 12 11"><circle cx="3.9" cy="3.7" r="2.75" fill="none" stroke="#7e7e7e" stroke-width="1.15"/><line x1="5.9" y1="5.8" x2="9.1" y2="8.6" stroke="#7e7e7e" stroke-width="1.25" stroke-linecap="round"/></svg>
<div class="t" style="left:933.52px;top:542.93px;font:400 9.5px/12.35px 'Liberation Sans', sans-serif;color:#333333;transform:scaleX(0.9250);transform-origin:right;">(36.904.081,65)</div>
<div class="t" style="left:1041.94px;top:542.93px;font:400 9.5px/12.35px 'Liberation Sans', sans-serif;color:#333333;transform:scaleX(0.9250);transform-origin:right;">)</div>
<div class="t" style="left:1036.47px;top:543.69px;font:400 9.5px/12.35px 'Liberation Mono', monospace;color:#333333;transform:scaleX(0.8595);transform-origin:right;">%</div>
<div class="t" style="left:1010.34px;top:542.93px;font:400 9.5px/12.35px 'Liberation Sans', sans-serif;color:#333333;transform:scaleX(0.9250);transform-origin:right;">(75,90</div>
<svg class="r" style="left:1051.70px;top:544.60px" width="12" height="11" viewBox="0 0 12 11"><circle cx="3.9" cy="3.7" r="2.75" fill="none" stroke="#7e7e7e" stroke-width="1.15"/><line x1="5.9" y1="5.8" x2="9.1" y2="8.6" stroke="#7e7e7e" stroke-width="1.25" stroke-linecap="round"/></svg>
<div class="t" style="left:1062.52px;top:542.93px;font:400 9.5px/12.35px 'Liberation Sans', sans-serif;color:#333333;transform:scaleX(0.9250);transform-origin:right;">(43.700.621,92)</div>
<div class="t" style="left:1170.94px;top:542.93px;font:400 9.5px/12.35px 'Liberation Sans', sans-serif;color:#333333;transform:scaleX(0.9250);transform-origin:right;">)</div>
<div class="t" style="left:1165.47px;top:543.69px;font:400 9.5px/12.35px 'Liberation Mono', monospace;color:#333333;transform:scaleX(0.8595);transform-origin:right;">%</div>
<div class="t" style="left:1139.34px;top:542.93px;font:400 9.5px/12.35px 'Liberation Sans', sans-serif;color:#333333;transform:scaleX(0.9250);transform-origin:right;">(87,15</div>
<svg class="r" style="left:1181.10px;top:544.60px" width="12" height="11" viewBox="0 0 12 11"><circle cx="3.9" cy="3.7" r="2.75" fill="none" stroke="#7e7e7e" stroke-width="1.15"/><line x1="5.9" y1="5.8" x2="9.1" y2="8.6" stroke="#7e7e7e" stroke-width="1.25" stroke-linecap="round"/></svg>
<div class="t" style="left:1196.50px;top:544.15px;font:400 9.0px/11.70px 'Liberation Mono', monospace;color:#333333;transform:scaleX(0.8000);transform-origin:left;">(</div>
<div class="t" style="left:10.90px;top:558.43px;font:400 9.0px/11.70px 'Liberation Sans', sans-serif;color:#333333;transform:scaleX(0.9150);transform-origin:left;">.. Estoque Final do Período de Apuração</div>
<svg class="r" style="left:276.70px;top:559.60px" width="12" height="11" viewBox="0 0 12 11"><circle cx="3.9" cy="3.7" r="2.75" fill="none" stroke="#7e7e7e" stroke-width="1.15"/><line x1="5.9" y1="5.8" x2="9.1" y2="8.6" stroke="#7e7e7e" stroke-width="1.25" stroke-linecap="round"/></svg>
<div class="t" style="left:293.85px;top:557.93px;font:400 9.5px/12.35px 'Liberation Sans', sans-serif;color:#333333;transform:scaleX(0.9250);transform-origin:right;">84.256.603,07</div>
<div class="t" style="left:393.40px;top:558.69px;font:400 9.5px/12.35px 'Liberation Mono', monospace;color:#333333;transform:scaleX(0.8595);transform-origin:right;">%</div>
<div class="t" style="left:365.14px;top:557.93px;font:400 9.5px/12.35px 'Liberation Sans', sans-serif;color:#333333;transform:scaleX(0.9250);transform-origin:right;">189,17</div>
<svg class="r" style="left:405.70px;top:559.60px" width="12" height="11" viewBox="0 0 12 11"><circle cx="3.9" cy="3.7" r="2.75" fill="none" stroke="#7e7e7e" stroke-width="1.15"/><line x1="5.9" y1="5.8" x2="9.1" y2="8.6" stroke="#7e7e7e" stroke-width="1.25" stroke-linecap="round"/></svg>
<div class="t" style="left:422.85px;top:557.93px;font:400 9.5px/12.35px 'Liberation Sans', sans-serif;color:#333333;transform:scaleX(0.9250);transform-origin:right;">86.180.296,45</div>
<div class="t" style="left:522.40px;top:558.69px;font:400 9.5px/12.35px 'Liberation Mono', monospace;color:#333333;transform:scaleX(0.8595);transform-origin:right;">%</div>
<div class="t" style="left:494.14px;top:557.93px;font:400 9.5px/12.35px 'Liberation Sans', sans-serif;color:#333333;transform:scaleX(0.9250);transform-origin:right;">188,22</div>
<svg class="r" style="left:534.70px;top:559.60px" width="12" height="11" viewBox="0 0 12 11"><circle cx="3.9" cy="3.7" r="2.75" fill="none" stroke="#7e7e7e" stroke-width="1.15"/><line x1="5.9" y1="5.8" x2="9.1" y2="8.6" stroke="#7e7e7e" stroke-width="1.25" stroke-linecap="round"/></svg>
<div class="t" style="left:551.85px;top:557.93px;font:400 9.5px/12.35px 'Liberation Sans', sans-serif;color:#333333;transform:scaleX(0.9250);transform-origin:right;">83.856.650,02</div>
<div class="t" style="left:651.40px;top:558.69px;font:400 9.5px/12.35px 'Liberation Mono', monospace;color:#333333;transform:scaleX(0.8595);transform-origin:right;">%</div>
<div class="t" style="left:623.14px;top:557.93px;font:400 9.5px/12.35px 'Liberation Sans', sans-serif;color:#333333;transform:scaleX(0.9250);transform-origin:right;">168,21</div>
<svg class="r" style="left:663.70px;top:559.60px" width="12" height="11" viewBox="0 0 12 11"><circle cx="3.9" cy="3.7" r="2.75" fill="none" stroke="#7e7e7e" stroke-width="1.15"/><line x1="5.9" y1="5.8" x2="9.1" y2="8.6" stroke="#7e7e7e" stroke-width="1.25" stroke-linecap="round"/></svg>
<div class="t" style="left:680.85px;top:557.93px;font:400 9.5px/12.35px 'Liberation Sans', sans-serif;color:#333333;transform:scaleX(0.9250);transform-origin:right;">87.051.217,74</div>
<div class="t" style="left:780.40px;top:558.69px;font:400 9.5px/12.35px 'Liberation Mono', monospace;color:#333333;transform:scaleX(0.8595);transform-origin:right;">%</div>
<div class="t" style="left:752.14px;top:557.93px;font:400 9.5px/12.35px 'Liberation Sans', sans-serif;color:#333333;transform:scaleX(0.9250);transform-origin:right;">189,36</div>
<svg class="r" style="left:792.70px;top:559.60px" width="12" height="11" viewBox="0 0 12 11"><circle cx="3.9" cy="3.7" r="2.75" fill="none" stroke="#7e7e7e" stroke-width="1.15"/><line x1="5.9" y1="5.8" x2="9.1" y2="8.6" stroke="#7e7e7e" stroke-width="1.25" stroke-linecap="round"/></svg>
<div class="t" style="left:809.85px;top:557.93px;font:400 9.5px/12.35px 'Liberation Sans', sans-serif;color:#333333;transform:scaleX(0.9250);transform-origin:right;">88.353.288,00</div>
<div class="t" style="left:910.40px;top:558.69px;font:400 9.5px/12.35px 'Liberation Mono', monospace;color:#333333;transform:scaleX(0.8595);transform-origin:right;">%</div>
<div class="t" style="left:882.14px;top:557.93px;font:400 9.5px/12.35px 'Liberation Sans', sans-serif;color:#333333;transform:scaleX(0.9250);transform-origin:right;">173,21</div>
<svg class="r" style="left:922.70px;top:559.60px" width="12" height="11" viewBox="0 0 12 11"><circle cx="3.9" cy="3.7" r="2.75" fill="none" stroke="#7e7e7e" stroke-width="1.15"/><line x1="5.9" y1="5.8" x2="9.1" y2="8.6" stroke="#7e7e7e" stroke-width="1.25" stroke-linecap="round"/></svg>
<div class="t" style="left:939.85px;top:557.93px;font:400 9.5px/12.35px 'Liberation Sans', sans-serif;color:#333333;transform:scaleX(0.9250);transform-origin:right;">85.022.867,23</div>
<div class="t" style="left:1039.40px;top:558.69px;font:400 9.5px/12.35px 'Liberation Mono', monospace;color:#333333;transform:scaleX(0.8595);transform-origin:right;">%</div>
<div class="t" style="left:1011.14px;top:557.93px;font:400 9.5px/12.35px 'Liberation Sans', sans-serif;color:#333333;transform:scaleX(0.9250);transform-origin:right;">174,87</div>
<svg class="r" style="left:1051.70px;top:559.60px" width="12" height="11" viewBox="0 0 12 11"><circle cx="3.9" cy="3.7" r="2.75" fill="none" stroke="#7e7e7e" stroke-width="1.15"/><line x1="5.9" y1="5.8" x2="9.1" y2="8.6" stroke="#7e7e7e" stroke-width="1.25" stroke-linecap="round"/></svg>
<div class="t" style="left:1068.85px;top:557.93px;font:400 9.5px/12.35px 'Liberation Sans', sans-serif;color:#333333;transform:scaleX(0.9250);transform-origin:right;">86.947.337,88</div>
<div class="t" style="left:1168.40px;top:558.69px;font:400 9.5px/12.35px 'Liberation Mono', monospace;color:#333333;transform:scaleX(0.8595);transform-origin:right;">%</div>
<div class="t" style="left:1140.14px;top:557.93px;font:400 9.5px/12.35px 'Liberation Sans', sans-serif;color:#333333;transform:scaleX(0.9250);transform-origin:right;">173,39</div>
<svg class="r" style="left:1181.10px;top:559.60px" width="12" height="11" viewBox="0 0 12 11"><circle cx="3.9" cy="3.7" r="2.75" fill="none" stroke="#7e7e7e" stroke-width="1.15"/><line x1="5.9" y1="5.8" x2="9.1" y2="8.6" stroke="#7e7e7e" stroke-width="1.25" stroke-linecap="round"/></svg>
<div class="t" style="left:10.90px;top:573.43px;font:400 9.0px/11.70px 'Liberation Sans', sans-serif;color:#333333;transform:scaleX(0.9150);transform-origin:left;">.. (-) Dev. de Compras</div>
<svg class="r" style="left:276.70px;top:574.60px" width="12" height="11" viewBox="0 0 12 11"><circle cx="3.9" cy="3.7" r="2.75" fill="none" stroke="#7e7e7e" stroke-width="1.15"/><line x1="5.9" y1="5.8" x2="9.1" y2="8.6" stroke="#7e7e7e" stroke-width="1.25" stroke-linecap="round"/></svg>
<div class="t" style="left:307.05px;top:572.93px;font:400 9.5px/12.35px 'Liberation Sans', sans-serif;color:#333333;transform:scaleX(0.9250);transform-origin:right;">354.727,02</div>
<div class="t" style="left:393.40px;top:573.69px;font:400 9.5px/12.35px 'Liberation Mono', monospace;color:#333333;transform:scaleX(0.8595);transform-origin:right;">%</div>
<div class="t" style="left:375.71px;top:572.93px;font:400 9.5px/12.35px 'Liberation Sans', sans-serif;color:#333333;transform:scaleX(0.9250);transform-origin:right;">0,80</div>
<svg class="r" style="left:405.70px;top:574.60px" width="12" height="11" viewBox="0 0 12 11"><circle cx="3.9" cy="3.7" r="2.75" fill="none" stroke="#7e7e7e" stroke-width="1.15"/><line x1="5.9" y1="5.8" x2="9.1" y2="8.6" stroke="#7e7e7e" stroke-width="1.25" stroke-linecap="round"/></svg>
<div class="t" style="left:436.05px;top:572.93px;font:400 9.5px/12.35px 'Liberation Sans', sans-serif;color:#333333;transform:scaleX(0.9250);transform-origin:right;">202.105,65</div>
<div class="t" style="left:522.40px;top:573.69px;font:400 9.5px/12.35px 'Liberation Mono', monospace;color:#333333;transform:scaleX(0.8595);transform-origin:right;">%</div>
<div class="t" style="left:504.71px;top:572.93px;font:400 9.5px/12.35px 'Liberation Sans', sans-serif;color:#333333;transform:scaleX(0.9250);transform-origin:right;">0,44</div>
<svg class="r" style="left:534.70px;top:574.60px" width="12" height="11" viewBox="0 0 12 11"><circle cx="3.9" cy="3.7" r="2.75" fill="none" stroke="#7e7e7e" stroke-width="1.15"/><line x1="5.9" y1="5.8" x2="9.1" y2="8.6" stroke="#7e7e7e" stroke-width="1.25" stroke-linecap="round"/></svg>
<div class="t" style="left:565.05px;top:572.93px;font:400 9.5px/12.35px 'Liberation Sans', sans-serif;color:#333333;transform:scaleX(0.9250);transform-origin:right;">153.386,62</div>
<div class="t" style="left:651.40px;top:573.69px;font:400 9.5px/12.35px 'Liberation Mono', monospace;color:#333333;transform:scaleX(0.8595);transform-origin:right;">%</div>
<div class="t" style="left:633.71px;top:572.93px;font:400 9.5px/12.35px 'Liberation Sans', sans-serif;color:#333333;transform:scaleX(0.9250);transform-origin:right;">0,31</div>
<svg class="r" style="left:663.70px;top:574.60px" width="12" height="11" viewBox="0 0 12 11"><circle cx="3.9" cy="3.7" r="2.75" fill="none" stroke="#7e7e7e" stroke-width="1.15"/><line x1="5.9" y1="5.8" x2="9.1" y2="8.6" stroke="#7e7e7e" stroke-width="1.25" stroke-linecap="round"/></svg>
<div class="t" style="left:694.05px;top:572.93px;font:400 9.5px/12.35px 'Liberation Sans', sans-serif;color:#333333;transform:scaleX(0.9250);transform-origin:right;">223.678,07</div>
<div class="t" style="left:780.40px;top:573.69px;font:400 9.5px/12.35px 'Liberation Mono', monospace;color:#333333;transform:scaleX(0.8595);transform-origin:right;">%</div>
<div class="t" style="left:762.71px;top:572.93px;font:400 9.5px/12.35px 'Liberation Sans', sans-serif;color:#333333;transform:scaleX(0.9250);transform-origin:right;">0,49</div>
<svg class="r" style="left:792.70px;top:574.60px" width="12" height="11" viewBox="0 0 12 11"><circle cx="3.9" cy="3.7" r="2.75" fill="none" stroke="#7e7e7e" stroke-width="1.15"/><line x1="5.9" y1="5.8" x2="9.1" y2="8.6" stroke="#7e7e7e" stroke-width="1.25" stroke-linecap="round"/></svg>
<div class="t" style="left:823.05px;top:572.93px;font:400 9.5px/12.35px 'Liberation Sans', sans-serif;color:#333333;transform:scaleX(0.9250);transform-origin:right;">267.645,33</div>
<div class="t" style="left:910.40px;top:573.69px;font:400 9.5px/12.35px 'Liberation Mono', monospace;color:#333333;transform:scaleX(0.8595);transform-origin:right;">%</div>
<div class="t" style="left:892.71px;top:572.93px;font:400 9.5px/12.35px 'Liberation Sans', sans-serif;color:#333333;transform:scaleX(0.9250);transform-origin:right;">0,52</div>
<svg class="r" style="left:922.70px;top:574.60px" width="12" height="11" viewBox="0 0 12 11"><circle cx="3.9" cy="3.7" r="2.75" fill="none" stroke="#7e7e7e" stroke-width="1.15"/><line x1="5.9" y1="5.8" x2="9.1" y2="8.6" stroke="#7e7e7e" stroke-width="1.25" stroke-linecap="round"/></svg>
<div class="t" style="left:953.05px;top:572.93px;font:400 9.5px/12.35px 'Liberation Sans', sans-serif;color:#333333;transform:scaleX(0.9250);transform-origin:right;">251.218,09</div>
<div class="t" style="left:1039.40px;top:573.69px;font:400 9.5px/12.35px 'Liberation Mono', monospace;color:#333333;transform:scaleX(0.8595);transform-origin:right;">%</div>
<div class="t" style="left:1021.71px;top:572.93px;font:400 9.5px/12.35px 'Liberation Sans', sans-serif;color:#333333;transform:scaleX(0.9250);transform-origin:right;">0,52</div>
<svg class="r" style="left:1051.70px;top:574.60px" width="12" height="11" viewBox="0 0 12 11"><circle cx="3.9" cy="3.7" r="2.75" fill="none" stroke="#7e7e7e" stroke-width="1.15"/><line x1="5.9" y1="5.8" x2="9.1" y2="8.6" stroke="#7e7e7e" stroke-width="1.25" stroke-linecap="round"/></svg>
<div class="t" style="left:1082.05px;top:572.93px;font:400 9.5px/12.35px 'Liberation Sans', sans-serif;color:#333333;transform:scaleX(0.9250);transform-origin:right;">287.141,94</div>
<div class="t" style="left:1168.40px;top:573.69px;font:400 9.5px/12.35px 'Liberation Mono', monospace;color:#333333;transform:scaleX(0.8595);transform-origin:right;">%</div>
<div class="t" style="left:1150.71px;top:572.93px;font:400 9.5px/12.35px 'Liberation Sans', sans-serif;color:#333333;transform:scaleX(0.9250);transform-origin:right;">0,57</div>
<svg class="r" style="left:1181.10px;top:574.60px" width="12" height="11" viewBox="0 0 12 11"><circle cx="3.9" cy="3.7" r="2.75" fill="none" stroke="#7e7e7e" stroke-width="1.15"/><line x1="5.9" y1="5.8" x2="9.1" y2="8.6" stroke="#7e7e7e" stroke-width="1.25" stroke-linecap="round"/></svg>
<div class="t" style="left:10.90px;top:588.43px;font:400 9.0px/11.70px 'Liberation Sans', sans-serif;color:#333333;transform:scaleX(0.9150);transform-origin:left;">.. Mercadorias Recebidas em Bonificações</div>
<svg class="r" style="left:276.70px;top:589.60px" width="12" height="11" viewBox="0 0 12 11"><circle cx="3.9" cy="3.7" r="2.75" fill="none" stroke="#7e7e7e" stroke-width="1.15"/><line x1="5.9" y1="5.8" x2="9.1" y2="8.6" stroke="#7e7e7e" stroke-width="1.25" stroke-linecap="round"/></svg>
<div class="t" style="left:301.43px;top:587.93px;font:400 9.5px/12.35px 'Liberation Sans', sans-serif;color:#333333;transform:scaleX(0.9250);transform-origin:right;">(264.411,92)</div>
<div class="t" style="left:395.94px;top:587.93px;font:400 9.5px/12.35px 'Liberation Sans', sans-serif;color:#333333;transform:scaleX(0.9250);transform-origin:right;">)</div>
<div class="t" style="left:390.47px;top:588.69px;font:400 9.5px/12.35px 'Liberation Mono', monospace;color:#333333;transform:scaleX(0.8595);transform-origin:right;">%</div>
<div class="t" style="left:369.62px;top:587.93px;font:400 9.5px/12.35px 'Liberation Sans', sans-serif;color:#333333;transform:scaleX(0.9250);transform-origin:right;">(0,59</div>
<svg class="r" style="left:405.70px;top:589.60px" width="12" height="11" viewBox="0 0 12 11"><circle cx="3.9" cy="3.7" r="2.75" fill="none" stroke="#7e7e7e" stroke-width="1.15"/><line x1="5.9" y1="5.8" x2="9.1" y2="8.6" stroke="#7e7e7e" stroke-width="1.25" stroke-linecap="round"/></svg>
<div class="t" style="left:429.72px;top:587.93px;font:400 9.5px/12.35px 'Liberation Sans', sans-serif;color:#333333;transform:scaleX(0.9250);transform-origin:right;">(226.002,17)</div>
<div class="t" style="left:524.94px;top:587.93px;font:400 9.5px/12.35px 'Liberation Sans', sans-serif;color:#333333;transform:scaleX(0.9250);transform-origin:right;">)</div>
<div class="t" style="left:519.47px;top:588.69px;font:400 9.5px/12.35px 'Liberation Mono', monospace;color:#333333;transform:scaleX(0.8595);transform-origin:right;">%</div>
<div class="t" style="left:498.62px;top:587.93px;font:400 9.5px/12.35px 'Liberation Sans', sans-serif;color:#333333;transform:scaleX(0.9250);transform-origin:right;">(0,49</div>
<svg class="r" style="left:534.70px;top:589.60px" width="12" height="11" viewBox="0 0 12 11"><circle cx="3.9" cy="3.7" r="2.75" fill="none" stroke="#7e7e7e" stroke-width="1.15"/><line x1="5.9" y1="5.8" x2="9.1" y2="8.6" stroke="#7e7e7e" stroke-width="1.25" stroke-linecap="round"/></svg>
<div class="t" style="left:558.72px;top:587.93px;font:400 9.5px/12.35px 'Liberation Sans', sans-serif;color:#333333;transform:scaleX(0.9250);transform-origin:right;">(107.737,16)</div>
<div class="t" style="left:653.94px;top:587.93px;font:400 9.5px/12.35px 'Liberation Sans', sans-serif;color:#333333;transform:scaleX(0.9250);transform-origin:right;">)</div>
<div class="t" style="left:648.47px;top:588.69px;font:400 9.5px/12.35px 'Liberation Mono', monospace;color:#333333;transform:scaleX(0.8595);transform-origin:right;">%</div>
<div class="t" style="left:627.62px;top:587.93px;font:400 9.5px/12.35px 'Liberation Sans', sans-serif;color:#333333;transform:scaleX(0.9250);transform-origin:right;">(0,22</div>
<svg class="r" style="left:663.70px;top:589.60px" width="12" height="11" viewBox="0 0 12 11"><circle cx="3.9" cy="3.7" r="2.75" fill="none" stroke="#7e7e7e" stroke-width="1.15"/><line x1="5.9" y1="5.8" x2="9.1" y2="8.6" stroke="#7e7e7e" stroke-width="1.25" stroke-linecap="round"/></svg>
<div class="t" style="left:687.72px;top:587.93px;font:400 9.5px/12.35px 'Liberation Sans', sans-serif;color:#333333;transform:scaleX(0.9250);transform-origin:right;">(194.570,78)</div>
<div class="t" style="left:782.94px;top:587.93px;font:400 9.5px/12.35px 'Liberation Sans', sans-serif;color:#333333;transform:scaleX(0.9250);transform-origin:right;">)</div>
<div class="t" style="left:777.47px;top:588.69px;font:400 9.5px/12.35px 'Liberation Mono', monospace;color:#333333;transform:scaleX(0.8595);transform-origin:right;">%</div>
<div class="t" style="left:756.62px;top:587.93px;font:400 9.5px/12.35px 'Liberation Sans', sans-serif;color:#333333;transform:scaleX(0.9250);transform-origin:right;">(0,42</div>
<svg class="r" style="left:792.70px;top:589.60px" width="12" height="11" viewBox="0 0 12 11"><circle cx="3.9" cy="3.7" r="2.75" fill="none" stroke="#7e7e7e" stroke-width="1.15"/><line x1="5.9" y1="5.8" x2="9.1" y2="8.6" stroke="#7e7e7e" stroke-width="1.25" stroke-linecap="round"/></svg>
<div class="t" style="left:816.72px;top:587.93px;font:400 9.5px/12.35px 'Liberation Sans', sans-serif;color:#333333;transform:scaleX(0.9250);transform-origin:right;">(227.777,59)</div>
<div class="t" style="left:912.94px;top:587.93px;font:400 9.5px/12.35px 'Liberation Sans', sans-serif;color:#333333;transform:scaleX(0.9250);transform-origin:right;">)</div>
<div class="t" style="left:907.47px;top:588.69px;font:400 9.5px/12.35px 'Liberation Mono', monospace;color:#333333;transform:scaleX(0.8595);transform-origin:right;">%</div>
<div class="t" style="left:886.62px;top:587.93px;font:400 9.5px/12.35px 'Liberation Sans', sans-serif;color:#333333;transform:scaleX(0.9250);transform-origin:right;">(0,45</div>
<svg class="r" style="left:922.70px;top:589.60px" width="12" height="11" viewBox="0 0 12 11"><circle cx="3.9" cy="3.7" r="2.75" fill="none" stroke="#7e7e7e" stroke-width="1.15"/><line x1="5.9" y1="5.8" x2="9.1" y2="8.6" stroke="#7e7e7e" stroke-width="1.25" stroke-linecap="round"/></svg>
<div class="t" style="left:946.72px;top:587.93px;font:400 9.5px/12.35px 'Liberation Sans', sans-serif;color:#333333;transform:scaleX(0.9250);transform-origin:right;">(277.694,82)</div>
<div class="t" style="left:1041.94px;top:587.93px;font:400 9.5px/12.35px 'Liberation Sans', sans-serif;color:#333333;transform:scaleX(0.9250);transform-origin:right;">)</div>
<div class="t" style="left:1036.47px;top:588.69px;font:400 9.5px/12.35px 'Liberation Mono', monospace;color:#333333;transform:scaleX(0.8595);transform-origin:right;">%</div>
<div class="t" style="left:1015.62px;top:587.93px;font:400 9.5px/12.35px 'Liberation Sans', sans-serif;color:#333333;transform:scaleX(0.9250);transform-origin:right;">(0,57</div>
<svg class="r" style="left:1051.70px;top:589.60px" width="12" height="11" viewBox="0 0 12 11"><circle cx="3.9" cy="3.7" r="2.75" fill="none" stroke="#7e7e7e" stroke-width="1.15"/><line x1="5.9" y1="5.8" x2="9.1" y2="8.6" stroke="#7e7e7e" stroke-width="1.25" stroke-linecap="round"/></svg>
<div class="t" style="left:1075.72px;top:587.93px;font:400 9.5px/12.35px 'Liberation Sans', sans-serif;color:#333333;transform:scaleX(0.9250);transform-origin:right;">(408.246,38)</div>
<div class="t" style="left:1170.94px;top:587.93px;font:400 9.5px/12.35px 'Liberation Sans', sans-serif;color:#333333;transform:scaleX(0.9250);transform-origin:right;">)</div>
<div class="t" style="left:1165.47px;top:588.69px;font:400 9.5px/12.35px 'Liberation Mono', monospace;color:#333333;transform:scaleX(0.8595);transform-origin:right;">%</div>
<div class="t" style="left:1144.62px;top:587.93px;font:400 9.5px/12.35px 'Liberation Sans', sans-serif;color:#333333;transform:scaleX(0.9250);transform-origin:right;">(0,81</div>
<svg class="r" style="left:1181.10px;top:589.60px" width="12" height="11" viewBox="0 0 12 11"><circle cx="3.9" cy="3.7" r="2.75" fill="none" stroke="#7e7e7e" stroke-width="1.15"/><line x1="5.9" y1="5.8" x2="9.1" y2="8.6" stroke="#7e7e7e" stroke-width="1.25" stroke-linecap="round"/></svg>
<div class="t" style="left:10.90px;top:603.43px;font:400 9.0px/11.70px 'Liberation Sans', sans-serif;color:#333333;transform:scaleX(0.9150);transform-origin:left;">.. (-) ICMS S/ Compras</div>
<svg class="r" style="left:276.70px;top:604.60px" width="12" height="11" viewBox="0 0 12 11"><circle cx="3.9" cy="3.7" r="2.75" fill="none" stroke="#7e7e7e" stroke-width="1.15"/><line x1="5.9" y1="5.8" x2="9.1" y2="8.6" stroke="#7e7e7e" stroke-width="1.25" stroke-linecap="round"/></svg>
<div class="t" style="left:307.05px;top:602.93px;font:400 9.5px/12.35px 'Liberation Sans', sans-serif;color:#333333;transform:scaleX(0.9250);transform-origin:right;">836.347,10</div>
<div class="t" style="left:393.40px;top:603.69px;font:400 9.5px/12.35px 'Liberation Mono', monospace;color:#333333;transform:scaleX(0.8595);transform-origin:right;">%</div>
<div class="t" style="left:375.71px;top:602.93px;font:400 9.5px/12.35px 'Liberation Sans', sans-serif;color:#333333;transform:scaleX(0.9250);transform-origin:right;">1,88</div>
<svg class="r" style="left:405.70px;top:604.60px" width="12" height="11" viewBox="0 0 12 11"><circle cx="3.9" cy="3.7" r="2.75" fill="none" stroke="#7e7e7e" stroke-width="1.15"/><line x1="5.9" y1="5.8" x2="9.1" y2="8.6" stroke="#7e7e7e" stroke-width="1.25" stroke-linecap="round"/></svg>
<div class="t" style="left:436.05px;top:602.93px;font:400 9.5px/12.35px 'Liberation Sans', sans-serif;color:#333333;transform:scaleX(0.9250);transform-origin:right;">817.614,45</div>
<div class="t" style="left:522.40px;top:603.69px;font:400 9.5px/12.35px 'Liberation Mono', monospace;color:#333333;transform:scaleX(0.8595);transform-origin:right;">%</div>
<div class="t" style="left:504.71px;top:602.93px;font:400 9.5px/12.35px 'Liberation Sans', sans-serif;color:#333333;transform:scaleX(0.9250);transform-origin:right;">1,79</div>
<svg class="r" style="left:534.70px;top:604.60px" width="12" height="11" viewBox="0 0 12 11"><circle cx="3.9" cy="3.7" r="2.75" fill="none" stroke="#7e7e7e" stroke-width="1.15"/><line x1="5.9" y1="5.8" x2="9.1" y2="8.6" stroke="#7e7e7e" stroke-width="1.25" stroke-linecap="round"/></svg>
<div class="t" style="left:565.05px;top:602.93px;font:400 9.5px/12.35px 'Liberation Sans', sans-serif;color:#333333;transform:scaleX(0.9250);transform-origin:right;">727.473,35</div>
<div class="t" style="left:651.40px;top:603.69px;font:400 9.5px/12.35px 'Liberation Mono', monospace;color:#333333;transform:scaleX(0.8595);transform-origin:right;">%</div>
<div class="t" style="left:633.71px;top:602.93px;font:400 9.5px/12.35px 'Liberation Sans', sans-serif;color:#333333;transform:scaleX(0.9250);transform-origin:right;">1,46</div>
<svg class="r" style="left:663.70px;top:604.60px" width="12" height="11" viewBox="0 0 12 11"><circle cx="3.9" cy="3.7" r="2.75" fill="none" stroke="#7e7e7e" stroke-width="1.15"/><line x1="5.9" y1="5.8" x2="9.1" y2="8.6" stroke="#7e7e7e" stroke-width="1.25" stroke-linecap="round"/></svg>
<div class="t" style="left:694.05px;top:602.93px;font:400 9.5px/12.35px 'Liberation Sans', sans-serif;color:#333333;transform:scaleX(0.9250);transform-origin:right;">739.991,86</div>
<div class="t" style="left:780.40px;top:603.69px;font:400 9.5px/12.35px 'Liberation Mono', monospace;color:#333333;transform:scaleX(0.8595);transform-origin:right;">%</div>
<div class="t" style="left:762.71px;top:602.93px;font:400 9.5px/12.35px 'Liberation Sans', sans-serif;color:#333333;transform:scaleX(0.9250);transform-origin:right;">1,61</div>
<svg class="r" style="left:792.70px;top:604.60px" width="12" height="11" viewBox="0 0 12 11"><circle cx="3.9" cy="3.7" r="2.75" fill="none" stroke="#7e7e7e" stroke-width="1.15"/><line x1="5.9" y1="5.8" x2="9.1" y2="8.6" stroke="#7e7e7e" stroke-width="1.25" stroke-linecap="round"/></svg>
<div class="t" style="left:823.05px;top:602.93px;font:400 9.5px/12.35px 'Liberation Sans', sans-serif;color:#333333;transform:scaleX(0.9250);transform-origin:right;">950.728,65</div>
<div class="t" style="left:910.40px;top:603.69px;font:400 9.5px/12.35px 'Liberation Mono', monospace;color:#333333;transform:scaleX(0.8595);transform-origin:right;">%</div>
<div class="t" style="left:892.71px;top:602.93px;font:400 9.5px/12.35px 'Liberation Sans', sans-serif;color:#333333;transform:scaleX(0.9250);transform-origin:right;">1,86</div>
<svg class="r" style="left:922.70px;top:604.60px" width="12" height="11" viewBox="0 0 12 11"><circle cx="3.9" cy="3.7" r="2.75" fill="none" stroke="#7e7e7e" stroke-width="1.15"/><line x1="5.9" y1="5.8" x2="9.1" y2="8.6" stroke="#7e7e7e" stroke-width="1.25" stroke-linecap="round"/></svg>
<div class="t" style="left:953.05px;top:602.93px;font:400 9.5px/12.35px 'Liberation Sans', sans-serif;color:#333333;transform:scaleX(0.9250);transform-origin:right;">762.204,09</div>
<div class="t" style="left:1039.40px;top:603.69px;font:400 9.5px/12.35px 'Liberation Mono', monospace;color:#333333;transform:scaleX(0.8595);transform-origin:right;">%</div>
<div class="t" style="left:1021.71px;top:602.93px;font:400 9.5px/12.35px 'Liberation Sans', sans-serif;color:#333333;transform:scaleX(0.9250);transform-origin:right;">1,57</div>
<svg class="r" style="left:1051.70px;top:604.60px" width="12" height="11" viewBox="0 0 12 11"><circle cx="3.9" cy="3.7" r="2.75" fill="none" stroke="#7e7e7e" stroke-width="1.15"/><line x1="5.9" y1="5.8" x2="9.1" y2="8.6" stroke="#7e7e7e" stroke-width="1.25" stroke-linecap="round"/></svg>
<div class="t" style="left:1082.05px;top:602.93px;font:400 9.5px/12.35px 'Liberation Sans', sans-serif;color:#333333;transform:scaleX(0.9250);transform-origin:right;">888.208,54</div>
<div class="t" style="left:1168.40px;top:603.69px;font:400 9.5px/12.35px 'Liberation Mono', monospace;color:#333333;transform:scaleX(0.8595);transform-origin:right;">%</div>
<div class="t" style="left:1150.71px;top:602.93px;font:400 9.5px/12.35px 'Liberation Sans', sans-serif;color:#333333;transform:scaleX(0.9250);transform-origin:right;">1,77</div>
<svg class="r" style="left:1181.10px;top:604.60px" width="12" height="11" viewBox="0 0 12 11"><circle cx="3.9" cy="3.7" r="2.75" fill="none" stroke="#7e7e7e" stroke-width="1.15"/><line x1="5.9" y1="5.8" x2="9.1" y2="8.6" stroke="#7e7e7e" stroke-width="1.25" stroke-linecap="round"/></svg>
<div class="t" style="left:10.90px;top:618.43px;font:400 9.0px/11.70px 'Liberation Sans', sans-serif;color:#333333;transform:scaleX(0.9150);transform-origin:left;">.. (-) PIS S/ Compras</div>
<svg class="r" style="left:276.70px;top:619.60px" width="12" height="11" viewBox="0 0 12 11"><circle cx="3.9" cy="3.7" r="2.75" fill="none" stroke="#7e7e7e" stroke-width="1.15"/><line x1="5.9" y1="5.8" x2="9.1" y2="8.6" stroke="#7e7e7e" stroke-width="1.25" stroke-linecap="round"/></svg>
<div class="t" style="left:307.05px;top:617.93px;font:400 9.5px/12.35px 'Liberation Sans', sans-serif;color:#333333;transform:scaleX(0.9250);transform-origin:right;">177.825,55</div>
<div class="t" style="left:393.40px;top:618.69px;font:400 9.5px/12.35px 'Liberation Mono', monospace;color:#333333;transform:scaleX(0.8595);transform-origin:right;">%</div>
<div class="t" style="left:375.71px;top:617.93px;font:400 9.5px/12.35px 'Liberation Sans', sans-serif;color:#333333;transform:scaleX(0.9250);transform-origin:right;">0,40</div>
<svg class="r" style="left:405.70px;top:619.60px" width="12" height="11" viewBox="0 0 12 11"><circle cx="3.9" cy="3.7" r="2.75" fill="none" stroke="#7e7e7e" stroke-width="1.15"/><line x1="5.9" y1="5.8" x2="9.1" y2="8.6" stroke="#7e7e7e" stroke-width="1.25" stroke-linecap="round"/></svg>
<div class="t" style="left:436.05px;top:617.93px;font:400 9.5px/12.35px 'Liberation Sans', sans-serif;color:#333333;transform:scaleX(0.9250);transform-origin:right;">207.846,14</div>
<div class="t" style="left:522.40px;top:618.69px;font:400 9.5px/12.35px 'Liberation Mono', monospace;color:#333333;transform:scaleX(0.8595);transform-origin:right;">%</div>
<div class="t" style="left:504.71px;top:617.93px;font:400 9.5px/12.35px 'Liberation Sans', sans-serif;color:#333333;transform:scaleX(0.9250);transform-origin:right;">0,45</div>
<svg class="r" style="left:534.70px;top:619.60px" width="12" height="11" viewBox="0 0 12 11"><circle cx="3.9" cy="3.7" r="2.75" fill="none" stroke="#7e7e7e" stroke-width="1.15"/><line x1="5.9" y1="5.8" x2="9.1" y2="8.6" stroke="#7e7e7e" stroke-width="1.25" stroke-linecap="round"/></svg>
<div class="t" style="left:565.05px;top:617.93px;font:400 9.5px/12.35px 'Liberation Sans', sans-serif;color:#333333;transform:scaleX(0.9250);transform-origin:right;">192.295,70</div>
<div class="t" style="left:651.40px;top:618.69px;font:400 9.5px/12.35px 'Liberation Mono', monospace;color:#333333;transform:scaleX(0.8595);transform-origin:right;">%</div>
<div class="t" style="left:633.71px;top:617.93px;font:400 9.5px/12.35px 'Liberation Sans', sans-serif;color:#333333;transform:scaleX(0.9250);transform-origin:right;">0,39</div>
<svg class="r" style="left:663.70px;top:619.60px" width="12" height="11" viewBox="0 0 12 11"><circle cx="3.9" cy="3.7" r="2.75" fill="none" stroke="#7e7e7e" stroke-width="1.15"/><line x1="5.9" y1="5.8" x2="9.1" y2="8.6" stroke="#7e7e7e" stroke-width="1.25" stroke-linecap="round"/></svg>
<div class="t" style="left:694.05px;top:617.93px;font:400 9.5px/12.35px 'Liberation Sans', sans-serif;color:#333333;transform:scaleX(0.9250);transform-origin:right;">201.480,50</div>
<div class="t" style="left:780.40px;top:618.69px;font:400 9.5px/12.35px 'Liberation Mono', monospace;color:#333333;transform:scaleX(0.8595);transform-origin:right;">%</div>
<div class="t" style="left:762.71px;top:617.93px;font:400 9.5px/12.35px 'Liberation Sans', sans-serif;color:#333333;transform:scaleX(0.9250);transform-origin:right;">0,44</div>
<svg class="r" style="left:792.70px;top:619.60px" width="12" height="11" viewBox="0 0 12 11"><circle cx="3.9" cy="3.7" r="2.75" fill="none" stroke="#7e7e7e" stroke-width="1.15"/><line x1="5.9" y1="5.8" x2="9.1" y2="8.6" stroke="#7e7e7e" stroke-width="1.25" stroke-linecap="round"/></svg>
<div class="t" style="left:823.05px;top:617.93px;font:400 9.5px/12.35px 'Liberation Sans', sans-serif;color:#333333;transform:scaleX(0.9250);transform-origin:right;">225.497,00</div>
<div class="t" style="left:910.40px;top:618.69px;font:400 9.5px/12.35px 'Liberation Mono', monospace;color:#333333;transform:scaleX(0.8595);transform-origin:right;">%</div>
<div class="t" style="left:892.71px;top:617.93px;font:400 9.5px/12.35px 'Liberation Sans', sans-serif;color:#333333;transform:scaleX(0.9250);transform-origin:right;">0,44</div>
<svg class="r" style="left:922.70px;top:619.60px" width="12" height="11" viewBox="0 0 12 11"><circle cx="3.9" cy="3.7" r="2.75" fill="none" stroke="#7e7e7e" stroke-width="1.15"/><line x1="5.9" y1="5.8" x2="9.1" y2="8.6" stroke="#7e7e7e" stroke-width="1.25" stroke-linecap="round"/></svg>
<div class="t" style="left:953.05px;top:617.93px;font:400 9.5px/12.35px 'Liberation Sans', sans-serif;color:#333333;transform:scaleX(0.9250);transform-origin:right;">198.600,91</div>
<div class="t" style="left:1039.40px;top:618.69px;font:400 9.5px/12.35px 'Liberation Mono', monospace;color:#333333;transform:scaleX(0.8595);transform-origin:right;">%</div>
<div class="t" style="left:1021.71px;top:617.93px;font:400 9.5px/12.35px 'Liberation Sans', sans-serif;color:#333333;transform:scaleX(0.9250);transform-origin:right;">0,41</div>
<svg class="r" style="left:1051.70px;top:619.60px" width="12" height="11" viewBox="0 0 12 11"><circle cx="3.9" cy="3.7" r="2.75" fill="none" stroke="#7e7e7e" stroke-width="1.15"/><line x1="5.9" y1="5.8" x2="9.1" y2="8.6" stroke="#7e7e7e" stroke-width="1.25" stroke-linecap="round"/></svg>
<div class="t" style="left:1082.05px;top:617.93px;font:400 9.5px/12.35px 'Liberation Sans', sans-serif;color:#333333;transform:scaleX(0.9250);transform-origin:right;">236.414,92</div>
<div class="t" style="left:1168.40px;top:618.69px;font:400 9.5px/12.35px 'Liberation Mono', monospace;color:#333333;transform:scaleX(0.8595);transform-origin:right;">%</div>
<div class="t" style="left:1150.71px;top:617.93px;font:400 9.5px/12.35px 'Liberation Sans', sans-serif;color:#333333;transform:scaleX(0.9250);transform-origin:right;">0,47</div>
<svg class="r" style="left:1181.10px;top:619.60px" width="12" height="11" viewBox="0 0 12 11"><circle cx="3.9" cy="3.7" r="2.75" fill="none" stroke="#7e7e7e" stroke-width="1.15"/><line x1="5.9" y1="5.8" x2="9.1" y2="8.6" stroke="#7e7e7e" stroke-width="1.25" stroke-linecap="round"/></svg>
<div class="t" style="left:10.90px;top:633.43px;font:400 9.0px/11.70px 'Liberation Sans', sans-serif;color:#333333;transform:scaleX(0.9150);transform-origin:left;">.. (-) COFINS S S/ Compras</div>
<svg class="r" style="left:276.70px;top:634.60px" width="12" height="11" viewBox="0 0 12 11"><circle cx="3.9" cy="3.7" r="2.75" fill="none" stroke="#7e7e7e" stroke-width="1.15"/><line x1="5.9" y1="5.8" x2="9.1" y2="8.6" stroke="#7e7e7e" stroke-width="1.25" stroke-linecap="round"/></svg>
<div class="t" style="left:307.05px;top:632.93px;font:400 9.5px/12.35px 'Liberation Sans', sans-serif;color:#333333;transform:scaleX(0.9250);transform-origin:right;">819.399,89</div>
<div class="t" style="left:393.40px;top:633.69px;font:400 9.5px/12.35px 'Liberation Mono', monospace;color:#333333;transform:scaleX(0.8595);transform-origin:right;">%</div>
<div class="t" style="left:375.71px;top:632.93px;font:400 9.5px/12.35px 'Liberation Sans', sans-serif;color:#333333;transform:scaleX(0.9250);transform-origin:right;">1,84</div>
<svg class="r" style="left:405.70px;top:634.60px" width="12" height="11" viewBox="0 0 12 11"><circle cx="3.9" cy="3.7" r="2.75" fill="none" stroke="#7e7e7e" stroke-width="1.15"/><line x1="5.9" y1="5.8" x2="9.1" y2="8.6" stroke="#7e7e7e" stroke-width="1.25" stroke-linecap="round"/></svg>
<div class="t" style="left:436.05px;top:632.93px;font:400 9.5px/12.35px 'Liberation Sans', sans-serif;color:#333333;transform:scaleX(0.9250);transform-origin:right;">957.674,07</div>
<div class="t" style="left:522.40px;top:633.69px;font:400 9.5px/12.35px 'Liberation Mono', monospace;color:#333333;transform:scaleX(0.8595);transform-origin:right;">%</div>
<div class="t" style="left:504.71px;top:632.93px;font:400 9.5px/12.35px 'Liberation Sans', sans-serif;color:#333333;transform:scaleX(0.9250);transform-origin:right;">2,09</div>
<svg class="r" style="left:534.70px;top:634.60px" width="12" height="11" viewBox="0 0 12 11"><circle cx="3.9" cy="3.7" r="2.75" fill="none" stroke="#7e7e7e" stroke-width="1.15"/><line x1="5.9" y1="5.8" x2="9.1" y2="8.6" stroke="#7e7e7e" stroke-width="1.25" stroke-linecap="round"/></svg>
<div class="t" style="left:565.05px;top:632.93px;font:400 9.5px/12.35px 'Liberation Sans', sans-serif;color:#333333;transform:scaleX(0.9250);transform-origin:right;">886.136,48</div>
<div class="t" style="left:651.40px;top:633.69px;font:400 9.5px/12.35px 'Liberation Mono', monospace;color:#333333;transform:scaleX(0.8595);transform-origin:right;">%</div>
<div class="t" style="left:633.71px;top:632.93px;font:400 9.5px/12.35px 'Liberation Sans', sans-serif;color:#333333;transform:scaleX(0.9250);transform-origin:right;">1,78</div>
<svg class="r" style="left:663.70px;top:634.60px" width="12" height="11" viewBox="0 0 12 11"><circle cx="3.9" cy="3.7" r="2.75" fill="none" stroke="#7e7e7e" stroke-width="1.15"/><line x1="5.9" y1="5.8" x2="9.1" y2="8.6" stroke="#7e7e7e" stroke-width="1.25" stroke-linecap="round"/></svg>
<div class="t" style="left:694.05px;top:632.93px;font:400 9.5px/12.35px 'Liberation Sans', sans-serif;color:#333333;transform:scaleX(0.9250);transform-origin:right;">928.303,20</div>
<div class="t" style="left:780.40px;top:633.69px;font:400 9.5px/12.35px 'Liberation Mono', monospace;color:#333333;transform:scaleX(0.8595);transform-origin:right;">%</div>
<div class="t" style="left:762.71px;top:632.93px;font:400 9.5px/12.35px 'Liberation Sans', sans-serif;color:#333333;transform:scaleX(0.9250);transform-origin:right;">2,02</div>
<svg class="r" style="left:792.70px;top:634.60px" width="12" height="11" viewBox="0 0 12 11"><circle cx="3.9" cy="3.7" r="2.75" fill="none" stroke="#7e7e7e" stroke-width="1.15"/><line x1="5.9" y1="5.8" x2="9.1" y2="8.6" stroke="#7e7e7e" stroke-width="1.25" stroke-linecap="round"/></svg>
<div class="t" style="left:815.13px;top:632.93px;font:400 9.5px/12.35px 'Liberation Sans', sans-serif;color:#333333;transform:scaleX(0.9250);transform-origin:right;">1.038.922,77</div>
<div class="t" style="left:910.40px;top:633.69px;font:400 9.5px/12.35px 'Liberation Mono', monospace;color:#333333;transform:scaleX(0.8595);transform-origin:right;">%</div>
<div class="t" style="left:892.71px;top:632.93px;font:400 9.5px/12.35px 'Liberation Sans', sans-serif;color:#333333;transform:scaleX(0.9250);transform-origin:right;">2,04</div>
<svg class="r" style="left:922.70px;top:634.60px" width="12" height="11" viewBox="0 0 12 11"><circle cx="3.9" cy="3.7" r="2.75" fill="none" stroke="#7e7e7e" stroke-width="1.15"/><line x1="5.9" y1="5.8" x2="9.1" y2="8.6" stroke="#7e7e7e" stroke-width="1.25" stroke-linecap="round"/></svg>
<div class="t" style="left:953.05px;top:632.93px;font:400 9.5px/12.35px 'Liberation Sans', sans-serif;color:#333333;transform:scaleX(0.9250);transform-origin:right;">915.321,16</div>
<div class="t" style="left:1039.40px;top:633.69px;font:400 9.5px/12.35px 'Liberation Mono', monospace;color:#333333;transform:scaleX(0.8595);transform-origin:right;">%</div>
<div class="t" style="left:1021.71px;top:632.93px;font:400 9.5px/12.35px 'Liberation Sans', sans-serif;color:#333333;transform:scaleX(0.9250);transform-origin:right;">1,88</div>
<svg class="r" style="left:1051.70px;top:634.60px" width="12" height="11" viewBox="0 0 12 11"><circle cx="3.9" cy="3.7" r="2.75" fill="none" stroke="#7e7e7e" stroke-width="1.15"/><line x1="5.9" y1="5.8" x2="9.1" y2="8.6" stroke="#7e7e7e" stroke-width="1.25" stroke-linecap="round"/></svg>
<div class="t" style="left:1074.13px;top:632.93px;font:400 9.5px/12.35px 'Liberation Sans', sans-serif;color:#333333;transform:scaleX(0.9250);transform-origin:right;">1.089.189,92</div>
<div class="t" style="left:1168.40px;top:633.69px;font:400 9.5px/12.35px 'Liberation Mono', monospace;color:#333333;transform:scaleX(0.8595);transform-origin:right;">%</div>
<div class="t" style="left:1150.71px;top:632.93px;font:400 9.5px/12.35px 'Liberation Sans', sans-serif;color:#333333;transform:scaleX(0.9250);transform-origin:right;">2,17</div>
<svg class="r" style="left:1181.10px;top:634.60px" width="12" height="11" viewBox="0 0 12 11"><circle cx="3.9" cy="3.7" r="2.75" fill="none" stroke="#7e7e7e" stroke-width="1.15"/><line x1="5.9" y1="5.8" x2="9.1" y2="8.6" stroke="#7e7e7e" stroke-width="1.25" stroke-linecap="round"/></svg>
<div class="t" style="left:10.90px;top:648.43px;font:400 9.0px/11.70px 'Liberation Sans', sans-serif;color:#333333;transform:scaleX(0.9150);transform-origin:left;">.. (+/-) Transferencias de estoques</div>
<svg class="r" style="left:276.70px;top:649.60px" width="12" height="11" viewBox="0 0 12 11"><circle cx="3.9" cy="3.7" r="2.75" fill="none" stroke="#7e7e7e" stroke-width="1.15"/><line x1="5.9" y1="5.8" x2="9.1" y2="8.6" stroke="#7e7e7e" stroke-width="1.25" stroke-linecap="round"/></svg>
<div class="t" style="left:311.29px;top:647.93px;font:400 9.5px/12.35px 'Liberation Sans', sans-serif;color:#333333;transform:scaleX(0.9250);transform-origin:right;">(1.544,98)</div>
<div class="t" style="left:395.94px;top:647.93px;font:400 9.5px/12.35px 'Liberation Sans', sans-serif;color:#333333;transform:scaleX(0.9250);transform-origin:right;">)</div>
<div class="t" style="left:390.47px;top:648.69px;font:400 9.5px/12.35px 'Liberation Mono', monospace;color:#333333;transform:scaleX(0.8595);transform-origin:right;">%</div>
<div class="t" style="left:369.62px;top:647.93px;font:400 9.5px/12.35px 'Liberation Sans', sans-serif;color:#333333;transform:scaleX(0.9250);transform-origin:right;">(0,00</div>
<svg class="r" style="left:405.70px;top:649.60px" width="12" height="11" viewBox="0 0 12 11"><circle cx="3.9" cy="3.7" r="2.75" fill="none" stroke="#7e7e7e" stroke-width="1.15"/><line x1="5.9" y1="5.8" x2="9.1" y2="8.6" stroke="#7e7e7e" stroke-width="1.25" stroke-linecap="round"/></svg>
<div class="t" style="left:458.78px;top:647.93px;font:400 9.5px/12.35px 'Liberation Sans', sans-serif;color:#333333;transform:scaleX(0.9250);transform-origin:right;">(3,91)</div>
<div class="t" style="left:524.94px;top:647.93px;font:400 9.5px/12.35px 'Liberation Sans', sans-serif;color:#333333;transform:scaleX(0.9250);transform-origin:right;">)</div>
<div class="t" style="left:519.47px;top:648.69px;font:400 9.5px/12.35px 'Liberation Mono', monospace;color:#333333;transform:scaleX(0.8595);transform-origin:right;">%</div>
<div class="t" style="left:498.62px;top:647.93px;font:400 9.5px/12.35px 'Liberation Sans', sans-serif;color:#333333;transform:scaleX(0.9250);transform-origin:right;">(0,00</div>
<svg class="r" style="left:534.70px;top:649.60px" width="12" height="11" viewBox="0 0 12 11"><circle cx="3.9" cy="3.7" r="2.75" fill="none" stroke="#7e7e7e" stroke-width="1.15"/><line x1="5.9" y1="5.8" x2="9.1" y2="8.6" stroke="#7e7e7e" stroke-width="1.25" stroke-linecap="round"/></svg>
<div class="t" style="left:569.29px;top:647.93px;font:400 9.5px/12.35px 'Liberation Sans', sans-serif;color:#333333;transform:scaleX(0.9250);transform-origin:right;">(1.488,92)</div>
<div class="t" style="left:653.94px;top:647.93px;font:400 9.5px/12.35px 'Liberation Sans', sans-serif;color:#333333;transform:scaleX(0.9250);transform-origin:right;">)</div>
<div class="t" style="left:648.47px;top:648.69px;font:400 9.5px/12.35px 'Liberation Mono', monospace;color:#333333;transform:scaleX(0.8595);transform-origin:right;">%</div>
<div class="t" style="left:627.62px;top:647.93px;font:400 9.5px/12.35px 'Liberation Sans', sans-serif;color:#333333;transform:scaleX(0.9250);transform-origin:right;">(0,00</div>
<svg class="r" style="left:663.70px;top:649.60px" width="12" height="11" viewBox="0 0 12 11"><circle cx="3.9" cy="3.7" r="2.75" fill="none" stroke="#7e7e7e" stroke-width="1.15"/><line x1="5.9" y1="5.8" x2="9.1" y2="8.6" stroke="#7e7e7e" stroke-width="1.25" stroke-linecap="round"/></svg>
<div class="t" style="left:723.11px;top:647.93px;font:400 9.5px/12.35px 'Liberation Sans', sans-serif;color:#333333;transform:scaleX(0.9250);transform-origin:right;">0,00</div>
<div class="t" style="left:780.40px;top:648.69px;font:400 9.5px/12.35px 'Liberation Mono', monospace;color:#333333;transform:scaleX(0.8595);transform-origin:right;">%</div>
<div class="t" style="left:762.71px;top:647.93px;font:400 9.5px/12.35px 'Liberation Sans', sans-serif;color:#333333;transform:scaleX(0.9250);transform-origin:right;">0,00</div>
<svg class="r" style="left:792.70px;top:649.60px" width="12" height="11" viewBox="0 0 12 11"><circle cx="3.9" cy="3.7" r="2.75" fill="none" stroke="#7e7e7e" stroke-width="1.15"/><line x1="5.9" y1="5.8" x2="9.1" y2="8.6" stroke="#7e7e7e" stroke-width="1.25" stroke-linecap="round"/></svg>
<div class="t" style="left:840.50px;top:647.93px;font:400 9.5px/12.35px 'Liberation Sans', sans-serif;color:#333333;transform:scaleX(0.9250);transform-origin:right;">(45,76)</div>
<div class="t" style="left:912.94px;top:647.93px;font:400 9.5px/12.35px 'Liberation Sans', sans-serif;color:#333333;transform:scaleX(0.9250);transform-origin:right;">)</div>
<div class="t" style="left:907.47px;top:648.69px;font:400 9.5px/12.35px 'Liberation Mono', monospace;color:#333333;transform:scaleX(0.8595);transform-origin:right;">%</div>
<div class="t" style="left:886.62px;top:647.93px;font:400 9.5px/12.35px 'Liberation Sans', sans-serif;color:#333333;transform:scaleX(0.9250);transform-origin:right;">(0,00</div>
<svg class="r" style="left:922.70px;top:649.60px" width="12" height="11" viewBox="0 0 12 11"><circle cx="3.9" cy="3.7" r="2.75" fill="none" stroke="#7e7e7e" stroke-width="1.15"/><line x1="5.9" y1="5.8" x2="9.1" y2="8.6" stroke="#7e7e7e" stroke-width="1.25" stroke-linecap="round"/></svg>
<div class="t" style="left:982.11px;top:647.93px;font:400 9.5px/12.35px 'Liberation Sans', sans-serif;color:#333333;transform:scaleX(0.9250);transform-origin:right;">0,00</div>
<div class="t" style="left:1039.40px;top:648.69px;font:400 9.5px/12.35px 'Liberation Mono', monospace;color:#333333;transform:scaleX(0.8595);transform-origin:right;">%</div>
<div class="t" style="left:1021.71px;top:647.93px;font:400 9.5px/12.35px 'Liberation Sans', sans-serif;color:#333333;transform:scaleX(0.9250);transform-origin:right;">0,00</div>
<svg class="r" style="left:1051.70px;top:649.60px" width="12" height="11" viewBox="0 0 12 11"><circle cx="3.9" cy="3.7" r="2.75" fill="none" stroke="#7e7e7e" stroke-width="1.15"/><line x1="5.9" y1="5.8" x2="9.1" y2="8.6" stroke="#7e7e7e" stroke-width="1.25" stroke-linecap="round"/></svg>
<div class="t" style="left:1111.11px;top:647.93px;font:400 9.5px/12.35px 'Liberation Sans', sans-serif;color:#333333;transform:scaleX(0.9250);transform-origin:right;">0,00</div>
<div class="t" style="left:1168.40px;top:648.69px;font:400 9.5px/12.35px 'Liberation Mono', monospace;color:#333333;transform:scaleX(0.8595);transform-origin:right;">%</div>
<div class="t" style="left:1150.71px;top:647.93px;font:400 9.5px/12.35px 'Liberation Sans', sans-serif;color:#333333;transform:scaleX(0.9250);transform-origin:right;">0,00</div>
<svg class="r" style="left:1181.10px;top:649.60px" width="12" height="11" viewBox="0 0 12 11"><circle cx="3.9" cy="3.7" r="2.75" fill="none" stroke="#7e7e7e" stroke-width="1.15"/><line x1="5.9" y1="5.8" x2="9.1" y2="8.6" stroke="#7e7e7e" stroke-width="1.25" stroke-linecap="round"/></svg>
<div class="r" style="left:7.00px;top:662.00px;width:1193.00px;height:11.00px;background:#fafafa;"></div>
<svg class="r" style="left:9px;top:663px" width="8" height="9" viewBox="0 0 8 9"><path d="M6.8 1 L1 4.5 L6.8 8 Z" fill="#8c8c8c"/></svg>
<div class="r" style="left:20.00px;top:664.20px;width:942.30px;height:6.40px;background:#8c8c8c;border-radius:3.2px;"></div>
</body></html>
